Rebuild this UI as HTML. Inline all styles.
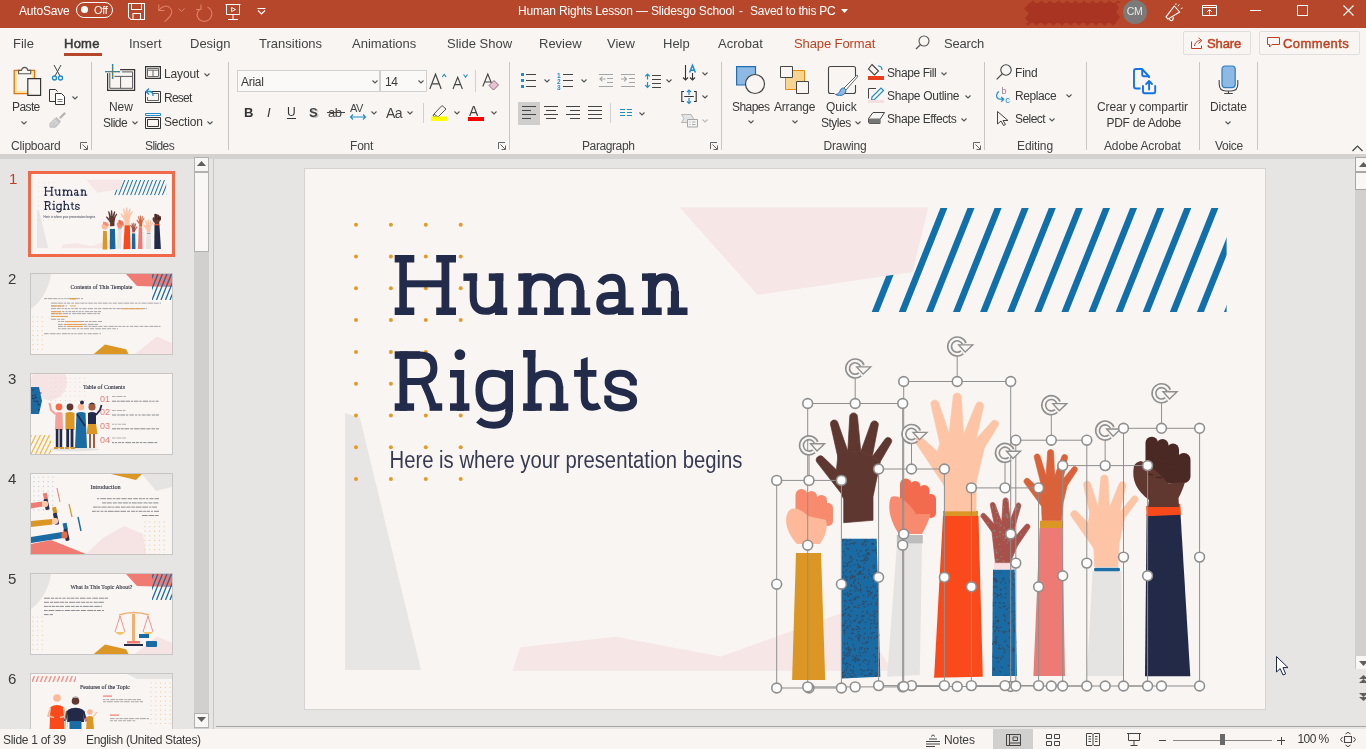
<!DOCTYPE html>
<html><head><meta charset="utf-8"><style>
html,body{margin:0;padding:0;width:1366px;height:749px;overflow:hidden;background:#e6e5e4;font-family:"Liberation Sans", sans-serif;}
.r{position:absolute;}
.t{position:absolute;line-height:1;white-space:nowrap;font-family:"Liberation Sans", sans-serif;}
svg{overflow:visible}
</style></head><body>
<div style="position:absolute;left:0;top:0;width:1366px;height:749px;will-change:transform"><div class="r" style="left:0px;top:0px;width:1366px;height:28px;background:#b7472a;"></div><div class="r" style="left:0px;top:28px;width:1366px;height:126px;background:#f8f5f2;"></div><div class="r" style="left:0px;top:154px;width:1366px;height:5px;background:#d4d2d0;"></div><div class="r" style="left:0px;top:159px;width:1366px;height:570px;background:#e6e5e4;"></div><div class="r" style="left:0px;top:729px;width:1366px;height:20px;background:#f8f5f2;"></div><div class="t " style="left:19px;top:4.84px;font-size:12px;color:#ffffff;letter-spacing:-0.2px;">AutoSave</div><div class="r" style="left:76px;top:2px;width:35px;height:14px;border:1px solid #fff;border-radius:8px;"></div><div class="r" style="left:81px;top:6px;width:7px;height:7px;border-radius:50%;background:#fff;"></div><div class="t " style="left:94px;top:4.69px;font-size:11px;color:#ffffff;letter-spacing:-0.3px;">Off</div><svg class="r" style="left:128px;top:3px;" width="18" height="18" viewBox="0 0 18 18"><path d="M0.5 0.5H16.5V16.5H3L0.5 14Z M3.5 0.5V6.5H13.5V0.5 M5 16.5V10.5H12.5V16.5" fill="none" stroke="#fff" stroke-width="1.05"/></svg><svg class="r" style="left:158px;top:3px;" width="16" height="18" viewBox="0 0 16 18"><path d="M0.8 1.5V7.5H6.5" fill="none" stroke="#e0826a" stroke-width="1.05"/><path d="M1.2 7C4 2.5 9.5 2 12.2 5C15.5 8.5 13 13 9 16.5L6.5 19" fill="none" stroke="#e0826a" stroke-width="1.05"/></svg><svg class="r" style="left:178px;top:8px;" width="7" height="4" viewBox="0 0 7 4"><path d="M0.5 0.5L3.5 3.5L6.5 0.5" fill="none" stroke="#e0826a" stroke-width="1"/></svg><svg class="r" style="left:196px;top:3px;" width="17" height="18" viewBox="0 0 17 18"><path d="M5 1.5V6.5H0" fill="none" stroke="#e0826a" stroke-width="1.05"/><path d="M4.5 6C1.5 8 0.5 11 1.5 14C3 17.5 7 19 10.5 18C14 17 16.2 13.5 15.8 10C15.5 7 13.5 5 11.5 4" fill="none" stroke="#e0826a" stroke-width="1.05"/></svg><svg class="r" style="left:225px;top:4px;" width="16" height="16" viewBox="0 0 16 16"><path d="M0.5 0.5H15.5 M1.5 0.5V10.5H14.5V0.5 M8 10.5V15.5 M3 15.5H13" fill="none" stroke="#fff" stroke-width="1"/><path d="M6.5 3.5L10.5 5.5L6.5 7.5Z" fill="none" stroke="#fff" stroke-width="1"/></svg><svg class="r" style="left:257px;top:8px;" width="9" height="7" viewBox="0 0 9 7"><path d="M0.5 0.5H8.5" stroke="#fff" stroke-width="1"/><path d="M1 2.5L4.5 6L8 2.5" fill="none" stroke="#fff" stroke-width="1.2"/></svg><div class="t " style="left:518px;top:5.34px;font-size:12px;color:#ffffff;letter-spacing:-0.17px;">Human Rights Lesson — Slidesgo School</div><div class="t " style="left:739px;top:5.34px;font-size:12px;color:#ffffff;">-</div><div class="t " style="left:750px;top:5.34px;font-size:12px;color:#ffffff;letter-spacing:-0.25px;">Saved to this PC</div><svg class="r" style="left:841px;top:9px;" width="7" height="4" viewBox="0 0 7 4"><path d="M0 0H7L3.5 4Z" fill="#fff"/></svg><svg class="r" style="left:0px;top:0px;" width="1366" height="28" viewBox="0 0 1366 28"><polygon points="1030.0,3.0 1033.0,0.5 1036.0,3.0 1038.5,3.0 1041.5,0.5 1044.5,3.0 1047.0,3.0 1050.0,0.5 1053.0,3.0 1055.5,3.0 1058.5,0.5 1061.5,3.0 1064.0,3.0 1067.0,0.5 1070.0,3.0 1072.5,3.0 1075.5,0.5 1078.5,3.0 1081.0,3.0 1084.0,0.5 1087.0,3.0 1089.5,3.0 1092.5,0.5 1095.5,3.0 1098.0,3.0 1101.0,0.5 1104.0,3.0 1106.5,3.0 1109.5,0.5 1112.5,3.0 1115.0,3.0 1118.0,0.5 1121.0,3.0 1116.0,3.0 1119.0,8.0 1116.0,12.0 1120.0,17.0 1116.0,23.0 1116.0,23.0 1113.0,25.5 1110.0,23.0 1107.5,23.0 1104.5,25.5 1101.5,23.0 1099.0,23.0 1096.0,25.5 1093.0,23.0 1090.5,23.0 1087.5,25.5 1084.5,23.0 1082.0,23.0 1079.0,25.5 1076.0,23.0 1073.5,23.0 1070.5,25.5 1067.5,23.0 1065.0,23.0 1062.0,25.5 1059.0,23.0 1056.5,23.0 1053.5,25.5 1050.5,23.0 1048.0,23.0 1045.0,25.5 1042.0,23.0 1039.5,23.0 1036.5,25.5 1033.5,23.0 1031.0,23.0 1028.0,25.5 1025.0,23.0 1029.0,23.0 1025.0,18.0 1029.0,13.0 1024.0,9.0 1029.0,3.0" fill="#aa3422"/></svg><div class="r" style="left:1123px;top:-0.5px;width:24px;height:24px;border-radius:50%;background:#7b7a79;"></div><div class="t " style="left:1126.8px;top:6.41px;font-size:10.5px;color:#e8e8e8;letter-spacing:-0.4px;">CM</div><svg class="r" style="left:1164px;top:4px;" width="19" height="17" viewBox="0 0 19 17"><path d="M2 12.9L10.3 2L15.7 8L4 15.1Z" fill="none" stroke="#fff" stroke-width="1.1" stroke-linejoin="round"/><path d="M5.5 14.3Q5.5 17 8 16.5Q9.5 16 9.2 13" fill="none" stroke="#fff" stroke-width="1.1"/><path d="M13.8 2.2L15.3 0.5 M16.8 4.6L18.6 4 M11.8 0.9L12 -0.6" stroke="#fff" stroke-width="1"/></svg><svg class="r" style="left:1202px;top:5px;" width="15" height="11" viewBox="0 0 15 11"><path d="M0.5 0.5H14.5V10.5H0.5Z M0.5 2.5H14.5 M7.5 9.5V5 M5 7L7.5 4.5L10 7" fill="none" stroke="#fff" stroke-width="1"/></svg><div class="r" style="left:1250px;top:10px;width:11px;height:1px;background:#fff;"></div><div class="r" style="left:1297px;top:5px;width:9px;height:9px;border:1px solid #fff;"></div><svg class="r" style="left:1343px;top:5px;" width="11" height="11" viewBox="0 0 11 11"><path d="M0.5 0.5L10.5 10.5M10.5 0.5L0.5 10.5" stroke="#fff" stroke-width="1.1"/></svg><div class="t " style="left:13px;top:37.30px;font-size:13px;color:#444444;">File</div><div class="t " style="left:129px;top:37.30px;font-size:13px;color:#444444;">Insert</div><div class="t " style="left:190px;top:37.30px;font-size:13px;color:#444444;">Design</div><div class="t " style="left:259px;top:37.30px;font-size:13px;color:#444444;">Transitions</div><div class="t " style="left:352px;top:37.30px;font-size:13px;color:#444444;">Animations</div><div class="t " style="left:447px;top:37.30px;font-size:13px;color:#444444;">Slide Show</div><div class="t " style="left:539px;top:37.30px;font-size:13px;color:#444444;">Review</div><div class="t " style="left:607px;top:37.30px;font-size:13px;color:#444444;">View</div><div class="t " style="left:663px;top:37.30px;font-size:13px;color:#444444;">Help</div><div class="t " style="left:718px;top:37.30px;font-size:13px;color:#444444;">Acrobat</div><div class="t " style="left:64px;top:37.30px;font-size:13px;color:#3a3a3a;letter-spacing:0.25px;-webkit-text-stroke:0.5px #3a3a3a;">Home</div><div class="r" style="left:64px;top:53px;width:38px;height:3px;background:#b7472a;"></div><div class="t " style="left:794px;top:37.30px;font-size:13px;color:#c43e1c;letter-spacing:-0.1px;">Shape Format</div><svg class="r" style="left:915px;top:35px;" width="15" height="15" viewBox="0 0 15 15"><circle cx="9" cy="6" r="5" fill="none" stroke="#555" stroke-width="1.1"/><path d="M5.5 9.5L1 14" stroke="#555" stroke-width="1.2"/></svg><div class="t " style="left:944px;top:37.30px;font-size:13px;color:#444444;letter-spacing:-0.2px;">Search</div><div class="r" style="left:1183px;top:31px;width:66px;height:22px;border:1px solid #e1dfdd;border-radius:2px;"></div><div class="r" style="left:1259px;top:31px;width:99px;height:22px;border:1px solid #e1dfdd;border-radius:2px;"></div><svg class="r" style="left:1191px;top:37px;" width="13" height="12" viewBox="0 0 13 12"><path d="M0.5 4.5V11.5H10.5V8.5 M3.5 9 C4 5 7 3.5 9.5 3.5 M7.5 0.8L10.8 3.6L7.5 6.4" fill="none" stroke="#c43e1c" stroke-width="1"/></svg><div class="t " style="left:1207px;top:37.30px;font-size:13px;color:#c43e1c;letter-spacing:-0.1px;-webkit-text-stroke:0.45px #c43e1c;">Share</div><svg class="r" style="left:1267px;top:37px;" width="13" height="11" viewBox="0 0 13 11"><path d="M0.5 0.5H12.5V7.5H5L2.5 10V7.5H0.5Z" fill="none" stroke="#c43e1c" stroke-width="1"/></svg><div class="t " style="left:1283px;top:37.30px;font-size:13px;color:#c43e1c;letter-spacing:0.4px;-webkit-text-stroke:0.45px #c43e1c;">Comments</div><div class="r" style="left:91px;top:62px;width:1px;height:88px;background:#c8c6c4;"></div><div class="r" style="left:228px;top:62px;width:1px;height:88px;background:#c8c6c4;"></div><div class="r" style="left:509px;top:62px;width:1px;height:88px;background:#c8c6c4;"></div><div class="r" style="left:721px;top:62px;width:1px;height:88px;background:#c8c6c4;"></div><div class="r" style="left:984px;top:62px;width:1px;height:88px;background:#c8c6c4;"></div><div class="r" style="left:1086px;top:62px;width:1px;height:88px;background:#c8c6c4;"></div><div class="r" style="left:1199px;top:62px;width:1px;height:88px;background:#c8c6c4;"></div><div class="r" style="left:1257px;top:62px;width:1px;height:88px;background:#c8c6c4;"></div><svg class="r" style="left:13px;top:65px;" width="29" height="32" viewBox="0 0 29 32"><path d="M1.2 5.3H21.6V28.6H1.2Z" fill="#fbe3a6" stroke="#e3730f" stroke-width="1.3"/><path d="M3.9 8H18.9V25.9H3.9Z" fill="#f8f5f2"/><path d="M5.6 8.8H17.7V5.4H14.8C14.3 1.3 9 1.3 8.5 5.4H5.6Z" fill="#f8f5f2" stroke="#5a5a5a" stroke-width="1.1"/><path d="M14.8 13.6H27.6V30.4H14.8Z" fill="#f8f5f2" stroke="#333" stroke-width="1.15"/></svg><div class="t " style="left:12px;top:100.54px;font-size:12px;color:#3b3a39;letter-spacing:-0.6px;">Paste</div><svg class="r" style="left:21px;top:121px;" width="6" height="4" viewBox="0 0 6 4"><path d="M0.5 0.5L3 3L5.5 0.5" fill="none" stroke="#555" stroke-width="1.1"/></svg><svg class="r" style="left:52px;top:65px;" width="11" height="16" viewBox="0 0 11 16"><path d="M2 0 L8 11 M9 0 L3 11" stroke="#444" stroke-width="1"/><circle cx="2.5" cy="13" r="2" fill="none" stroke="#1e8bcd" stroke-width="1.3"/><circle cx="8.5" cy="13" r="2" fill="none" stroke="#1e8bcd" stroke-width="1.3"/></svg><svg class="r" style="left:49px;top:89px;" width="17" height="16" viewBox="0 0 17 16"><path d="M7 12.5H0.5V0.5H6.5L8.5 2.5" fill="none" stroke="#333" stroke-width="1"/><path d="M6.5 4.5H12.5L15.5 7.5V15.5H6.5Z" fill="#fff" stroke="#333" stroke-width="1"/><path d="M8.5 10.5H13.5 M8.5 12.5H13.5" stroke="#555" stroke-width="0.8"/></svg><svg class="r" style="left:72px;top:96px;" width="6" height="4" viewBox="0 0 6 4"><path d="M0.5 0.5L3 3L5.5 0.5" fill="none" stroke="#555" stroke-width="1.1"/></svg><svg class="r" style="left:49px;top:112px;" width="17" height="16" viewBox="0 0 17 16"><path d="M11.5 5.5L15.5 1.5" stroke="#b5b5b5" stroke-width="2.4" stroke-linecap="round"/><polygon points="7.5,5 12,9.5 10.5,11 6,6.5" fill="#bdbdbd"/><polygon points="6,6.5 10.5,11 6.5,15.2 1,15.2 0.8,11.5" fill="#d3d3d3" stroke="#b8b8b8" stroke-width="0.8"/><path d="M3 14.5L6 10 M5.5 15L8 12" stroke="#b8b8b8" stroke-width="0.7"/></svg><div class="t " style="left:11px;top:140.14px;font-size:12px;color:#444444;letter-spacing:-0.2px;">Clipboard</div><svg class="r" style="left:80px;top:142px;" width="8" height="8" viewBox="0 0 8 8"><path d="M0.5 7V0.5H7 M2.5 2.5L7.5 7.5 M7.5 3.5V7.5H3.5" fill="none" stroke="#666" stroke-width="1"/></svg><svg class="r" style="left:104px;top:63px;" width="32" height="29" viewBox="0 0 32 29"><path d="M16.1 6.7H30.6V27.4H3.6V10.2" fill="none" stroke="#333" stroke-width="1.2"/><path d="M18 8.9H28.6V25.3H5.8V10 M10.5 13.4H28.6 M16.6 13.4V25.3" fill="none" stroke="#5a5a5a" stroke-width="1"/><path d="M1.2 8.6H16.1 M8.6 1.1V16.1" stroke="#7a7a3a" stroke-width="1.3"/><path d="M1.2 8.6H16.1 M8.6 1.1V16.1" stroke="#1e8bcd" stroke-width="1.3" stroke-dasharray="1.6 1.6"/></svg><div class="t " style="left:109px;top:100.54px;font-size:12px;color:#3b3a39;letter-spacing:-0.1px;">New</div><div class="t " style="left:103px;top:116.64px;font-size:12px;color:#3b3a39;letter-spacing:-0.5px;">Slide</div><svg class="r" style="left:132px;top:121px;" width="6" height="4" viewBox="0 0 6 4"><path d="M0.5 0.5L3 3L5.5 0.5" fill="none" stroke="#555" stroke-width="1.1"/></svg><svg class="r" style="left:145px;top:66px;" width="16" height="13" viewBox="0 0 16 13"><path d="M0.6 0.6H15.4V12.4H0.6Z" fill="none" stroke="#333" stroke-width="1.2"/><path d="M2.5 2.5H13.5V10.5H2.5Z M2.5 4.2H13.5 M8 4.2V10.5" fill="none" stroke="#5a5a5a" stroke-width="0.9"/></svg><div class="t " style="left:164px;top:67.84px;font-size:12px;color:#3b3a39;letter-spacing:-0.15px;">Layout</div><svg class="r" style="left:204px;top:73px;" width="6" height="4" viewBox="0 0 6 4"><path d="M0.5 0.5L3 3L5.5 0.5" fill="none" stroke="#555" stroke-width="1.1"/></svg><svg class="r" style="left:145px;top:88px;" width="16" height="15" viewBox="0 0 16 15"><path d="M0.5 3.5H15.5V14.5H0.5Z" fill="none" stroke="#333" stroke-width="1"/><path d="M8 5.5H13.5V12.5H2.5V9" fill="none" stroke="#555" stroke-width="0.9"/><path d="M4 0.5L1 3.5L4 6.5 M1.5 3.5H5C8 3.5 8 7.5 8 8" fill="none" stroke="#1e8bcd" stroke-width="1.3"/></svg><div class="t " style="left:164px;top:92.04px;font-size:12px;color:#3b3a39;letter-spacing:-0.75px;">Reset</div><svg class="r" style="left:145px;top:113px;" width="16" height="16" viewBox="0 0 16 16"><path d="M0.5 0.5H15.5V2.5H0.5Z" fill="none" stroke="#1e8bcd" stroke-width="1"/><path d="M0.5 4.5H15.5V15.5H0.5Z M2.5 6.5H13.5V13.5H2.5Z" fill="none" stroke="#333" stroke-width="1"/></svg><div class="t " style="left:164px;top:115.84px;font-size:12px;color:#3b3a39;letter-spacing:-0.2px;">Section</div><svg class="r" style="left:207px;top:121px;" width="6" height="4" viewBox="0 0 6 4"><path d="M0.5 0.5L3 3L5.5 0.5" fill="none" stroke="#555" stroke-width="1.1"/></svg><div class="t " style="left:145px;top:140.14px;font-size:12px;color:#444444;letter-spacing:-0.6px;">Slides</div><div class="r" style="left:237px;top:70px;width:143px;height:22px;border:1px solid #d2d0ce;box-sizing:border-box;background:#faf9f8"></div><div class="r" style="left:380px;top:70px;width:47px;height:22px;border:1px solid #d2d0ce;box-sizing:border-box;background:#faf9f8"></div><div class="t " style="left:241px;top:75.64px;font-size:12px;color:#3b3a39;letter-spacing:-0.3px;">Arial</div><svg class="r" style="left:372px;top:80px;" width="6" height="4" viewBox="0 0 6 4"><path d="M0.5 0.5L3 3L5.5 0.5" fill="none" stroke="#555" stroke-width="1.1"/></svg><div class="t " style="left:385px;top:75.64px;font-size:12px;color:#3b3a39;letter-spacing:-0.3px;">14</div><svg class="r" style="left:418px;top:80px;" width="6" height="4" viewBox="0 0 6 4"><path d="M0.5 0.5L3 3L5.5 0.5" fill="none" stroke="#555" stroke-width="1.1"/></svg><svg class="r" style="left:429px;top:73px;" width="18" height="17" viewBox="0 0 18 17"><path d="M0.8 16L6.5 1.2L12.2 16 M2.9 10.8H10.1" fill="none" stroke="#444" stroke-width="1.15"/><path d="M13.2 4L15.2 1.5L17.2 4" fill="none" stroke="#1e8bcd" stroke-width="1.1"/></svg><svg class="r" style="left:452px;top:73px;" width="17" height="17" viewBox="0 0 17 17"><path d="M1 16L5.7 4.3L10.4 16 M2.8 11.6H8.6" fill="none" stroke="#444" stroke-width="1.1"/><path d="M11.5 1.5L13.5 4L15.5 1.5" fill="none" stroke="#1e8bcd" stroke-width="1.1"/></svg><div class="r" style="left:475px;top:70px;width:1px;height:22px;background:#d2d0ce;"></div><svg class="r" style="left:482px;top:73px;" width="18" height="17" viewBox="0 0 18 17"><path d="M0.8 13.5L5.8 1L10.8 13.5 M2.6 9H9" fill="none" stroke="#444" stroke-width="1.1"/><path d="M7 12.5L12 7.5L16.5 12L11.5 17Z" fill="#e7c3d2" stroke="#8a6a7a" stroke-width="1"/></svg><div class="t " style="left:244px;top:106.00px;font-size:13px;color:#333;font-weight:700;">B</div><div class="t " style="left:267px;top:106.00px;font-size:13px;color:#333;font-style:italic;font-family:"Liberation Serif",serif;">I</div><div class="t " style="left:287px;top:105.84px;font-size:12px;color:#333;">U</div><div class="r" style="left:287px;top:118px;width:9px;height:1px;background:#333;"></div><div class="t " style="left:310.5px;top:107.30px;font-size:13px;color:#c8c6c4;font-weight:700;">S</div><div class="t " style="left:309px;top:106.00px;font-size:13px;color:#444;font-weight:700;">S</div><div class="t " style="left:328px;top:106.00px;font-size:13px;color:#444;letter-spacing:-0.5px;">ab</div><div class="r" style="left:327px;top:112px;width:18px;height:1px;background:#444;"></div><div class="t " style="left:350px;top:102.69px;font-size:11px;color:#444;letter-spacing:-0.6px;">AV</div><svg class="r" style="left:350px;top:114px;" width="16" height="6" viewBox="0 0 16 6"><path d="M0.5 3H15.5 M3 0.5L0.5 3L3 5.5 M13 0.5L15.5 3L13 5.5" fill="none" stroke="#1e8bcd" stroke-width="1.1"/></svg><svg class="r" style="left:371px;top:111px;" width="6" height="4" viewBox="0 0 6 4"><path d="M0.5 0.5L3 3L5.5 0.5" fill="none" stroke="#555" stroke-width="1.1"/></svg><div class="t " style="left:386px;top:106.15px;font-size:14px;color:#444;letter-spacing:-0.6px;">Aa</div><svg class="r" style="left:407px;top:111px;" width="6" height="4" viewBox="0 0 6 4"><path d="M0.5 0.5L3 3L5.5 0.5" fill="none" stroke="#555" stroke-width="1.1"/></svg><div class="r" style="left:423px;top:103px;width:1px;height:20px;background:#d2d0ce;"></div><svg class="r" style="left:431px;top:104px;" width="16" height="17" viewBox="0 0 16 17"><path d="M3 10 L11 1.5 L15 5 L7 13 Z M3 10 L2 12 L4 13 L7 13" fill="none" stroke="#555" stroke-width="1"/><path d="M0 12.5H16V17H0Z" fill="#ffff00"/></svg><svg class="r" style="left:454px;top:111px;" width="6" height="4" viewBox="0 0 6 4"><path d="M0.5 0.5L3 3L5.5 0.5" fill="none" stroke="#555" stroke-width="1.1"/></svg><div class="t " style="left:469px;top:104.15px;font-size:14px;color:#444;">A</div><div class="r" style="left:468px;top:117px;width:16px;height:4px;background:#ff0000;"></div><svg class="r" style="left:491px;top:111px;" width="6" height="4" viewBox="0 0 6 4"><path d="M0.5 0.5L3 3L5.5 0.5" fill="none" stroke="#555" stroke-width="1.1"/></svg><div class="t " style="left:350px;top:140.14px;font-size:12px;color:#444444;letter-spacing:-0.2px;">Font</div><svg class="r" style="left:498px;top:142px;" width="8" height="8" viewBox="0 0 8 8"><path d="M0.5 7V0.5H7 M2.5 2.5L7.5 7.5 M7.5 3.5V7.5H3.5" fill="none" stroke="#666" stroke-width="1"/></svg><div class="r" style="left:521px;top:73px;width:3px;height:3px;background:#1e8bcd;"></div><div class="r" style="left:521px;top:79px;width:3px;height:3px;background:#1e8bcd;"></div><div class="r" style="left:521px;top:85px;width:3px;height:3px;background:#1e8bcd;"></div><div class="r" style="left:526px;top:74px;width:10px;height:1px;background:#444"></div><div class="r" style="left:526px;top:80px;width:10px;height:1px;background:#444"></div><div class="r" style="left:526px;top:86px;width:10px;height:1px;background:#444"></div><svg class="r" style="left:544px;top:79px;" width="6" height="4" viewBox="0 0 6 4"><path d="M0.5 0.5L3 3L5.5 0.5" fill="none" stroke="#555" stroke-width="1.1"/></svg><svg class="r" style="left:557px;top:72px;" width="6" height="17" viewBox="0 0 6 17"><text x="0" y="6" font-size="6.5" fill="#1e8bcd" font-family="Liberation Sans" font-weight="700">1</text><text x="0" y="12" font-size="6.5" fill="#1e8bcd" font-family="Liberation Sans" font-weight="700">2</text><text x="0" y="18" font-size="6.5" fill="#1e8bcd" font-family="Liberation Sans" font-weight="700">3</text></svg><div class="r" style="left:563px;top:74px;width:10px;height:1px;background:#444"></div><div class="r" style="left:563px;top:80px;width:10px;height:1px;background:#444"></div><div class="r" style="left:563px;top:86px;width:10px;height:1px;background:#444"></div><svg class="r" style="left:581px;top:79px;" width="6" height="4" viewBox="0 0 6 4"><path d="M0.5 0.5L3 3L5.5 0.5" fill="none" stroke="#555" stroke-width="1.1"/></svg><div class="r" style="left:599px;top:74px;width:14px;height:1px;background:#a5a5a5"></div><div class="r" style="left:599px;top:86px;width:14px;height:1px;background:#a5a5a5"></div><div class="r" style="left:607px;top:78px;width:6px;height:1px;background:#a5a5a5"></div><div class="r" style="left:607px;top:82px;width:6px;height:1px;background:#a5a5a5"></div><svg class="r" style="left:599px;top:76px;" width="7" height="6" viewBox="0 0 7 6"><path d="M6.5 3H1 M3.3 0.7L1 3L3.3 5.3" fill="none" stroke="#a5a5a5" stroke-width="1.1"/></svg><div class="r" style="left:621px;top:74px;width:14px;height:1px;background:#a5a5a5"></div><div class="r" style="left:621px;top:86px;width:14px;height:1px;background:#a5a5a5"></div><div class="r" style="left:629px;top:78px;width:6px;height:1px;background:#a5a5a5"></div><div class="r" style="left:629px;top:82px;width:6px;height:1px;background:#a5a5a5"></div><svg class="r" style="left:621px;top:76px;" width="7" height="6" viewBox="0 0 7 6"><path d="M0 3H5.5 M3.2 0.7L5.5 3L3.2 5.3" fill="none" stroke="#a5a5a5" stroke-width="1.1"/></svg><div class="r" style="left:652px;top:74.5px;width:9px;height:1px;background:#444"></div><div class="r" style="left:652px;top:78.5px;width:9px;height:1px;background:#444"></div><div class="r" style="left:652px;top:82.5px;width:9px;height:1px;background:#444"></div><div class="r" style="left:652px;top:86.5px;width:9px;height:1px;background:#444"></div><svg class="r" style="left:644px;top:73px;" width="7" height="16" viewBox="0 0 7 16"><path d="M3.5 1V6.5 M1.2 3.3L3.5 1L5.8 3.3 M3.5 9V14.5 M1.2 12.2L3.5 14.5L5.8 12.2" fill="none" stroke="#1e8bcd" stroke-width="1.2"/></svg><svg class="r" style="left:666px;top:79px;" width="6" height="4" viewBox="0 0 6 4"><path d="M0.5 0.5L3 3L5.5 0.5" fill="none" stroke="#555" stroke-width="1.1"/></svg><svg class="r" style="left:681px;top:64px;" width="17" height="18" viewBox="0 0 17 18"><path d="M4.5 1V16 M2 13.5L4.5 16L7 13.5 M11.5 9V16 M9 13.5L11.5 16L14 13.5" fill="none" stroke="#333" stroke-width="1.1"/><path d="M8.6 8.6L11.5 1.2L14.4 8.6 M9.6 6.2H13.4" fill="none" stroke="#1e8bcd" stroke-width="1.5"/></svg><svg class="r" style="left:702px;top:72px;" width="6" height="4" viewBox="0 0 6 4"><path d="M0.5 0.5L3 3L5.5 0.5" fill="none" stroke="#555" stroke-width="1.1"/></svg><svg class="r" style="left:681px;top:89px;" width="17" height="16" viewBox="0 0 17 16"><path d="M3 2.5H0.8V12.5H3 M13 2.5H15.2V12.5H13 M3.2 7.5H12.8" fill="none" stroke="#333" stroke-width="1.1"/><path d="M8 1V6 M5.9 3.1L8 1L10.1 3.1 M8 9V14.5 M5.9 12.4L8 14.5L10.1 12.4" fill="none" stroke="#1e8bcd" stroke-width="1.2"/></svg><svg class="r" style="left:702px;top:95px;" width="6" height="4" viewBox="0 0 6 4"><path d="M0.5 0.5L3 3L5.5 0.5" fill="none" stroke="#555" stroke-width="1.1"/></svg><svg class="r" style="left:681px;top:114px;" width="17" height="14" viewBox="0 0 17 14"><path d="M0.5 0.5H10L12.5 4.5L10 8.5H0.5L3 4.5Z" fill="#e4e4e4" stroke="#b5b5b5" stroke-width="1"/><path d="M6.5 5.5H16.5V13H6.5Z" fill="#f3f3f3" stroke="#a5a5a5" stroke-width="1"/><path d="M8.5 8H9.5 M11 8H14.5 M8.5 10.5H9.5 M11 10.5H14.5" stroke="#a5a5a5" stroke-width="0.9"/></svg><svg class="r" style="left:702px;top:119px;" width="6" height="4" viewBox="0 0 6 4"><path d="M0.5 0.5L3 3L5.5 0.5" fill="none" stroke="#bbb" stroke-width="1.1"/></svg><div class="r" style="left:518px;top:102px;width:22px;height:23px;background:#d0cecc;"></div><div class="r" style="left:522px;top:106px;width:14px;height:1px;background:#444"></div><div class="r" style="left:522px;top:110px;width:9px;height:1px;background:#444"></div><div class="r" style="left:522px;top:114px;width:14px;height:1px;background:#444"></div><div class="r" style="left:522px;top:118px;width:9px;height:1px;background:#444"></div><div class="r" style="left:544px;top:106px;width:14px;height:1px;background:#444"></div><div class="r" style="left:546px;top:110px;width:10px;height:1px;background:#444"></div><div class="r" style="left:544px;top:114px;width:14px;height:1px;background:#444"></div><div class="r" style="left:546px;top:118px;width:10px;height:1px;background:#444"></div><div class="r" style="left:566px;top:106px;width:14px;height:1px;background:#444"></div><div class="r" style="left:570px;top:110px;width:10px;height:1px;background:#444"></div><div class="r" style="left:566px;top:114px;width:14px;height:1px;background:#444"></div><div class="r" style="left:570px;top:118px;width:10px;height:1px;background:#444"></div><div class="r" style="left:588px;top:106px;width:14px;height:1px;background:#444"></div><div class="r" style="left:588px;top:110px;width:14px;height:1px;background:#444"></div><div class="r" style="left:588px;top:114px;width:14px;height:1px;background:#444"></div><div class="r" style="left:588px;top:118px;width:14px;height:1px;background:#444"></div><div class="r" style="left:610px;top:103px;width:1px;height:20px;background:#d2d0ce;"></div><div class="r" style="left:620px;top:109px;width:5px;height:1px;background:#1e8bcd"></div><div class="r" style="left:620px;top:112px;width:5px;height:1px;background:#1e8bcd"></div><div class="r" style="left:620px;top:115px;width:5px;height:1px;background:#1e8bcd"></div><div class="r" style="left:627px;top:109px;width:5px;height:1px;background:#1e8bcd"></div><div class="r" style="left:627px;top:112px;width:5px;height:1px;background:#1e8bcd"></div><div class="r" style="left:627px;top:115px;width:5px;height:1px;background:#1e8bcd"></div><svg class="r" style="left:639px;top:112px;" width="6" height="4" viewBox="0 0 6 4"><path d="M0.5 0.5L3 3L5.5 0.5" fill="none" stroke="#555" stroke-width="1.1"/></svg><div class="t " style="left:582px;top:140.14px;font-size:12px;color:#444444;letter-spacing:-0.4px;">Paragraph</div><svg class="r" style="left:710px;top:142px;" width="8" height="8" viewBox="0 0 8 8"><path d="M0.5 7V0.5H7 M2.5 2.5L7.5 7.5 M7.5 3.5V7.5H3.5" fill="none" stroke="#666" stroke-width="1"/></svg><svg class="r" style="left:736px;top:66px;" width="31" height="30" viewBox="0 0 31 30"><path d="M0.6 0.6H19.5V19H0.6Z" fill="#8db9e2" stroke="#1e6fb5" stroke-width="1.2"/><circle cx="19" cy="18" r="9.5" fill="#f8f5f2" stroke="#444" stroke-width="1.2"/></svg><div class="t " style="left:732px;top:100.54px;font-size:12px;color:#3b3a39;letter-spacing:-0.55px;">Shapes</div><svg class="r" style="left:748px;top:120px;" width="6" height="4" viewBox="0 0 6 4"><path d="M0.5 0.5L3 3L5.5 0.5" fill="none" stroke="#555" stroke-width="1.1"/></svg><svg class="r" style="left:780px;top:66px;" width="30" height="28" viewBox="0 0 30 28"><path d="M5.5 4.5H24.5V23.5H5.5Z" fill="#f7d48f" stroke="#e8870b" stroke-width="1"/><path d="M0.5 0.5H12.5V11.5H0.5Z" fill="#f8f5f2" stroke="#444" stroke-width="1"/><path d="M16.5 15.5H28.5V27.5H16.5Z" fill="#f8f5f2" stroke="#444" stroke-width="1"/></svg><div class="t " style="left:774px;top:100.54px;font-size:12px;color:#3b3a39;letter-spacing:-0.2px;">Arrange</div><svg class="r" style="left:792px;top:120px;" width="6" height="4" viewBox="0 0 6 4"><path d="M0.5 0.5L3 3L5.5 0.5" fill="none" stroke="#555" stroke-width="1.1"/></svg><svg class="r" style="left:828px;top:66px;" width="30" height="30" viewBox="0 0 30 30"><path d="M2.5 0.5H25.5Q27.5 0.5 27.5 2.5V10 M27.5 19V25.5Q27.5 27.5 25.5 27.5H14 M6.5 27.5H2.5Q0.5 27.5 0.5 25.5V2.5Q0.5 0.5 2.5 0.5" fill="none" stroke="#444" stroke-width="1.1"/><path d="M15.5 22.5L28.3 9.7Q30 8.5 29.5 10.8L17.5 24.5Z" fill="#fff" stroke="#555" stroke-width="0.9"/><path d="M7.5 28.5C10 28.5 11.5 26.5 12.5 24C13.5 21.5 16 21.5 17.5 23.5C18.5 25.5 17 28.8 13 29.3C11 29.6 9 29.2 7.5 28.5Z" fill="#8db9e2" stroke="#1e6fb5" stroke-width="1"/></svg><div class="t " style="left:826px;top:100.54px;font-size:12px;color:#3b3a39;letter-spacing:0px;">Quick</div><div class="t " style="left:821px;top:116.54px;font-size:12px;color:#3b3a39;letter-spacing:-0.5px;">Styles</div><svg class="r" style="left:855px;top:121px;" width="6" height="4" viewBox="0 0 6 4"><path d="M0.5 0.5L3 3L5.5 0.5" fill="none" stroke="#555" stroke-width="1.1"/></svg><svg class="r" style="left:868px;top:63px;" width="17" height="17" viewBox="0 0 17 17"><path d="M4 1.5L10.5 8L6.5 12L0.5 6Z" fill="none" stroke="#444" stroke-width="1.1"/><path d="M10 3 Q14 3 14 7" fill="none" stroke="#1e8bcd" stroke-width="1.2"/><path d="M0 13H16V17H0Z" fill="#e8401c"/></svg><div class="t " style="left:887px;top:67.44px;font-size:12px;color:#3b3a39;letter-spacing:-0.4px;">Shape Fill</div><svg class="r" style="left:941px;top:72px;" width="6" height="4" viewBox="0 0 6 4"><path d="M0.5 0.5L3 3L5.5 0.5" fill="none" stroke="#555" stroke-width="1.1"/></svg><svg class="r" style="left:868px;top:86px;" width="17" height="17" viewBox="0 0 17 17"><path d="M0.5 12.5V2.5H8" fill="none" stroke="#444" stroke-width="1"/><path d="M4 11 L13 2 L15.5 4.5 L6.5 13.5 L3.5 14 Z" fill="#ffffff" stroke="#1e8bcd" stroke-width="1.2"/><path d="M0 14H16V17H0Z" fill="#f5dede"/></svg><div class="t " style="left:887px;top:90.14px;font-size:12px;color:#3b3a39;letter-spacing:-0.3px;">Shape Outline</div><svg class="r" style="left:965px;top:95px;" width="6" height="4" viewBox="0 0 6 4"><path d="M0.5 0.5L3 3L5.5 0.5" fill="none" stroke="#555" stroke-width="1.1"/></svg><svg class="r" style="left:868px;top:112px;" width="17" height="12" viewBox="0 0 17 12"><path d="M0.5 6.5L5 0.5H16.5L12 7.5V11.5H1.5L0.5 10Z" fill="#f8f5f2" stroke="#444" stroke-width="1"/><path d="M0.5 6.5H12L12 11.5H1Z" fill="#777"/></svg><div class="t " style="left:887px;top:113.24px;font-size:12px;color:#3b3a39;letter-spacing:-0.4px;">Shape Effects</div><svg class="r" style="left:961px;top:118px;" width="6" height="4" viewBox="0 0 6 4"><path d="M0.5 0.5L3 3L5.5 0.5" fill="none" stroke="#555" stroke-width="1.1"/></svg><div class="t " style="left:823.5px;top:140.14px;font-size:12px;color:#444444;letter-spacing:-0.15px;">Drawing</div><svg class="r" style="left:973px;top:142px;" width="8" height="8" viewBox="0 0 8 8"><path d="M0.5 7V0.5H7 M2.5 2.5L7.5 7.5 M7.5 3.5V7.5H3.5" fill="none" stroke="#666" stroke-width="1"/></svg><svg class="r" style="left:996px;top:64px;" width="16" height="16" viewBox="0 0 16 16"><circle cx="10" cy="6" r="5.2" fill="none" stroke="#444" stroke-width="1.1"/><path d="M6.2 9.8L0.7 15.3" stroke="#444" stroke-width="1.2"/></svg><div class="t " style="left:1015px;top:66.84px;font-size:12px;color:#3b3a39;letter-spacing:-0.2px;">Find</div><svg class="r" style="left:995px;top:87px;" width="17" height="17" viewBox="0 0 17 17"><text x="6.6" y="7.3" font-size="9" fill="#a07a88" font-family="Liberation Sans">b</text><text x="10.2" y="15.6" font-size="9.5" fill="#1e8bcd" font-family="Liberation Sans">c</text><path d="M3.9 4.6C1 6.5 0.8 10.5 3.5 11.8L8.6 12.3 M6.2 9.9L8.7 12.3L6.2 14.7" fill="none" stroke="#1e8bcd" stroke-width="1.2"/></svg><div class="t " style="left:1015px;top:90.04px;font-size:12px;color:#3b3a39;letter-spacing:-0.4px;">Replace</div><svg class="r" style="left:1066px;top:94px;" width="6" height="4" viewBox="0 0 6 4"><path d="M0.5 0.5L3 3L5.5 0.5" fill="none" stroke="#555" stroke-width="1.1"/></svg><svg class="r" style="left:997px;top:111px;" width="12" height="15" viewBox="0 0 12 15"><path d="M0.5 0.5V13L4 10L6.5 14.5L8.5 13.5L6 9.5H11Z" fill="none" stroke="#444" stroke-width="1"/></svg><div class="t " style="left:1015px;top:112.64px;font-size:12px;color:#3b3a39;letter-spacing:-0.55px;">Select</div><svg class="r" style="left:1049px;top:118px;" width="6" height="4" viewBox="0 0 6 4"><path d="M0.5 0.5L3 3L5.5 0.5" fill="none" stroke="#555" stroke-width="1.1"/></svg><div class="t " style="left:1017px;top:140.14px;font-size:12px;color:#444444;letter-spacing:-0.1px;">Editing</div><svg class="r" style="left:1132px;top:68px;" width="26" height="27" viewBox="0 0 26 27"><path d="M8.5 20.5H4Q2 20.5 2 18.5V3Q2 1 4 1H10L17 8.5V10" fill="none" stroke="#1473e6" stroke-width="1.9" stroke-linejoin="round"/><path d="M10.2 1.5V6.5Q10.2 8.3 12 8.3H16.5" fill="none" stroke="#1473e6" stroke-width="1.9"/><path d="M11 18V23.5Q11 25.2 12.7 25.2H21.5Q23.2 25.2 23.2 23.5V18" fill="none" stroke="#1473e6" stroke-width="1.9" stroke-linecap="round"/><path d="M17.1 21.5V13.5 M14.2 16L17.1 13L20 16" fill="none" stroke="#1473e6" stroke-width="1.9" stroke-linecap="round" stroke-linejoin="round"/></svg><div class="t " style="left:1097px;top:100.84px;font-size:12px;color:#3b3a39;letter-spacing:-0.1px;">Crear y compartir</div><div class="t " style="left:1106.5px;top:116.84px;font-size:12px;color:#3b3a39;letter-spacing:-0.3px;">PDF de Adobe</div><div class="t " style="left:1104px;top:140.14px;font-size:12px;color:#444444;letter-spacing:-0.15px;">Adobe Acrobat</div><svg class="r" style="left:1218px;top:65px;" width="21" height="30" viewBox="0 0 21 30"><rect x="4" y="1" width="13.2" height="21.6" rx="3" fill="#8db9e2" stroke="#2f7fc1" stroke-width="1.2"/><path d="M1.2 15V19Q1.2 26 8 26H13Q19.8 26 19.8 19V15" fill="none" stroke="#444" stroke-width="1.1"/><path d="M10.5 26V28.3 M6.2 28.5H14.8" stroke="#444" stroke-width="1.1"/></svg><div class="t " style="left:1210px;top:100.84px;font-size:12px;color:#3b3a39;letter-spacing:-0.05px;">Dictate</div><svg class="r" style="left:1225px;top:121px;" width="6" height="4" viewBox="0 0 6 4"><path d="M0.5 0.5L3 3L5.5 0.5" fill="none" stroke="#555" stroke-width="1.1"/></svg><div class="t " style="left:1215px;top:140.14px;font-size:12px;color:#444444;letter-spacing:-0.3px;">Voice</div><svg class="r" style="left:1352px;top:145px;" width="11" height="7" viewBox="0 0 11 7"><path d="M0.5 6L5.5 1L10.5 6" fill="none" stroke="#444" stroke-width="1.2"/></svg><div class="r" style="left:0px;top:159px;width:213px;height:570px;background:#e6e5e4;"></div><div class="r" style="left:213px;top:159px;width:1px;height:570px;background:#c8c6c4;"></div><div class="r" style="left:194px;top:172px;width:15px;height:557px;background:#d2d0ce;"></div><div class="r" style="left:194px;top:157px;width:13px;height:13px;border:1px solid #b3b1af;background:#f9f7f5"></div><svg class="r" style="left:197px;top:161px;" width="9" height="5" viewBox="0 0 9 5"><path d="M0 5L4.5 0L9 5Z" fill="#605e5c"/></svg><div class="r" style="left:194px;top:172px;width:13px;height:78px;border:1px solid #b3b1af;background:#f9f7f5;box-sizing:content-box"></div><div class="r" style="left:194px;top:713px;width:13px;height:13px;border:1px solid #b3b1af;background:#f9f7f5"></div><svg class="r" style="left:197px;top:717px;" width="9" height="5" viewBox="0 0 9 5"><path d="M0 0L4.5 5L9 0Z" fill="#605e5c"/></svg><div class="t " style="left:9px;top:171.10px;font-size:15px;color:#c43e1c;">1</div><div class="t " style="left:8px;top:271.10px;font-size:15px;color:#3b3a39;">2</div><div class="t " style="left:8px;top:371.10px;font-size:15px;color:#3b3a39;">3</div><div class="t " style="left:8px;top:471.10px;font-size:15px;color:#3b3a39;">4</div><div class="t " style="left:8px;top:571.10px;font-size:15px;color:#3b3a39;">5</div><div class="t " style="left:8px;top:671.10px;font-size:15px;color:#3b3a39;">6</div><div class="r" style="left:28px;top:171px;width:141px;height:80px;border:3px solid #f2694a;"></div><svg class="r" style="left:31px;top:174px" width="141" height="80"><use href="#s1" width="141" height="80"/></svg><div class="r" style="left:30px;top:273px;width:141px;height:80px;border:1px solid #c8c6c4;"></div><svg class="r" style="left:31px;top:274px;overflow:hidden" width="141" height="80" viewBox="0 0 141 80"><rect width="141" height="80" fill="#f9f5f2"/><path d="M0 0H20C18 15 10 28 0 35Z" fill="#e6e4e2"/><polygon points="95,0 141,0 141,13 106,12" fill="#ef7b72"/><clipPath id="t2s"><rect x="121" y="0" width="20" height="26"/></clipPath><g clip-path="url(#t2s)" stroke="#1a6aa3" stroke-width="1.3"><line x1="112.0" y1="26" x2="122.4" y2="0"/><line x1="116.5" y1="26" x2="126.9" y2="0"/><line x1="121.0" y1="26" x2="131.4" y2="0"/><line x1="125.5" y1="26" x2="135.9" y2="0"/><line x1="130.0" y1="26" x2="140.4" y2="0"/><line x1="134.5" y1="26" x2="144.9" y2="0"/><line x1="139.0" y1="26" x2="149.4" y2="0"/><line x1="143.5" y1="26" x2="153.9" y2="0"/><line x1="148.0" y1="26" x2="158.4" y2="0"/><line x1="152.5" y1="26" x2="162.9" y2="0"/></g><text x="70.4" y="15" font-family="Liberation Serif" font-size="6" font-weight="400" stroke="#3a3a48" stroke-width="0.15" fill="#3a3a48" text-anchor="middle" textLength="62" lengthAdjust="spacingAndGlyphs">Contents of This Template</text><circle cx="2.0" cy="43.0" r="0.55" fill="#f0c58a"/><circle cx="2.0" cy="47.6" r="0.55" fill="#f0c58a"/><circle cx="2.0" cy="52.2" r="0.55" fill="#f0c58a"/><circle cx="2.0" cy="56.8" r="0.55" fill="#f0c58a"/><circle cx="2.0" cy="61.4" r="0.55" fill="#f0c58a"/><circle cx="2.0" cy="66.0" r="0.55" fill="#f0c58a"/><circle cx="2.0" cy="70.6" r="0.55" fill="#f0c58a"/><circle cx="2.0" cy="75.2" r="0.55" fill="#f0c58a"/><circle cx="6.6" cy="43.0" r="0.55" fill="#f0c58a"/><circle cx="6.6" cy="47.6" r="0.55" fill="#f0c58a"/><circle cx="6.6" cy="52.2" r="0.55" fill="#f0c58a"/><circle cx="6.6" cy="56.8" r="0.55" fill="#f0c58a"/><circle cx="6.6" cy="61.4" r="0.55" fill="#f0c58a"/><circle cx="6.6" cy="66.0" r="0.55" fill="#f0c58a"/><circle cx="6.6" cy="70.6" r="0.55" fill="#f0c58a"/><circle cx="6.6" cy="75.2" r="0.55" fill="#f0c58a"/><circle cx="11.2" cy="43.0" r="0.55" fill="#f0c58a"/><circle cx="11.2" cy="47.6" r="0.55" fill="#f0c58a"/><circle cx="11.2" cy="52.2" r="0.55" fill="#f0c58a"/><circle cx="11.2" cy="56.8" r="0.55" fill="#f0c58a"/><circle cx="11.2" cy="61.4" r="0.55" fill="#f0c58a"/><circle cx="11.2" cy="66.0" r="0.55" fill="#f0c58a"/><circle cx="11.2" cy="70.6" r="0.55" fill="#f0c58a"/><circle cx="11.2" cy="75.2" r="0.55" fill="#f0c58a"/><polygon points="62.8,80 74,70.6 95,75.3 97.5,80" fill="#db9624"/><polygon points="104,80 126,62.4 141,69 141,80" fill="#f6e3e3"/><rect x="13.0" y="24.2" width="3.3" height="0.9" fill="#4a4a52" opacity="0.5"/><rect x="17.0" y="24.2" width="4.6" height="0.9" fill="#4a4a52" opacity="0.5"/><rect x="22.2" y="24.2" width="4.1" height="0.9" fill="#4a4a52" opacity="0.5"/><rect x="27.2" y="24.2" width="2.2" height="0.9" fill="#4a4a52" opacity="0.5"/><rect x="30.3" y="24.2" width="2.1" height="0.9" fill="#4a4a52" opacity="0.5"/><rect x="33.3" y="24.2" width="2.3" height="0.9" fill="#4a4a52" opacity="0.5"/><rect x="36.3" y="24.2" width="3.7" height="0.9" fill="#4a4a52" opacity="0.5"/><rect x="41.1" y="24.2" width="2.5" height="0.9" fill="#4a4a52" opacity="0.5"/><rect x="44.3" y="24.2" width="4.5" height="0.9" fill="#4a4a52" opacity="0.5"/><rect x="50.0" y="24.2" width="2.0" height="0.9" fill="#4a4a52" opacity="0.5"/><rect x="39.0" y="24.2" width="6.0" height="1.2" fill="#e39b2a"/><rect x="20.0" y="28.7" width="5.9" height="0.9" fill="#4a4a52" opacity="0.5"/><rect x="26.5" y="28.7" width="5.4" height="0.9" fill="#4a4a52" opacity="0.5"/><rect x="32.7" y="28.7" width="2.6" height="0.9" fill="#4a4a52" opacity="0.5"/><rect x="36.0" y="28.7" width="3.2" height="0.9" fill="#4a4a52" opacity="0.5"/><rect x="40.3" y="28.7" width="2.7" height="0.9" fill="#4a4a52" opacity="0.5"/><rect x="44.0" y="28.7" width="4.6" height="0.9" fill="#4a4a52" opacity="0.5"/><rect x="49.4" y="28.7" width="4.2" height="0.9" fill="#4a4a52" opacity="0.5"/><rect x="54.2" y="28.7" width="2.2" height="0.9" fill="#4a4a52" opacity="0.5"/><rect x="57.2" y="28.7" width="4.7" height="0.9" fill="#4a4a52" opacity="0.5"/><rect x="62.7" y="28.7" width="3.3" height="0.9" fill="#4a4a52" opacity="0.5"/><rect x="66.9" y="28.7" width="3.8" height="0.9" fill="#4a4a52" opacity="0.5"/><rect x="71.5" y="28.7" width="5.2" height="0.9" fill="#4a4a52" opacity="0.5"/><rect x="77.7" y="28.7" width="3.0" height="0.9" fill="#4a4a52" opacity="0.5"/><rect x="81.7" y="28.7" width="4.1" height="0.9" fill="#4a4a52" opacity="0.5"/><rect x="86.9" y="28.7" width="4.9" height="0.9" fill="#4a4a52" opacity="0.5"/><rect x="92.6" y="28.7" width="5.9" height="0.9" fill="#4a4a52" opacity="0.5"/><rect x="99.2" y="28.7" width="3.7" height="0.9" fill="#4a4a52" opacity="0.5"/><rect x="103.9" y="28.7" width="2.6" height="0.9" fill="#4a4a52" opacity="0.5"/><rect x="107.4" y="28.7" width="2.2" height="0.9" fill="#4a4a52" opacity="0.5"/><rect x="110.5" y="28.7" width="5.1" height="0.9" fill="#4a4a52" opacity="0.5"/><rect x="116.5" y="28.7" width="5.5" height="0.9" fill="#4a4a52" opacity="0.5"/><rect x="122.8" y="28.7" width="4.8" height="0.9" fill="#4a4a52" opacity="0.5"/><rect x="128.6" y="28.7" width="1.4" height="0.9" fill="#4a4a52" opacity="0.5"/><rect x="20.0" y="31.5" width="5.4" height="0.9" fill="#4a4a52" opacity="0.5"/><rect x="26.5" y="31.5" width="3.9" height="0.9" fill="#4a4a52" opacity="0.5"/><rect x="31.4" y="31.5" width="2.2" height="0.9" fill="#4a4a52" opacity="0.5"/><rect x="34.7" y="31.5" width="1.3" height="0.9" fill="#4a4a52" opacity="0.5"/><rect x="20.0" y="34.2" width="5.3" height="0.9" fill="#4a4a52" opacity="0.5"/><rect x="26.1" y="34.2" width="3.5" height="0.9" fill="#4a4a52" opacity="0.5"/><rect x="30.6" y="34.2" width="2.1" height="0.9" fill="#4a4a52" opacity="0.5"/><rect x="33.6" y="34.2" width="2.7" height="0.9" fill="#4a4a52" opacity="0.5"/><rect x="36.9" y="34.2" width="2.2" height="0.9" fill="#4a4a52" opacity="0.5"/><rect x="40.2" y="34.2" width="2.5" height="0.9" fill="#4a4a52" opacity="0.5"/><rect x="43.5" y="34.2" width="3.6" height="0.9" fill="#4a4a52" opacity="0.5"/><rect x="48.2" y="34.2" width="2.3" height="0.9" fill="#4a4a52" opacity="0.5"/><rect x="51.4" y="34.2" width="4.2" height="0.9" fill="#4a4a52" opacity="0.5"/><rect x="56.7" y="34.2" width="5.3" height="0.9" fill="#4a4a52" opacity="0.5"/><rect x="63.1" y="34.2" width="3.1" height="0.9" fill="#4a4a52" opacity="0.5"/><rect x="67.0" y="34.2" width="3.4" height="0.9" fill="#4a4a52" opacity="0.5"/><rect x="71.6" y="34.2" width="5.8" height="0.9" fill="#4a4a52" opacity="0.5"/><rect x="78.1" y="34.2" width="2.7" height="0.9" fill="#4a4a52" opacity="0.5"/><rect x="81.6" y="34.2" width="2.9" height="0.9" fill="#4a4a52" opacity="0.5"/><rect x="85.4" y="34.2" width="4.4" height="0.9" fill="#4a4a52" opacity="0.5"/><rect x="90.5" y="34.2" width="2.0" height="0.9" fill="#4a4a52" opacity="0.5"/><rect x="93.4" y="34.2" width="3.5" height="0.9" fill="#4a4a52" opacity="0.5"/><rect x="97.8" y="34.2" width="5.8" height="0.9" fill="#4a4a52" opacity="0.5"/><rect x="104.6" y="34.2" width="4.1" height="0.9" fill="#4a4a52" opacity="0.5"/><rect x="109.7" y="34.2" width="4.7" height="0.9" fill="#4a4a52" opacity="0.5"/><rect x="115.0" y="34.2" width="1.0" height="0.9" fill="#4a4a52" opacity="0.5"/><rect x="20.0" y="37.2" width="5.5" height="0.9" fill="#4a4a52" opacity="0.5"/><rect x="26.6" y="37.2" width="3.6" height="0.9" fill="#4a4a52" opacity="0.5"/><rect x="31.0" y="37.2" width="2.4" height="0.9" fill="#4a4a52" opacity="0.5"/><rect x="34.4" y="37.2" width="2.2" height="0.9" fill="#4a4a52" opacity="0.5"/><rect x="37.3" y="37.2" width="2.8" height="0.9" fill="#4a4a52" opacity="0.5"/><rect x="40.8" y="37.2" width="3.4" height="0.9" fill="#4a4a52" opacity="0.5"/><rect x="44.8" y="37.2" width="2.0" height="0.9" fill="#4a4a52" opacity="0.5"/><rect x="47.5" y="37.2" width="2.4" height="0.9" fill="#4a4a52" opacity="0.5"/><rect x="50.7" y="37.2" width="2.1" height="0.9" fill="#4a4a52" opacity="0.5"/><rect x="53.9" y="37.2" width="4.5" height="0.9" fill="#4a4a52" opacity="0.5"/><rect x="59.1" y="37.2" width="3.0" height="0.9" fill="#4a4a52" opacity="0.5"/><rect x="62.9" y="37.2" width="3.5" height="0.9" fill="#4a4a52" opacity="0.5"/><rect x="67.0" y="37.2" width="3.0" height="0.9" fill="#4a4a52" opacity="0.5"/><rect x="20.0" y="39.2" width="3.9" height="0.9" fill="#4a4a52" opacity="0.5"/><rect x="24.8" y="39.2" width="2.3" height="0.9" fill="#4a4a52" opacity="0.5"/><rect x="27.8" y="39.2" width="3.4" height="0.9" fill="#4a4a52" opacity="0.5"/><rect x="31.9" y="39.2" width="5.3" height="0.9" fill="#4a4a52" opacity="0.5"/><rect x="37.9" y="39.2" width="2.1" height="0.9" fill="#4a4a52" opacity="0.5"/><rect x="41.2" y="39.2" width="4.1" height="0.9" fill="#4a4a52" opacity="0.5"/><rect x="46.0" y="39.2" width="4.2" height="0.9" fill="#4a4a52" opacity="0.5"/><rect x="50.8" y="39.2" width="4.1" height="0.9" fill="#4a4a52" opacity="0.5"/><rect x="56.1" y="39.2" width="5.5" height="0.9" fill="#4a4a52" opacity="0.5"/><rect x="62.5" y="39.2" width="3.0" height="0.9" fill="#4a4a52" opacity="0.5"/><rect x="66.4" y="39.2" width="2.7" height="0.9" fill="#4a4a52" opacity="0.5"/><rect x="20.0" y="41.9" width="4.1" height="0.9" fill="#4a4a52" opacity="0.5"/><rect x="25.2" y="41.9" width="3.3" height="0.9" fill="#4a4a52" opacity="0.5"/><rect x="29.3" y="41.9" width="5.2" height="0.9" fill="#4a4a52" opacity="0.5"/><rect x="35.7" y="41.9" width="1.3" height="0.9" fill="#4a4a52" opacity="0.5"/><rect x="20.0" y="44.8" width="5.3" height="0.9" fill="#4a4a52" opacity="0.5"/><rect x="26.3" y="44.8" width="2.9" height="0.9" fill="#4a4a52" opacity="0.5"/><rect x="30.1" y="44.8" width="3.4" height="0.9" fill="#4a4a52" opacity="0.5"/><rect x="27.0" y="47.1" width="2.1" height="0.9" fill="#4a4a52" opacity="0.5"/><rect x="29.9" y="47.1" width="3.0" height="0.9" fill="#4a4a52" opacity="0.5"/><rect x="33.9" y="47.1" width="5.8" height="0.9" fill="#4a4a52" opacity="0.5"/><rect x="40.6" y="47.1" width="5.7" height="0.9" fill="#4a4a52" opacity="0.5"/><rect x="47.6" y="47.1" width="5.8" height="0.9" fill="#4a4a52" opacity="0.5"/><rect x="54.2" y="47.1" width="2.9" height="0.9" fill="#4a4a52" opacity="0.5"/><rect x="57.8" y="47.1" width="2.8" height="0.9" fill="#4a4a52" opacity="0.5"/><rect x="61.3" y="47.1" width="4.5" height="0.9" fill="#4a4a52" opacity="0.5"/><rect x="67.0" y="47.1" width="4.0" height="0.9" fill="#4a4a52" opacity="0.5"/><rect x="27.0" y="49.9" width="4.6" height="0.9" fill="#4a4a52" opacity="0.5"/><rect x="32.7" y="49.9" width="2.3" height="0.9" fill="#4a4a52" opacity="0.5"/><rect x="36.0" y="49.9" width="5.6" height="0.9" fill="#4a4a52" opacity="0.5"/><rect x="42.7" y="49.9" width="5.0" height="0.9" fill="#4a4a52" opacity="0.5"/><rect x="48.6" y="49.9" width="2.7" height="0.9" fill="#4a4a52" opacity="0.5"/><rect x="52.4" y="49.9" width="3.3" height="0.9" fill="#4a4a52" opacity="0.5"/><rect x="56.8" y="49.9" width="5.9" height="0.9" fill="#4a4a52" opacity="0.5"/><rect x="63.5" y="49.9" width="3.5" height="0.9" fill="#4a4a52" opacity="0.5"/><rect x="27.0" y="51.9" width="4.9" height="0.9" fill="#4a4a52" opacity="0.5"/><rect x="32.6" y="51.9" width="2.5" height="0.9" fill="#4a4a52" opacity="0.5"/><rect x="35.8" y="51.9" width="5.6" height="0.9" fill="#4a4a52" opacity="0.5"/><rect x="42.5" y="51.9" width="2.6" height="0.9" fill="#4a4a52" opacity="0.5"/><rect x="46.2" y="51.9" width="5.9" height="0.9" fill="#4a4a52" opacity="0.5"/><rect x="53.1" y="51.9" width="3.4" height="0.9" fill="#4a4a52" opacity="0.5"/><rect x="57.4" y="51.9" width="2.5" height="0.9" fill="#4a4a52" opacity="0.5"/><rect x="60.6" y="51.9" width="5.9" height="0.9" fill="#4a4a52" opacity="0.5"/><rect x="67.4" y="51.9" width="4.1" height="0.9" fill="#4a4a52" opacity="0.5"/><rect x="72.7" y="51.9" width="3.7" height="0.9" fill="#4a4a52" opacity="0.5"/><rect x="77.6" y="51.9" width="5.3" height="0.9" fill="#4a4a52" opacity="0.5"/><rect x="83.6" y="51.9" width="3.0" height="0.9" fill="#4a4a52" opacity="0.5"/><rect x="87.4" y="51.9" width="3.0" height="0.9" fill="#4a4a52" opacity="0.5"/><rect x="91.3" y="51.9" width="3.0" height="0.9" fill="#4a4a52" opacity="0.5"/><rect x="95.2" y="51.9" width="2.5" height="0.9" fill="#4a4a52" opacity="0.5"/><rect x="98.8" y="51.9" width="3.4" height="0.9" fill="#4a4a52" opacity="0.5"/><rect x="103.1" y="51.9" width="4.3" height="0.9" fill="#4a4a52" opacity="0.5"/><rect x="108.6" y="51.9" width="3.7" height="0.9" fill="#4a4a52" opacity="0.5"/><rect x="113.4" y="51.9" width="4.0" height="0.9" fill="#4a4a52" opacity="0.5"/><rect x="118.4" y="51.9" width="4.1" height="0.9" fill="#4a4a52" opacity="0.5"/><rect x="123.1" y="51.9" width="3.8" height="0.9" fill="#4a4a52" opacity="0.5"/><rect x="127.5" y="51.9" width="2.0" height="0.9" fill="#4a4a52" opacity="0.5"/><rect x="27.0" y="54.3" width="2.7" height="0.9" fill="#4a4a52" opacity="0.5"/><rect x="30.6" y="54.3" width="4.9" height="0.9" fill="#4a4a52" opacity="0.5"/><rect x="36.4" y="54.3" width="3.3" height="0.9" fill="#4a4a52" opacity="0.5"/><rect x="40.6" y="54.3" width="4.2" height="0.9" fill="#4a4a52" opacity="0.5"/><rect x="45.9" y="54.3" width="2.4" height="0.9" fill="#4a4a52" opacity="0.5"/><rect x="49.3" y="54.3" width="3.0" height="0.9" fill="#4a4a52" opacity="0.5"/><rect x="53.0" y="54.3" width="5.1" height="0.9" fill="#4a4a52" opacity="0.5"/><rect x="59.0" y="54.3" width="4.2" height="0.9" fill="#4a4a52" opacity="0.5"/><rect x="64.3" y="54.3" width="5.6" height="0.9" fill="#4a4a52" opacity="0.5"/><rect x="70.8" y="54.3" width="4.5" height="0.9" fill="#4a4a52" opacity="0.5"/><rect x="76.2" y="54.3" width="4.0" height="0.9" fill="#4a4a52" opacity="0.5"/><rect x="81.3" y="54.3" width="3.8" height="0.9" fill="#4a4a52" opacity="0.5"/><rect x="86.0" y="54.3" width="1.0" height="0.9" fill="#4a4a52" opacity="0.5"/><rect x="13.0" y="59.3" width="4.8" height="0.9" fill="#4a4a52" opacity="0.5"/><rect x="18.9" y="59.3" width="5.8" height="0.9" fill="#4a4a52" opacity="0.5"/><rect x="25.4" y="59.3" width="4.2" height="0.9" fill="#4a4a52" opacity="0.5"/><rect x="30.9" y="59.3" width="5.4" height="0.9" fill="#4a4a52" opacity="0.5"/><rect x="36.9" y="59.3" width="2.5" height="0.9" fill="#4a4a52" opacity="0.5"/><rect x="40.2" y="59.3" width="2.3" height="0.9" fill="#4a4a52" opacity="0.5"/><rect x="43.3" y="59.3" width="2.3" height="0.9" fill="#4a4a52" opacity="0.5"/><rect x="46.6" y="59.3" width="5.1" height="0.9" fill="#4a4a52" opacity="0.5"/><rect x="52.8" y="59.3" width="2.6" height="0.9" fill="#4a4a52" opacity="0.5"/><rect x="56.5" y="59.3" width="4.6" height="0.9" fill="#4a4a52" opacity="0.5"/><rect x="61.8" y="59.3" width="5.5" height="0.9" fill="#4a4a52" opacity="0.5"/><rect x="68.5" y="59.3" width="1.5" height="0.9" fill="#4a4a52" opacity="0.5"/><rect x="20.0" y="31.5" width="13.0" height="0.9" fill="#eba14a"/><rect x="39.0" y="31.5" width="6.0" height="0.9" fill="#eba14a"/><rect x="90.0" y="34.3" width="22.0" height="0.9" fill="#eba14a"/><rect x="21.0" y="37.3" width="9.0" height="0.9" fill="#eba14a"/><rect x="20.0" y="39.3" width="10.0" height="0.9" fill="#eba14a"/><rect x="20.0" y="42.0" width="16.0" height="0.9" fill="#eba14a"/><rect x="34.0" y="47.2" width="14.0" height="0.9" fill="#eba14a"/><rect x="33.0" y="50.0" width="20.0" height="0.9" fill="#eba14a"/><rect x="37.0" y="52.0" width="14.0" height="0.9" fill="#eba14a"/></svg><div class="r" style="left:30px;top:373px;width:141px;height:80px;border:1px solid #c8c6c4;"></div><svg class="r" style="left:31px;top:374px;overflow:hidden" width="141" height="80" viewBox="0 0 141 80"><rect width="141" height="80" fill="#f9f5f2"/><circle cx="18" cy="8" r="18" fill="#f6e3e3"/><circle cx="20.0" cy="4.0" r="0.6" fill="#f3d0cc"/><circle cx="20.0" cy="8.5" r="0.6" fill="#f3d0cc"/><circle cx="20.0" cy="13.0" r="0.6" fill="#f3d0cc"/><circle cx="20.0" cy="17.5" r="0.6" fill="#f3d0cc"/><circle cx="20.0" cy="22.0" r="0.6" fill="#f3d0cc"/><circle cx="20.0" cy="26.5" r="0.6" fill="#f3d0cc"/><circle cx="24.8" cy="4.0" r="0.6" fill="#f3d0cc"/><circle cx="24.8" cy="8.5" r="0.6" fill="#f3d0cc"/><circle cx="24.8" cy="13.0" r="0.6" fill="#f3d0cc"/><circle cx="24.8" cy="17.5" r="0.6" fill="#f3d0cc"/><circle cx="24.8" cy="22.0" r="0.6" fill="#f3d0cc"/><circle cx="24.8" cy="26.5" r="0.6" fill="#f3d0cc"/><circle cx="29.6" cy="4.0" r="0.6" fill="#f3d0cc"/><circle cx="29.6" cy="8.5" r="0.6" fill="#f3d0cc"/><circle cx="29.6" cy="13.0" r="0.6" fill="#f3d0cc"/><circle cx="29.6" cy="17.5" r="0.6" fill="#f3d0cc"/><circle cx="29.6" cy="22.0" r="0.6" fill="#f3d0cc"/><circle cx="29.6" cy="26.5" r="0.6" fill="#f3d0cc"/><circle cx="34.4" cy="4.0" r="0.6" fill="#f3d0cc"/><circle cx="34.4" cy="8.5" r="0.6" fill="#f3d0cc"/><circle cx="34.4" cy="13.0" r="0.6" fill="#f3d0cc"/><circle cx="34.4" cy="17.5" r="0.6" fill="#f3d0cc"/><circle cx="34.4" cy="22.0" r="0.6" fill="#f3d0cc"/><circle cx="34.4" cy="26.5" r="0.6" fill="#f3d0cc"/><circle cx="39.2" cy="4.0" r="0.6" fill="#f3d0cc"/><circle cx="39.2" cy="8.5" r="0.6" fill="#f3d0cc"/><circle cx="39.2" cy="13.0" r="0.6" fill="#f3d0cc"/><circle cx="39.2" cy="17.5" r="0.6" fill="#f3d0cc"/><circle cx="39.2" cy="22.0" r="0.6" fill="#f3d0cc"/><circle cx="39.2" cy="26.5" r="0.6" fill="#f3d0cc"/><circle cx="44.0" cy="4.0" r="0.6" fill="#f3d0cc"/><circle cx="44.0" cy="8.5" r="0.6" fill="#f3d0cc"/><circle cx="44.0" cy="13.0" r="0.6" fill="#f3d0cc"/><circle cx="44.0" cy="17.5" r="0.6" fill="#f3d0cc"/><circle cx="44.0" cy="22.0" r="0.6" fill="#f3d0cc"/><circle cx="44.0" cy="26.5" r="0.6" fill="#f3d0cc"/><circle cx="48.8" cy="4.0" r="0.6" fill="#f3d0cc"/><circle cx="48.8" cy="8.5" r="0.6" fill="#f3d0cc"/><circle cx="48.8" cy="13.0" r="0.6" fill="#f3d0cc"/><circle cx="48.8" cy="17.5" r="0.6" fill="#f3d0cc"/><circle cx="48.8" cy="22.0" r="0.6" fill="#f3d0cc"/><circle cx="48.8" cy="26.5" r="0.6" fill="#f3d0cc"/><circle cx="53.6" cy="4.0" r="0.6" fill="#f3d0cc"/><circle cx="53.6" cy="8.5" r="0.6" fill="#f3d0cc"/><circle cx="53.6" cy="13.0" r="0.6" fill="#f3d0cc"/><circle cx="53.6" cy="17.5" r="0.6" fill="#f3d0cc"/><circle cx="53.6" cy="22.0" r="0.6" fill="#f3d0cc"/><circle cx="53.6" cy="26.5" r="0.6" fill="#f3d0cc"/><polygon points="0,13 8,13 11,27 8,40 0,40" fill="#1a6aa3"/><clipPath id="t3s"><rect x="0" y="61" width="20" height="19"/></clipPath><g clip-path="url(#t3s)" stroke="#f0b73a" stroke-width="1.2"><line x1="-9.0" y1="80" x2="0.5" y2="61"/><line x1="-4.5" y1="80" x2="5.0" y2="61"/><line x1="0.0" y1="80" x2="9.5" y2="61"/><line x1="4.5" y1="80" x2="14.0" y2="61"/><line x1="9.0" y1="80" x2="18.5" y2="61"/><line x1="13.5" y1="80" x2="23.0" y2="61"/><line x1="18.0" y1="80" x2="27.5" y2="61"/><line x1="22.5" y1="80" x2="32.0" y2="61"/><line x1="27.0" y1="80" x2="36.5" y2="61"/></g><text x="73" y="15" font-family="Liberation Serif" font-size="5.6" font-weight="400" stroke="#3a3a48" stroke-width="0.15" fill="#3a3a48" text-anchor="middle" textLength="42" lengthAdjust="spacingAndGlyphs">Table of Contents</text><text x="69" y="27.5" font-family="Liberation Sans" font-size="9" fill="#ef7b72" textLength="10" lengthAdjust="spacingAndGlyphs">01</text><rect x="81.0" y="22.2" width="3.6" height="0.8" fill="#4a4a52" opacity="0.5"/><rect x="85.5" y="22.2" width="6.0" height="0.8" fill="#4a4a52" opacity="0.5"/><rect x="92.5" y="22.2" width="2.5" height="0.8" fill="#4a4a52" opacity="0.5"/><rect x="81.0" y="26.7" width="4.1" height="1" fill="#4a4a52" opacity="0.62"/><rect x="85.9" y="26.7" width="2.8" height="1" fill="#4a4a52" opacity="0.62"/><rect x="89.4" y="26.7" width="4.9" height="1" fill="#4a4a52" opacity="0.62"/><rect x="94.9" y="26.7" width="4.2" height="1" fill="#4a4a52" opacity="0.62"/><rect x="100.0" y="26.7" width="2.1" height="1" fill="#4a4a52" opacity="0.62"/><rect x="102.9" y="26.7" width="4.5" height="1" fill="#4a4a52" opacity="0.62"/><rect x="108.3" y="26.7" width="2.3" height="1" fill="#4a4a52" opacity="0.62"/><rect x="111.7" y="26.7" width="5.2" height="1" fill="#4a4a52" opacity="0.62"/><rect x="118.1" y="26.7" width="2.4" height="1" fill="#4a4a52" opacity="0.62"/><rect x="121.3" y="26.7" width="2.2" height="1" fill="#4a4a52" opacity="0.62"/><rect x="124.5" y="26.7" width="3.1" height="1" fill="#4a4a52" opacity="0.62"/><text x="69" y="41.3" font-family="Liberation Sans" font-size="9" fill="#ef7b72" textLength="10" lengthAdjust="spacingAndGlyphs">02</text><rect x="81.0" y="36.0" width="3.7" height="0.8" fill="#4a4a52" opacity="0.5"/><rect x="85.8" y="36.0" width="5.3" height="0.8" fill="#4a4a52" opacity="0.5"/><rect x="91.9" y="36.0" width="2.6" height="0.8" fill="#4a4a52" opacity="0.5"/><rect x="81.0" y="40.5" width="4.3" height="1" fill="#4a4a52" opacity="0.62"/><rect x="86.3" y="40.5" width="2.4" height="1" fill="#4a4a52" opacity="0.62"/><rect x="89.3" y="40.5" width="4.8" height="1" fill="#4a4a52" opacity="0.62"/><rect x="94.9" y="40.5" width="2.3" height="1" fill="#4a4a52" opacity="0.62"/><rect x="98.4" y="40.5" width="4.5" height="1" fill="#4a4a52" opacity="0.62"/><rect x="104.0" y="40.5" width="2.3" height="1" fill="#4a4a52" opacity="0.62"/><rect x="107.4" y="40.5" width="2.3" height="1" fill="#4a4a52" opacity="0.62"/><rect x="110.8" y="40.5" width="3.8" height="1" fill="#4a4a52" opacity="0.62"/><rect x="115.4" y="40.5" width="4.2" height="1" fill="#4a4a52" opacity="0.62"/><rect x="120.8" y="40.5" width="3.1" height="1" fill="#4a4a52" opacity="0.62"/><rect x="124.5" y="40.5" width="3.5" height="1" fill="#4a4a52" opacity="0.62"/><text x="69" y="55.1" font-family="Liberation Sans" font-size="9" fill="#ef7b72" textLength="10" lengthAdjust="spacingAndGlyphs">03</text><rect x="81.0" y="49.8" width="2.4" height="0.8" fill="#4a4a52" opacity="0.5"/><rect x="84.1" y="49.8" width="2.2" height="0.8" fill="#4a4a52" opacity="0.5"/><rect x="87.1" y="49.8" width="3.2" height="0.8" fill="#4a4a52" opacity="0.5"/><rect x="91.1" y="49.8" width="3.9" height="0.8" fill="#4a4a52" opacity="0.5"/><rect x="81.0" y="54.3" width="4.0" height="1" fill="#4a4a52" opacity="0.62"/><rect x="85.7" y="54.3" width="3.4" height="1" fill="#4a4a52" opacity="0.62"/><rect x="89.7" y="54.3" width="3.0" height="1" fill="#4a4a52" opacity="0.62"/><rect x="93.3" y="54.3" width="4.9" height="1" fill="#4a4a52" opacity="0.62"/><rect x="99.2" y="54.3" width="2.8" height="1" fill="#4a4a52" opacity="0.62"/><rect x="102.8" y="54.3" width="5.7" height="1" fill="#4a4a52" opacity="0.62"/><rect x="109.2" y="54.3" width="5.3" height="1" fill="#4a4a52" opacity="0.62"/><rect x="115.4" y="54.3" width="4.0" height="1" fill="#4a4a52" opacity="0.62"/><rect x="120.4" y="54.3" width="3.6" height="1" fill="#4a4a52" opacity="0.62"/><rect x="124.9" y="54.3" width="3.1" height="1" fill="#4a4a52" opacity="0.62"/><text x="69" y="68.9" font-family="Liberation Sans" font-size="9" fill="#ef7b72" textLength="10" lengthAdjust="spacingAndGlyphs">04</text><rect x="81.0" y="63.6" width="3.4" height="0.8" fill="#4a4a52" opacity="0.5"/><rect x="85.5" y="63.6" width="4.8" height="0.8" fill="#4a4a52" opacity="0.5"/><rect x="91.3" y="63.6" width="3.6" height="0.8" fill="#4a4a52" opacity="0.5"/><rect x="81.0" y="68.1" width="2.2" height="1" fill="#4a4a52" opacity="0.62"/><rect x="83.9" y="68.1" width="2.3" height="1" fill="#4a4a52" opacity="0.62"/><rect x="87.2" y="68.1" width="3.0" height="1" fill="#4a4a52" opacity="0.62"/><rect x="90.9" y="68.1" width="2.3" height="1" fill="#4a4a52" opacity="0.62"/><rect x="94.4" y="68.1" width="5.5" height="1" fill="#4a4a52" opacity="0.62"/><rect x="100.9" y="68.1" width="3.1" height="1" fill="#4a4a52" opacity="0.62"/><rect x="104.7" y="68.1" width="3.2" height="1" fill="#4a4a52" opacity="0.62"/><rect x="108.8" y="68.1" width="2.6" height="1" fill="#4a4a52" opacity="0.62"/><rect x="112.3" y="68.1" width="3.1" height="1" fill="#4a4a52" opacity="0.62"/><rect x="116.5" y="68.1" width="5.9" height="1" fill="#4a4a52" opacity="0.62"/><rect x="123.3" y="68.1" width="3.0" height="1" fill="#4a4a52" opacity="0.62"/><ellipse cx="43" cy="75.5" rx="25" ry="1.8" fill="#e6e4e2"/><circle cx="28" cy="33" r="3.4" fill="#f56b4a"/><path d="M24.5 39 Q28 37 31.5 39 L32 56 H24Z" fill="#f3a39b"/><rect x="24.8" y="55" width="2.6" height="19" fill="#232a48"/><rect x="28.6" y="55" width="2.6" height="19" fill="#232a48"/><path d="M24.5 40 L20 36 L18.5 29" fill="none" stroke="#f3a39b" stroke-width="2"/><rect x="23" y="73" width="4" height="2" fill="#db9624"/><rect x="29" y="73" width="4" height="2" fill="#db9624"/><circle cx="39" cy="33" r="3.4" fill="#613830"/><path d="M34.5 39 Q39 37 43.5 39 L43.5 56 H34.5Z" fill="#db9624"/><rect x="35.3" y="55" width="2.8" height="19" fill="#232a48"/><rect x="39.6" y="55" width="2.8" height="19" fill="#232a48"/><rect x="34" y="73" width="4" height="2" fill="#db9624"/><rect x="40" y="73" width="4" height="2" fill="#db9624"/><circle cx="50" cy="33" r="3.3" fill="#fdb99a"/><circle cx="51" cy="28.5" r="2" fill="#232a48"/><path d="M45.5 39 Q50 37 54.5 39 L56 74 H44Z" fill="#1a6aa3"/><path d="M46 40 L54 52" stroke="#232a48" stroke-width="1.5"/><circle cx="61" cy="33" r="3.6" fill="#a45b3f"/><path d="M57 31 Q61 26 65 31 Q61 29 57 31Z" fill="#2b2b3a"/><path d="M57 39 Q61 37 65 39 L65 50 H57Z" fill="#232a48"/><path d="M57 50 H65 L66.5 60 H55.5Z" fill="#db9624"/><rect x="58" y="60" width="2" height="14" fill="#a45b3f"/><rect x="62" y="60" width="2" height="14" fill="#a45b3f"/><path d="M65 41 L69 36 L70.5 31" fill="none" stroke="#232a48" stroke-width="1.8"/><rect x="3.5" y="23.2" width="1.6" height="1.2" fill="#232a48" opacity="0.7"/><rect x="1.0" y="23.8" width="1.6" height="1.2" fill="#232a48" opacity="0.7"/><rect x="4.8" y="26.6" width="1.6" height="1.2" fill="#232a48" opacity="0.7"/><rect x="2.6" y="26.6" width="1.6" height="1.2" fill="#232a48" opacity="0.7"/><rect x="1.0" y="21.1" width="1.6" height="1.2" fill="#232a48" opacity="0.7"/><rect x="1.7" y="24.2" width="1.6" height="1.2" fill="#232a48" opacity="0.7"/><rect x="1.3" y="15.5" width="1.6" height="1.2" fill="#232a48" opacity="0.7"/><rect x="3.4" y="20.4" width="1.6" height="1.2" fill="#232a48" opacity="0.7"/><rect x="5.7" y="27.2" width="1.6" height="1.2" fill="#232a48" opacity="0.7"/><rect x="7.0" y="30.1" width="1.6" height="1.2" fill="#232a48" opacity="0.7"/><rect x="6.7" y="35.2" width="1.6" height="1.2" fill="#232a48" opacity="0.7"/><rect x="4.1" y="22.5" width="1.6" height="1.2" fill="#232a48" opacity="0.7"/><rect x="8.9" y="18.4" width="1.6" height="1.2" fill="#232a48" opacity="0.7"/><rect x="6.8" y="29.8" width="1.6" height="1.2" fill="#232a48" opacity="0.7"/></svg><div class="r" style="left:30px;top:473px;width:141px;height:80px;border:1px solid #c8c6c4;"></div><svg class="r" style="left:31px;top:474px;overflow:hidden" width="141" height="80" viewBox="0 0 141 80"><rect width="141" height="80" fill="#f9f5f2"/><circle cx="3.0" cy="3.0" r="0.6" fill="#b9c7d6"/><circle cx="3.0" cy="7.7" r="0.6" fill="#b9c7d6"/><circle cx="3.0" cy="12.4" r="0.6" fill="#b9c7d6"/><circle cx="3.0" cy="17.1" r="0.6" fill="#b9c7d6"/><circle cx="3.0" cy="21.8" r="0.6" fill="#b9c7d6"/><circle cx="3.0" cy="26.5" r="0.6" fill="#b9c7d6"/><circle cx="3.0" cy="31.2" r="0.6" fill="#b9c7d6"/><circle cx="3.0" cy="35.9" r="0.6" fill="#b9c7d6"/><circle cx="7.7" cy="3.0" r="0.6" fill="#b9c7d6"/><circle cx="7.7" cy="7.7" r="0.6" fill="#b9c7d6"/><circle cx="7.7" cy="12.4" r="0.6" fill="#b9c7d6"/><circle cx="7.7" cy="17.1" r="0.6" fill="#b9c7d6"/><circle cx="7.7" cy="21.8" r="0.6" fill="#b9c7d6"/><circle cx="7.7" cy="26.5" r="0.6" fill="#b9c7d6"/><circle cx="7.7" cy="31.2" r="0.6" fill="#b9c7d6"/><circle cx="7.7" cy="35.9" r="0.6" fill="#b9c7d6"/><circle cx="12.4" cy="3.0" r="0.6" fill="#b9c7d6"/><circle cx="12.4" cy="7.7" r="0.6" fill="#b9c7d6"/><circle cx="12.4" cy="12.4" r="0.6" fill="#b9c7d6"/><circle cx="12.4" cy="17.1" r="0.6" fill="#b9c7d6"/><circle cx="12.4" cy="21.8" r="0.6" fill="#b9c7d6"/><circle cx="12.4" cy="26.5" r="0.6" fill="#b9c7d6"/><circle cx="12.4" cy="31.2" r="0.6" fill="#b9c7d6"/><circle cx="12.4" cy="35.9" r="0.6" fill="#b9c7d6"/><circle cx="17.1" cy="3.0" r="0.6" fill="#b9c7d6"/><circle cx="17.1" cy="7.7" r="0.6" fill="#b9c7d6"/><circle cx="17.1" cy="12.4" r="0.6" fill="#b9c7d6"/><circle cx="17.1" cy="17.1" r="0.6" fill="#b9c7d6"/><circle cx="17.1" cy="21.8" r="0.6" fill="#b9c7d6"/><circle cx="17.1" cy="26.5" r="0.6" fill="#b9c7d6"/><circle cx="17.1" cy="31.2" r="0.6" fill="#b9c7d6"/><circle cx="17.1" cy="35.9" r="0.6" fill="#b9c7d6"/><circle cx="21.8" cy="3.0" r="0.6" fill="#b9c7d6"/><circle cx="21.8" cy="7.7" r="0.6" fill="#b9c7d6"/><circle cx="21.8" cy="12.4" r="0.6" fill="#b9c7d6"/><circle cx="21.8" cy="17.1" r="0.6" fill="#b9c7d6"/><circle cx="21.8" cy="21.8" r="0.6" fill="#b9c7d6"/><circle cx="21.8" cy="26.5" r="0.6" fill="#b9c7d6"/><circle cx="21.8" cy="31.2" r="0.6" fill="#b9c7d6"/><circle cx="21.8" cy="35.9" r="0.6" fill="#b9c7d6"/><polygon points="80,0 111,0 105,6" fill="#db9624"/><polygon points="111,0 141,0 141,13 125,17" fill="#e6e4e2"/><text x="74.5" y="15" font-family="Liberation Serif" font-size="5.6" font-weight="400" stroke="#3a3a48" stroke-width="0.15" fill="#3a3a48" text-anchor="middle" textLength="30" lengthAdjust="spacingAndGlyphs">Introduction</text><rect x="66.0" y="24.2" width="2.2" height="1" fill="#4a4a52" opacity="0.62"/><rect x="69.3" y="24.2" width="5.6" height="1" fill="#4a4a52" opacity="0.62"/><rect x="75.8" y="24.2" width="4.9" height="1" fill="#4a4a52" opacity="0.62"/><rect x="81.8" y="24.2" width="2.6" height="1" fill="#4a4a52" opacity="0.62"/><rect x="85.3" y="24.2" width="4.0" height="1" fill="#4a4a52" opacity="0.62"/><rect x="90.4" y="24.2" width="5.2" height="1" fill="#4a4a52" opacity="0.62"/><rect x="96.7" y="24.2" width="4.3" height="1" fill="#4a4a52" opacity="0.62"/><rect x="102.2" y="24.2" width="4.7" height="1" fill="#4a4a52" opacity="0.62"/><rect x="108.0" y="24.2" width="2.9" height="1" fill="#4a4a52" opacity="0.62"/><rect x="111.5" y="24.2" width="2.5" height="1" fill="#4a4a52" opacity="0.62"/><rect x="114.9" y="24.2" width="2.4" height="1" fill="#4a4a52" opacity="0.62"/><rect x="118.4" y="24.2" width="4.2" height="1" fill="#4a4a52" opacity="0.62"/><rect x="123.6" y="24.2" width="4.4" height="1" fill="#4a4a52" opacity="0.62"/><rect x="71.0" y="28.4" width="4.0" height="1" fill="#4a4a52" opacity="0.62"/><rect x="75.6" y="28.4" width="5.2" height="1" fill="#4a4a52" opacity="0.62"/><rect x="81.8" y="28.4" width="4.0" height="1" fill="#4a4a52" opacity="0.62"/><rect x="86.7" y="28.4" width="4.6" height="1" fill="#4a4a52" opacity="0.62"/><rect x="92.0" y="28.4" width="4.9" height="1" fill="#4a4a52" opacity="0.62"/><rect x="97.7" y="28.4" width="2.3" height="1" fill="#4a4a52" opacity="0.62"/><rect x="100.8" y="28.4" width="4.9" height="1" fill="#4a4a52" opacity="0.62"/><rect x="106.4" y="28.4" width="5.0" height="1" fill="#4a4a52" opacity="0.62"/><rect x="112.5" y="28.4" width="4.0" height="1" fill="#4a4a52" opacity="0.62"/><rect x="117.4" y="28.4" width="3.9" height="1" fill="#4a4a52" opacity="0.62"/><rect x="122.3" y="28.4" width="5.1" height="1" fill="#4a4a52" opacity="0.62"/><rect x="62.0" y="32.6" width="4.6" height="1" fill="#4a4a52" opacity="0.62"/><rect x="67.2" y="32.6" width="2.6" height="1" fill="#4a4a52" opacity="0.62"/><rect x="70.6" y="32.6" width="5.0" height="1" fill="#4a4a52" opacity="0.62"/><rect x="76.3" y="32.6" width="4.3" height="1" fill="#4a4a52" opacity="0.62"/><rect x="81.2" y="32.6" width="2.2" height="1" fill="#4a4a52" opacity="0.62"/><rect x="84.2" y="32.6" width="4.7" height="1" fill="#4a4a52" opacity="0.62"/><rect x="89.9" y="32.6" width="4.7" height="1" fill="#4a4a52" opacity="0.62"/><rect x="95.4" y="32.6" width="4.1" height="1" fill="#4a4a52" opacity="0.62"/><rect x="100.3" y="32.6" width="3.9" height="1" fill="#4a4a52" opacity="0.62"/><rect x="104.9" y="32.6" width="5.6" height="1" fill="#4a4a52" opacity="0.62"/><rect x="111.2" y="32.6" width="5.9" height="1" fill="#4a4a52" opacity="0.62"/><rect x="118.2" y="32.6" width="2.1" height="1" fill="#4a4a52" opacity="0.62"/><rect x="121.2" y="32.6" width="4.8" height="1" fill="#4a4a52" opacity="0.62"/><rect x="61.0" y="36.8" width="3.8" height="1" fill="#4a4a52" opacity="0.62"/><rect x="65.6" y="36.8" width="2.8" height="1" fill="#4a4a52" opacity="0.62"/><rect x="69.6" y="36.8" width="2.8" height="1" fill="#4a4a52" opacity="0.62"/><rect x="73.4" y="36.8" width="2.6" height="1" fill="#4a4a52" opacity="0.62"/><rect x="76.8" y="36.8" width="5.8" height="1" fill="#4a4a52" opacity="0.62"/><rect x="83.3" y="36.8" width="5.3" height="1" fill="#4a4a52" opacity="0.62"/><rect x="89.5" y="36.8" width="5.5" height="1" fill="#4a4a52" opacity="0.62"/><rect x="96.1" y="36.8" width="2.9" height="1" fill="#4a4a52" opacity="0.62"/><rect x="100.1" y="36.8" width="3.9" height="1" fill="#4a4a52" opacity="0.62"/><rect x="104.7" y="36.8" width="2.0" height="1" fill="#4a4a52" opacity="0.62"/><rect x="107.6" y="36.8" width="3.8" height="1" fill="#4a4a52" opacity="0.62"/><rect x="112.2" y="36.8" width="2.6" height="1" fill="#4a4a52" opacity="0.62"/><rect x="115.6" y="36.8" width="3.3" height="1" fill="#4a4a52" opacity="0.62"/><rect x="119.9" y="36.8" width="2.0" height="1" fill="#4a4a52" opacity="0.62"/><rect x="123.0" y="36.8" width="5.0" height="1" fill="#4a4a52" opacity="0.62"/><rect x="111.0" y="41.0" width="5.7" height="1" fill="#4a4a52" opacity="0.62"/><rect x="117.7" y="41.0" width="5.6" height="1" fill="#4a4a52" opacity="0.62"/><rect x="124.1" y="41.0" width="3.5" height="1" fill="#4a4a52" opacity="0.62"/><polygon points="55,80 72,64 93,52 112,60 115,80" fill="#f6e3e3"/><polygon points="0,80 0,70 20,66 55,80" fill="#ef7b72"/><circle cx="114.0" cy="48.0" r="0.6" fill="#f0c58a"/><circle cx="114.0" cy="52.6" r="0.6" fill="#f0c58a"/><circle cx="114.0" cy="57.2" r="0.6" fill="#f0c58a"/><circle cx="114.0" cy="61.8" r="0.6" fill="#f0c58a"/><circle cx="114.0" cy="66.4" r="0.6" fill="#f0c58a"/><circle cx="114.0" cy="71.0" r="0.6" fill="#f0c58a"/><circle cx="114.0" cy="75.6" r="0.6" fill="#f0c58a"/><circle cx="114.0" cy="80.2" r="0.6" fill="#f0c58a"/><circle cx="118.8" cy="48.0" r="0.6" fill="#f0c58a"/><circle cx="118.8" cy="52.6" r="0.6" fill="#f0c58a"/><circle cx="118.8" cy="57.2" r="0.6" fill="#f0c58a"/><circle cx="118.8" cy="61.8" r="0.6" fill="#f0c58a"/><circle cx="118.8" cy="66.4" r="0.6" fill="#f0c58a"/><circle cx="118.8" cy="71.0" r="0.6" fill="#f0c58a"/><circle cx="118.8" cy="75.6" r="0.6" fill="#f0c58a"/><circle cx="118.8" cy="80.2" r="0.6" fill="#f0c58a"/><circle cx="123.6" cy="48.0" r="0.6" fill="#f0c58a"/><circle cx="123.6" cy="52.6" r="0.6" fill="#f0c58a"/><circle cx="123.6" cy="57.2" r="0.6" fill="#f0c58a"/><circle cx="123.6" cy="61.8" r="0.6" fill="#f0c58a"/><circle cx="123.6" cy="66.4" r="0.6" fill="#f0c58a"/><circle cx="123.6" cy="71.0" r="0.6" fill="#f0c58a"/><circle cx="123.6" cy="75.6" r="0.6" fill="#f0c58a"/><circle cx="123.6" cy="80.2" r="0.6" fill="#f0c58a"/><circle cx="128.4" cy="48.0" r="0.6" fill="#f0c58a"/><circle cx="128.4" cy="52.6" r="0.6" fill="#f0c58a"/><circle cx="128.4" cy="57.2" r="0.6" fill="#f0c58a"/><circle cx="128.4" cy="61.8" r="0.6" fill="#f0c58a"/><circle cx="128.4" cy="66.4" r="0.6" fill="#f0c58a"/><circle cx="128.4" cy="71.0" r="0.6" fill="#f0c58a"/><circle cx="128.4" cy="75.6" r="0.6" fill="#f0c58a"/><circle cx="128.4" cy="80.2" r="0.6" fill="#f0c58a"/><circle cx="133.2" cy="48.0" r="0.6" fill="#f0c58a"/><circle cx="133.2" cy="52.6" r="0.6" fill="#f0c58a"/><circle cx="133.2" cy="57.2" r="0.6" fill="#f0c58a"/><circle cx="133.2" cy="61.8" r="0.6" fill="#f0c58a"/><circle cx="133.2" cy="66.4" r="0.6" fill="#f0c58a"/><circle cx="133.2" cy="71.0" r="0.6" fill="#f0c58a"/><circle cx="133.2" cy="75.6" r="0.6" fill="#f0c58a"/><circle cx="133.2" cy="80.2" r="0.6" fill="#f0c58a"/><polygon points="0,29 11,27.5 11.5,32.5 0,34.5" fill="#ef7b72"/><rect x="13" y="19" width="4" height="7" fill="#ef7b72" transform="rotate(-12 15 25)"/><rect x="13.5" y="25" width="4" height="11" rx="1" fill="#2b3150" transform="rotate(-12 15 30)"/><rect x="11" y="27" width="6" height="6" rx="2" fill="#fdc9a6"/><polygon points="0,47 21,45 21.5,50.5 0,53" fill="#db9624"/><rect x="22.5" y="33" width="4" height="7" fill="#db9624" transform="rotate(-12 24 40)"/><rect x="23" y="39" width="4" height="12" rx="1" fill="#2b3150" transform="rotate(-12 24 45)"/><rect x="21" y="44" width="6" height="6" rx="2" fill="#fdc9a6"/><polygon points="0,63 31,58 32,64 0,69" fill="#1a6aa3"/><rect x="33" y="49" width="4" height="7" fill="#1a6aa3" transform="rotate(-12 35 56)"/><rect x="33.5" y="55" width="4" height="12" rx="1" fill="#2b3150" transform="rotate(-12 35 61)"/><rect x="30.5" y="57.5" width="6" height="7" rx="2" fill="#e0704a"/><line x1="26" y1="14" x2="29" y2="28" stroke="#ef7b72" stroke-width="1"/><line x1="38" y1="30" x2="41" y2="43" stroke="#db9624" stroke-width="1.2"/><line x1="47" y1="43" x2="50" y2="57" stroke="#1a6aa3" stroke-width="1.4"/></svg><div class="r" style="left:30px;top:573px;width:141px;height:80px;border:1px solid #c8c6c4;"></div><svg class="r" style="left:31px;top:574px;overflow:hidden" width="141" height="80" viewBox="0 0 141 80"><rect width="141" height="80" fill="#f9f5f2"/><path d="M0 0H20C18 15 10 28 0 35Z" fill="#e6e4e2"/><polygon points="95,0 141,0 141,13 106,12" fill="#ef7b72"/><clipPath id="t5s"><rect x="121" y="0" width="20" height="26"/></clipPath><g clip-path="url(#t5s)" stroke="#1a6aa3" stroke-width="1.3"><line x1="112.0" y1="26" x2="122.4" y2="0"/><line x1="116.5" y1="26" x2="126.9" y2="0"/><line x1="121.0" y1="26" x2="131.4" y2="0"/><line x1="125.5" y1="26" x2="135.9" y2="0"/><line x1="130.0" y1="26" x2="140.4" y2="0"/><line x1="134.5" y1="26" x2="144.9" y2="0"/><line x1="139.0" y1="26" x2="149.4" y2="0"/><line x1="143.5" y1="26" x2="153.9" y2="0"/><line x1="148.0" y1="26" x2="158.4" y2="0"/><line x1="152.5" y1="26" x2="162.9" y2="0"/></g><text x="70.4" y="15" font-family="Liberation Serif" font-size="6" font-weight="400" stroke="#3a3a48" stroke-width="0.15" fill="#3a3a48" text-anchor="middle" textLength="62" lengthAdjust="spacingAndGlyphs">What Is This Topic About?</text><circle cx="2.0" cy="43.0" r="0.55" fill="#f0c58a"/><circle cx="2.0" cy="47.6" r="0.55" fill="#f0c58a"/><circle cx="2.0" cy="52.2" r="0.55" fill="#f0c58a"/><circle cx="2.0" cy="56.8" r="0.55" fill="#f0c58a"/><circle cx="2.0" cy="61.4" r="0.55" fill="#f0c58a"/><circle cx="2.0" cy="66.0" r="0.55" fill="#f0c58a"/><circle cx="2.0" cy="70.6" r="0.55" fill="#f0c58a"/><circle cx="2.0" cy="75.2" r="0.55" fill="#f0c58a"/><circle cx="6.6" cy="43.0" r="0.55" fill="#f0c58a"/><circle cx="6.6" cy="47.6" r="0.55" fill="#f0c58a"/><circle cx="6.6" cy="52.2" r="0.55" fill="#f0c58a"/><circle cx="6.6" cy="56.8" r="0.55" fill="#f0c58a"/><circle cx="6.6" cy="61.4" r="0.55" fill="#f0c58a"/><circle cx="6.6" cy="66.0" r="0.55" fill="#f0c58a"/><circle cx="6.6" cy="70.6" r="0.55" fill="#f0c58a"/><circle cx="6.6" cy="75.2" r="0.55" fill="#f0c58a"/><circle cx="11.2" cy="43.0" r="0.55" fill="#f0c58a"/><circle cx="11.2" cy="47.6" r="0.55" fill="#f0c58a"/><circle cx="11.2" cy="52.2" r="0.55" fill="#f0c58a"/><circle cx="11.2" cy="56.8" r="0.55" fill="#f0c58a"/><circle cx="11.2" cy="61.4" r="0.55" fill="#f0c58a"/><circle cx="11.2" cy="66.0" r="0.55" fill="#f0c58a"/><circle cx="11.2" cy="70.6" r="0.55" fill="#f0c58a"/><circle cx="11.2" cy="75.2" r="0.55" fill="#f0c58a"/><polygon points="62.8,80 74,70.6 95,75.3 97.5,80" fill="#db9624"/><polygon points="104,80 126,62.4 141,69 141,80" fill="#f6e3e3"/><rect x="13.0" y="23.7" width="6.0" height="1" fill="#4a4a52" opacity="0.62"/><rect x="19.9" y="23.7" width="3.4" height="1" fill="#4a4a52" opacity="0.62"/><rect x="24.2" y="23.7" width="3.1" height="1" fill="#4a4a52" opacity="0.62"/><rect x="28.0" y="23.7" width="2.4" height="1" fill="#4a4a52" opacity="0.62"/><rect x="31.5" y="23.7" width="3.1" height="1" fill="#4a4a52" opacity="0.62"/><rect x="35.8" y="23.7" width="3.0" height="1" fill="#4a4a52" opacity="0.62"/><rect x="39.5" y="23.7" width="4.0" height="1" fill="#4a4a52" opacity="0.62"/><rect x="44.3" y="23.7" width="3.5" height="1" fill="#4a4a52" opacity="0.62"/><rect x="49.0" y="23.7" width="5.5" height="1" fill="#4a4a52" opacity="0.62"/><rect x="55.6" y="23.7" width="4.5" height="1" fill="#4a4a52" opacity="0.62"/><rect x="61.3" y="23.7" width="5.8" height="1" fill="#4a4a52" opacity="0.62"/><rect x="68.0" y="23.7" width="4.9" height="1" fill="#4a4a52" opacity="0.62"/><rect x="73.5" y="23.7" width="3.5" height="1" fill="#4a4a52" opacity="0.62"/><rect x="13.0" y="27.8" width="5.0" height="1" fill="#4a4a52" opacity="0.62"/><rect x="19.0" y="27.8" width="3.1" height="1" fill="#4a4a52" opacity="0.62"/><rect x="22.8" y="27.8" width="5.7" height="1" fill="#4a4a52" opacity="0.62"/><rect x="29.2" y="27.8" width="3.9" height="1" fill="#4a4a52" opacity="0.62"/><rect x="33.9" y="27.8" width="3.2" height="1" fill="#4a4a52" opacity="0.62"/><rect x="38.1" y="27.8" width="5.9" height="1" fill="#4a4a52" opacity="0.62"/><rect x="44.7" y="27.8" width="4.6" height="1" fill="#4a4a52" opacity="0.62"/><rect x="50.2" y="27.8" width="4.2" height="1" fill="#4a4a52" opacity="0.62"/><rect x="55.2" y="27.8" width="2.7" height="1" fill="#4a4a52" opacity="0.62"/><rect x="58.6" y="27.8" width="2.8" height="1" fill="#4a4a52" opacity="0.62"/><rect x="62.6" y="27.8" width="4.0" height="1" fill="#4a4a52" opacity="0.62"/><rect x="67.3" y="27.8" width="5.6" height="1" fill="#4a4a52" opacity="0.62"/><rect x="13.0" y="31.9" width="3.8" height="1" fill="#4a4a52" opacity="0.62"/><rect x="17.5" y="31.9" width="2.8" height="1" fill="#4a4a52" opacity="0.62"/><rect x="20.9" y="31.9" width="3.4" height="1" fill="#4a4a52" opacity="0.62"/><rect x="24.9" y="31.9" width="3.0" height="1" fill="#4a4a52" opacity="0.62"/><rect x="28.6" y="31.9" width="4.3" height="1" fill="#4a4a52" opacity="0.62"/><rect x="34.1" y="31.9" width="5.0" height="1" fill="#4a4a52" opacity="0.62"/><rect x="39.9" y="31.9" width="3.7" height="1" fill="#4a4a52" opacity="0.62"/><rect x="44.5" y="31.9" width="3.5" height="1" fill="#4a4a52" opacity="0.62"/><rect x="48.8" y="31.9" width="2.2" height="1" fill="#4a4a52" opacity="0.62"/><rect x="51.8" y="31.9" width="5.9" height="1" fill="#4a4a52" opacity="0.62"/><rect x="58.3" y="31.9" width="4.0" height="1" fill="#4a4a52" opacity="0.62"/><rect x="63.3" y="31.9" width="5.5" height="1" fill="#4a4a52" opacity="0.62"/><rect x="69.5" y="31.9" width="1.5" height="1" fill="#4a4a52" opacity="0.62"/><rect x="13.0" y="36.0" width="3.6" height="1" fill="#4a4a52" opacity="0.62"/><rect x="17.5" y="36.0" width="5.8" height="1" fill="#4a4a52" opacity="0.62"/><rect x="24.4" y="36.0" width="5.5" height="1" fill="#4a4a52" opacity="0.62"/><rect x="30.5" y="36.0" width="2.1" height="1" fill="#4a4a52" opacity="0.62"/><rect x="33.7" y="36.0" width="5.6" height="1" fill="#4a4a52" opacity="0.62"/><rect x="40.1" y="36.0" width="4.3" height="1" fill="#4a4a52" opacity="0.62"/><rect x="45.1" y="36.0" width="3.6" height="1" fill="#4a4a52" opacity="0.62"/><rect x="49.8" y="36.0" width="5.3" height="1" fill="#4a4a52" opacity="0.62"/><rect x="56.2" y="36.0" width="5.9" height="1" fill="#4a4a52" opacity="0.62"/><rect x="62.8" y="36.0" width="2.4" height="1" fill="#4a4a52" opacity="0.62"/><rect x="66.0" y="36.0" width="4.1" height="1" fill="#4a4a52" opacity="0.62"/><rect x="71.1" y="36.0" width="1.9" height="1" fill="#4a4a52" opacity="0.62"/><rect x="13.0" y="40.1" width="4.6" height="1" fill="#4a4a52" opacity="0.62"/><rect x="18.6" y="40.1" width="3.4" height="1" fill="#4a4a52" opacity="0.62"/><g fill="none" stroke="#ef7b72" stroke-width="0.8"><path d="M84 58 L89 42 L94 58 M112 58 L117 42 L122 58"/></g><path d="M84 58 Q89 64 94 58Z M112 58 Q117 64 122 58Z" fill="#f0c56a"/><path d="M88 41 Q103 36 118 41" fill="none" stroke="#f0b073" stroke-width="1.5"/><rect x="101" y="40" width="3" height="28" fill="#f0b073"/><rect x="96" y="67" width="13" height="2.5" fill="#ef7b72"/><rect x="93" y="70" width="19" height="2" fill="#232a48"/><rect x="108" y="60" width="10" height="4" fill="#1a6aa3"/><rect x="115" y="67" width="11" height="6" rx="1" fill="#1a6aa3"/></svg><div class="r" style="left:30px;top:673px;width:141px;height:80px;border:1px solid #c8c6c4;"></div><svg class="r" style="left:31px;top:674px;overflow:hidden" width="141" height="80" viewBox="0 0 141 80"><rect width="141" height="80" fill="#f9f5f2"/><clipPath id="t6s"><rect x="1" y="2" width="44" height="6"/></clipPath><g clip-path="url(#t6s)" stroke="#f3908a" stroke-width="1.4"><line x1="-7.4" y1="8" x2="-5.0" y2="2"/><line x1="-3.2" y1="8" x2="-0.8" y2="2"/><line x1="1.0" y1="8" x2="3.4" y2="2"/><line x1="5.2" y1="8" x2="7.6" y2="2"/><line x1="9.4" y1="8" x2="11.8" y2="2"/><line x1="13.6" y1="8" x2="16.0" y2="2"/><line x1="17.8" y1="8" x2="20.2" y2="2"/><line x1="22.0" y1="8" x2="24.4" y2="2"/><line x1="26.2" y1="8" x2="28.6" y2="2"/><line x1="30.4" y1="8" x2="32.8" y2="2"/><line x1="34.6" y1="8" x2="37.0" y2="2"/><line x1="38.8" y1="8" x2="41.2" y2="2"/><line x1="43.0" y1="8" x2="45.4" y2="2"/><line x1="47.2" y1="8" x2="49.6" y2="2"/><line x1="51.4" y1="8" x2="53.8" y2="2"/></g><polygon points="96,0 141,0 141,5 106,5" fill="#e6e4e2"/><text x="74" y="14.5" font-family="Liberation Serif" font-size="5.6" font-weight="400" stroke="#3a3a48" stroke-width="0.15" fill="#3a3a48" text-anchor="middle" textLength="50" lengthAdjust="spacingAndGlyphs">Features of the Topic</text><circle cx="120.0" cy="9.0" r="0.6" fill="#f0c58a"/><circle cx="120.0" cy="13.5" r="0.6" fill="#f0c58a"/><circle cx="120.0" cy="18.0" r="0.6" fill="#f0c58a"/><circle cx="120.0" cy="22.5" r="0.6" fill="#f0c58a"/><circle cx="120.0" cy="27.0" r="0.6" fill="#f0c58a"/><circle cx="120.0" cy="31.5" r="0.6" fill="#f0c58a"/><circle cx="120.0" cy="36.0" r="0.6" fill="#f0c58a"/><circle cx="120.0" cy="40.5" r="0.6" fill="#f0c58a"/><circle cx="120.0" cy="45.0" r="0.6" fill="#f0c58a"/><circle cx="120.0" cy="49.5" r="0.6" fill="#f0c58a"/><circle cx="124.8" cy="9.0" r="0.6" fill="#f0c58a"/><circle cx="124.8" cy="13.5" r="0.6" fill="#f0c58a"/><circle cx="124.8" cy="18.0" r="0.6" fill="#f0c58a"/><circle cx="124.8" cy="22.5" r="0.6" fill="#f0c58a"/><circle cx="124.8" cy="27.0" r="0.6" fill="#f0c58a"/><circle cx="124.8" cy="31.5" r="0.6" fill="#f0c58a"/><circle cx="124.8" cy="36.0" r="0.6" fill="#f0c58a"/><circle cx="124.8" cy="40.5" r="0.6" fill="#f0c58a"/><circle cx="124.8" cy="45.0" r="0.6" fill="#f0c58a"/><circle cx="124.8" cy="49.5" r="0.6" fill="#f0c58a"/><circle cx="129.6" cy="9.0" r="0.6" fill="#f0c58a"/><circle cx="129.6" cy="13.5" r="0.6" fill="#f0c58a"/><circle cx="129.6" cy="18.0" r="0.6" fill="#f0c58a"/><circle cx="129.6" cy="22.5" r="0.6" fill="#f0c58a"/><circle cx="129.6" cy="27.0" r="0.6" fill="#f0c58a"/><circle cx="129.6" cy="31.5" r="0.6" fill="#f0c58a"/><circle cx="129.6" cy="36.0" r="0.6" fill="#f0c58a"/><circle cx="129.6" cy="40.5" r="0.6" fill="#f0c58a"/><circle cx="129.6" cy="45.0" r="0.6" fill="#f0c58a"/><circle cx="129.6" cy="49.5" r="0.6" fill="#f0c58a"/><circle cx="134.4" cy="9.0" r="0.6" fill="#f0c58a"/><circle cx="134.4" cy="13.5" r="0.6" fill="#f0c58a"/><circle cx="134.4" cy="18.0" r="0.6" fill="#f0c58a"/><circle cx="134.4" cy="22.5" r="0.6" fill="#f0c58a"/><circle cx="134.4" cy="27.0" r="0.6" fill="#f0c58a"/><circle cx="134.4" cy="31.5" r="0.6" fill="#f0c58a"/><circle cx="134.4" cy="36.0" r="0.6" fill="#f0c58a"/><circle cx="134.4" cy="40.5" r="0.6" fill="#f0c58a"/><circle cx="134.4" cy="45.0" r="0.6" fill="#f0c58a"/><circle cx="134.4" cy="49.5" r="0.6" fill="#f0c58a"/><circle cx="139.2" cy="9.0" r="0.6" fill="#f0c58a"/><circle cx="139.2" cy="13.5" r="0.6" fill="#f0c58a"/><circle cx="139.2" cy="18.0" r="0.6" fill="#f0c58a"/><circle cx="139.2" cy="22.5" r="0.6" fill="#f0c58a"/><circle cx="139.2" cy="27.0" r="0.6" fill="#f0c58a"/><circle cx="139.2" cy="31.5" r="0.6" fill="#f0c58a"/><circle cx="139.2" cy="36.0" r="0.6" fill="#f0c58a"/><circle cx="139.2" cy="40.5" r="0.6" fill="#f0c58a"/><circle cx="139.2" cy="45.0" r="0.6" fill="#f0c58a"/><circle cx="139.2" cy="49.5" r="0.6" fill="#f0c58a"/><rect x="72.0" y="21.5" width="9.0" height="1.2" fill="#ef7b72"/><rect x="72.0" y="25.2" width="2.2" height="0.9" fill="#4a4a52" opacity="0.5"/><rect x="75.2" y="25.2" width="2.9" height="0.9" fill="#4a4a52" opacity="0.5"/><rect x="79.3" y="25.2" width="4.6" height="0.9" fill="#4a4a52" opacity="0.5"/><rect x="84.7" y="25.2" width="2.5" height="0.9" fill="#4a4a52" opacity="0.5"/><rect x="87.9" y="25.2" width="4.5" height="0.9" fill="#4a4a52" opacity="0.5"/><rect x="93.5" y="25.2" width="2.4" height="0.9" fill="#4a4a52" opacity="0.5"/><rect x="96.6" y="25.2" width="4.1" height="0.9" fill="#4a4a52" opacity="0.5"/><rect x="101.6" y="25.2" width="3.6" height="0.9" fill="#4a4a52" opacity="0.5"/><rect x="105.9" y="25.2" width="4.1" height="0.9" fill="#4a4a52" opacity="0.5"/><rect x="72.0" y="27.3" width="3.2" height="0.9" fill="#4a4a52" opacity="0.5"/><rect x="76.1" y="27.3" width="5.8" height="0.9" fill="#4a4a52" opacity="0.5"/><rect x="82.9" y="27.3" width="5.5" height="0.9" fill="#4a4a52" opacity="0.5"/><rect x="89.3" y="27.3" width="2.9" height="0.9" fill="#4a4a52" opacity="0.5"/><rect x="93.0" y="27.3" width="5.8" height="0.9" fill="#4a4a52" opacity="0.5"/><rect x="99.9" y="27.3" width="3.2" height="0.9" fill="#4a4a52" opacity="0.5"/><rect x="103.7" y="27.3" width="4.0" height="0.9" fill="#4a4a52" opacity="0.5"/><rect x="108.7" y="27.3" width="3.3" height="0.9" fill="#4a4a52" opacity="0.5"/><rect x="79.0" y="40.5" width="9.0" height="1.2" fill="#ef7b72"/><rect x="79.0" y="44.2" width="4.7" height="0.9" fill="#4a4a52" opacity="0.5"/><rect x="84.8" y="44.2" width="2.9" height="0.9" fill="#4a4a52" opacity="0.5"/><rect x="88.4" y="44.2" width="3.4" height="0.9" fill="#4a4a52" opacity="0.5"/><rect x="92.6" y="44.2" width="4.7" height="0.9" fill="#4a4a52" opacity="0.5"/><rect x="98.0" y="44.2" width="5.2" height="0.9" fill="#4a4a52" opacity="0.5"/><rect x="104.2" y="44.2" width="4.0" height="0.9" fill="#4a4a52" opacity="0.5"/><rect x="109.0" y="44.2" width="5.9" height="0.9" fill="#4a4a52" opacity="0.5"/><rect x="115.6" y="44.2" width="2.4" height="0.9" fill="#4a4a52" opacity="0.5"/><rect x="79.0" y="46.3" width="2.9" height="0.9" fill="#4a4a52" opacity="0.5"/><rect x="82.9" y="46.3" width="3.2" height="0.9" fill="#4a4a52" opacity="0.5"/><rect x="87.3" y="46.3" width="4.0" height="0.9" fill="#4a4a52" opacity="0.5"/><rect x="92.0" y="46.3" width="2.9" height="0.9" fill="#4a4a52" opacity="0.5"/><rect x="95.7" y="46.3" width="4.7" height="0.9" fill="#4a4a52" opacity="0.5"/><rect x="101.6" y="46.3" width="2.6" height="0.9" fill="#4a4a52" opacity="0.5"/><circle cx="26" cy="24" r="3.8" fill="#fdb99a"/><path d="M18.5 56 L19.5 33 Q26 29 32.5 33 L33.5 56Z" fill="#fa4a1b"/><path d="M19.5 34 L17 42 L23 43.5" fill="none" stroke="#fdb99a" stroke-width="1.6"/><path d="M32.5 34 L35 42 L29 43.5" fill="none" stroke="#fdb99a" stroke-width="1.6"/><circle cx="44.5" cy="27" r="3.8" fill="#613830"/><path d="M40.8 24 Q44.5 20.5 48.2 24Z" fill="#aaa"/><path d="M36 56 L36.5 36 Q44.5 31.5 52.5 36 L53 48 H36Z" fill="#232a48"/><rect x="38.5" y="47" width="12" height="9" fill="#1a6aa3"/><path d="M36.5 37 L34 47" stroke="#232a48" stroke-width="2"/><path d="M52.5 37 L55 47" stroke="#232a48" stroke-width="2"/><path d="M35 38 L34 55" stroke="#db9624" stroke-width="0.8"/><circle cx="59" cy="38" r="2.8" fill="#fdb99a"/><path d="M55 56 L56 43 Q59 41 62 43 L63 56Z" fill="#db9624"/><path d="M56 43 Q54 45 55 48" stroke="#ef7b72" stroke-width="1.4" fill="none"/><path d="M62 43 L66 38" stroke="#fdb99a" stroke-width="1.1"/></svg><svg class="r" style="left:0;top:0;width:0;height:0"><defs><symbol id="s1" viewBox="304 168 962 542" preserveAspectRatio="none"><rect x="304" y="168" width="962" height="542" fill="#f9f5f2"/><clipPath id="stc"><rect x="871" y="208" width="355.6" height="104"/></clipPath><g clip-path="url(#stc)" fill="#1170aa"><polygon points="844.6,312 851.6,312 893.2,208 886.2,208"/><polygon points="871.7,312 878.7,312 920.3,208 913.3,208"/><polygon points="898.8,312 905.8,312 947.4,208 940.4,208"/><polygon points="925.9,312 932.9,312 974.5,208 967.5,208"/><polygon points="953.0,312 960.0,312 1001.6,208 994.6,208"/><polygon points="980.1,312 987.1,312 1028.7,208 1021.7,208"/><polygon points="1007.2,312 1014.2,312 1055.8,208 1048.8,208"/><polygon points="1034.3,312 1041.3,312 1082.9,208 1075.9,208"/><polygon points="1061.4,312 1068.4,312 1110.0,208 1103.0,208"/><polygon points="1088.5,312 1095.5,312 1137.1,208 1130.1,208"/><polygon points="1115.6,312 1122.6,312 1164.2,208 1157.2,208"/><polygon points="1142.7,312 1149.7,312 1191.3,208 1184.3,208"/><polygon points="1169.8,312 1176.8,312 1218.4,208 1211.4,208"/><polygon points="1196.9,312 1203.9,312 1245.5,208 1238.5,208"/><polygon points="1224.0,312 1231.0,312 1272.6,208 1265.6,208"/><polygon points="1251.1,312 1258.1,312 1299.7,208 1292.7,208"/></g><polygon points="679.8,207.5 928.2,207.5 912.6,271.9 757.7,295" fill="#f6e6e6"/><polygon points="345,413 360,418 421,670 345,670" fill="#e8e6e4"/><polygon points="512.3,670.7 520.5,647.3 615.7,636.7 721,656.6 842.6,612.7 852,608.5 889,665 891,670.7" fill="#f6e6e6"/><g fill="#e39b2a"><circle cx="356.0" cy="224.7" r="2"/><circle cx="390.9" cy="224.7" r="2"/><circle cx="425.8" cy="224.7" r="2"/><circle cx="460.7" cy="224.7" r="2"/><circle cx="356.0" cy="256.5" r="2"/><circle cx="390.9" cy="256.5" r="2"/><circle cx="425.8" cy="256.5" r="2"/><circle cx="460.7" cy="256.5" r="2"/><circle cx="356.0" cy="288.3" r="2"/><circle cx="390.9" cy="288.3" r="2"/><circle cx="425.8" cy="288.3" r="2"/><circle cx="460.7" cy="288.3" r="2"/><circle cx="356.0" cy="320.1" r="2"/><circle cx="390.9" cy="320.1" r="2"/><circle cx="425.8" cy="320.1" r="2"/><circle cx="460.7" cy="320.1" r="2"/><circle cx="356.0" cy="351.9" r="2"/><circle cx="390.9" cy="351.9" r="2"/><circle cx="425.8" cy="351.9" r="2"/><circle cx="460.7" cy="351.9" r="2"/><circle cx="356.0" cy="383.7" r="2"/><circle cx="390.9" cy="383.7" r="2"/><circle cx="425.8" cy="383.7" r="2"/><circle cx="460.7" cy="383.7" r="2"/><circle cx="356.0" cy="415.5" r="2"/><circle cx="390.9" cy="415.5" r="2"/><circle cx="425.8" cy="415.5" r="2"/><circle cx="460.7" cy="415.5" r="2"/><circle cx="356.0" cy="447.3" r="2"/><circle cx="390.9" cy="447.3" r="2"/><circle cx="425.8" cy="447.3" r="2"/><circle cx="460.7" cy="447.3" r="2"/><circle cx="356.0" cy="479.1" r="2"/><circle cx="390.9" cy="479.1" r="2"/><circle cx="425.8" cy="479.1" r="2"/><circle cx="460.7" cy="479.1" r="2"/></g><g fill="#232b4a"><rect x="399.3" y="255.0" width="7.6" height="60.0"/><rect x="441.5" y="255.0" width="7.8" height="60.0"/><rect x="403.0" y="280.3" width="42.0" height="7.0"/><rect x="394.7" y="255.0" width="19.6" height="7.5"/><rect x="394.7" y="307.5" width="19.6" height="7.5"/><rect x="436.2" y="255.0" width="19.8" height="7.5"/><rect x="436.2" y="307.5" width="19.8" height="7.5"/><rect x="463.4" y="273.4" width="13.8" height="7.5"/><rect x="495.2" y="273.4" width="8.1" height="41.6"/><rect x="488.8" y="273.4" width="14.5" height="7.5"/><rect x="495.2" y="307.5" width="12.0" height="7.5"/><rect x="523.3" y="273.4" width="8.1" height="41.6"/><rect x="518.3" y="273.4" width="13.1" height="7.5"/><rect x="518.3" y="307.5" width="18.9" height="7.5"/><rect x="549.9" y="290.0" width="8.0" height="25.0"/><rect x="544.1" y="307.5" width="19.6" height="7.5"/><rect x="576.4" y="290.0" width="8.1" height="25.0"/><rect x="571.3" y="307.5" width="18.9" height="7.5"/><rect x="618.0" y="307.5" width="15.6" height="7.5"/><rect x="647.9" y="273.4" width="8.0" height="41.6"/><rect x="642.0" y="273.4" width="13.9" height="7.5"/><rect x="642.0" y="307.5" width="19.7" height="7.5"/><rect x="670.9" y="291.0" width="8.1" height="24.0"/><rect x="667.5" y="307.5" width="20.0" height="7.5"/><rect x="399.5" y="351.3" width="7.8" height="59.5"/><rect x="394.7" y="351.3" width="25.3" height="7.5"/><rect x="394.7" y="403.3" width="19.4" height="7.5"/><rect x="429.6" y="403.3" width="12.6" height="7.5"/><rect x="456.8" y="370.0" width="7.3" height="40.8"/><rect x="450.0" y="370.0" width="14.1" height="7.5"/><rect x="450.0" y="403.3" width="19.4" height="7.5"/><circle cx="459.9" cy="354.6" r="5.4"/><rect x="505.3" y="370.0" width="7.7" height="7.5"/><rect x="505.3" y="370.0" width="7.7" height="42.0"/><rect x="527.6" y="350.0" width="7.8" height="60.8"/><rect x="523.1" y="350.0" width="12.3" height="7.5"/><rect x="523.1" y="403.3" width="18.6" height="7.5"/><rect x="555.7" y="386.0" width="7.6" height="24.8"/><rect x="549.9" y="403.3" width="18.4" height="7.5"/><rect x="574.1" y="370.0" width="22.3" height="6.8"/><polygon points="580.9,359.4 587.7,357 587.7,380 580.9,380"/></g><g fill="none" stroke="#232b4a" stroke-width="7.1"><path d="M473.2 273.4 V297 C473.2 307 478 311.3 485.5 311.3 C493.5 311.3 499 306 499 299"/><path d="M527.4 293 C527.8 281.5 533.5 276.9 541.2 276.9 C549.5 276.9 553.9 281.5 553.9 292"/><path d="M553.9 293 C554.3 281.5 560 276.9 567.7 276.9 C576 276.9 580.5 281.5 580.5 292"/><path d="M600.5 283.5 Q604 277.2 612 277.2 Q622 277.2 622 290 V315"/><path d="M622 295.5 H609.5 Q599.8 295.5 599.8 303.5 Q599.8 311.3 609 311.3 Q618 311.3 622 305"/><path d="M651.9 293 C652.3 281.5 658 276.9 664.5 276.9 C671.5 276.9 675 281.5 675 292"/><path d="M405 355.05 H419 Q433.9 355.05 433.9 368.3 Q433.9 381.5 419 381.5 H405"/><path d="M424 383 Q430 395 433.5 407"/><path d="M509 381 Q505 373.4 493 373.4 Q479 373.4 479 390 Q479 408.3 493 408.3 Q505 408.3 509 400"/><path d="M509.2 410 Q509.2 425.2 494 425.2 Q484 425.2 478.5 420"/><path d="M531.5 389 C531.9 378 538 373.5 546 373.5 C554.5 373.5 559.5 378 559.5 388"/><path d="M584.3 378 V397 Q584.3 407.2 592.5 407.2 Q596.5 407.2 599.5 405.5"/><path d="M633.3 385.5 V381 Q630 373.2 620.5 373.2 Q608.2 373.2 608.2 382.5 Q608.2 389.2 621 391.7 Q633.6 394.2 633.6 400.6 Q633.6 407.9 620.5 407.9 Q611 407.9 607.8 401.3 V395.5"/></g><text x="389.5" y="467.8" font-family="Liberation Sans" font-size="23" fill="#363b52" textLength="353" lengthAdjust="spacingAndGlyphs">Here is where your presentation begins</text><polygon points="796,552.8 821,552.8 825.2,680 792.1,680" fill="#db9624"/><polygon points="842,538.5 876.7,538.5 880.3,676.7 841.9,678.4" fill="#1a6aa3"/><polygon points="897,543 922,543 919.8,675 887.1,676.7" fill="#e6e4e2"/><polygon points="943,516 978.5,516 982.8,676.7 934.1,677.7" fill="#fa4a1b"/><polygon points="993,569.5 1014.7,569.5 1017,676 992,676" fill="#1a6aa3"/><polygon points="1039.6,528 1062.3,528 1065,676 1033.4,676" fill="#ee7a75"/><polygon points="1092.6,571 1121.4,571 1123,676 1086.8,676" fill="#e6e4e2"/><polygon points="1146.6,514 1180.5,514 1190.3,676.2 1145,676.2" fill="#232a48"/><clipPath id="slc"><polygon points="842,538.5 876.7,538.5 880.3,676.7 841.9,678.4"/><polygon points="993,569.5 1014.7,569.5 1017,676 992,676"/></clipPath><g clip-path="url(#slc)"><rect x="850.5" y="614.7" width="2.2" height="0.9" fill="#34465c" transform="rotate(94 850.5 614.7)"/><rect x="877.6" y="604.8" width="2.2" height="0.9" fill="#34465c" transform="rotate(148 877.6 604.8)"/><rect x="843.6" y="539.9" width="2.2" height="0.9" fill="#34465c" transform="rotate(120 843.6 539.9)"/><rect x="851.4" y="571.0" width="2.2" height="0.9" fill="#34465c" transform="rotate(120 851.4 571.0)"/><rect x="862.6" y="615.5" width="2.2" height="0.9" fill="#34465c" transform="rotate(101 862.6 615.5)"/><rect x="866.6" y="559.2" width="2.2" height="0.9" fill="#34465c" transform="rotate(162 866.6 559.2)"/><rect x="847.1" y="668.5" width="2.2" height="0.9" fill="#34465c" transform="rotate(99 847.1 668.5)"/><rect x="870.7" y="632.7" width="2.2" height="0.9" fill="#34465c" transform="rotate(16 870.7 632.7)"/><rect x="847.4" y="673.0" width="2.2" height="0.9" fill="#34465c" transform="rotate(10 847.4 673.0)"/><rect x="853.1" y="542.4" width="2.2" height="0.9" fill="#34465c" transform="rotate(68 853.1 542.4)"/><rect x="859.9" y="639.4" width="2.2" height="0.9" fill="#34465c" transform="rotate(99 859.9 639.4)"/><rect x="869.6" y="667.9" width="2.2" height="0.9" fill="#34465c" transform="rotate(101 869.6 667.9)"/><rect x="870.1" y="619.3" width="2.2" height="0.9" fill="#34465c" transform="rotate(34 870.1 619.3)"/><rect x="876.2" y="551.7" width="2.2" height="0.9" fill="#34465c" transform="rotate(34 876.2 551.7)"/><rect x="860.8" y="574.4" width="2.2" height="0.9" fill="#34465c" transform="rotate(172 860.8 574.4)"/><rect x="858.4" y="626.4" width="2.2" height="0.9" fill="#34465c" transform="rotate(77 858.4 626.4)"/><rect x="857.8" y="655.5" width="2.2" height="0.9" fill="#34465c" transform="rotate(146 857.8 655.5)"/><rect x="855.0" y="620.5" width="2.2" height="0.9" fill="#34465c" transform="rotate(149 855.0 620.5)"/><rect x="850.3" y="585.5" width="2.2" height="0.9" fill="#34465c" transform="rotate(7 850.3 585.5)"/><rect x="875.3" y="677.7" width="2.2" height="0.9" fill="#34465c" transform="rotate(171 875.3 677.7)"/><rect x="868.8" y="636.5" width="2.2" height="0.9" fill="#34465c" transform="rotate(83 868.8 636.5)"/><rect x="879.6" y="665.6" width="2.2" height="0.9" fill="#34465c" transform="rotate(145 879.6 665.6)"/><rect x="845.2" y="630.4" width="2.2" height="0.9" fill="#34465c" transform="rotate(162 845.2 630.4)"/><rect x="874.3" y="618.9" width="2.2" height="0.9" fill="#34465c" transform="rotate(72 874.3 618.9)"/><rect x="846.0" y="606.0" width="2.2" height="0.9" fill="#34465c" transform="rotate(163 846.0 606.0)"/><rect x="880.6" y="550.5" width="2.2" height="0.9" fill="#34465c" transform="rotate(17 880.6 550.5)"/><rect x="857.4" y="559.3" width="2.2" height="0.9" fill="#34465c" transform="rotate(75 857.4 559.3)"/><rect x="858.1" y="596.5" width="2.2" height="0.9" fill="#34465c" transform="rotate(30 858.1 596.5)"/><rect x="842.8" y="624.6" width="2.2" height="0.9" fill="#34465c" transform="rotate(11 842.8 624.6)"/><rect x="856.1" y="620.7" width="2.2" height="0.9" fill="#34465c" transform="rotate(141 856.1 620.7)"/><rect x="876.2" y="676.3" width="2.2" height="0.9" fill="#34465c" transform="rotate(129 876.2 676.3)"/><rect x="850.4" y="543.1" width="2.2" height="0.9" fill="#34465c" transform="rotate(1 850.4 543.1)"/><rect x="844.1" y="622.6" width="2.2" height="0.9" fill="#34465c" transform="rotate(8 844.1 622.6)"/><rect x="879.0" y="675.0" width="2.2" height="0.9" fill="#34465c" transform="rotate(74 879.0 675.0)"/><rect x="865.4" y="560.0" width="2.2" height="0.9" fill="#34465c" transform="rotate(10 865.4 560.0)"/><rect x="880.2" y="585.9" width="2.2" height="0.9" fill="#34465c" transform="rotate(92 880.2 585.9)"/><rect x="879.3" y="664.4" width="2.2" height="0.9" fill="#34465c" transform="rotate(96 879.3 664.4)"/><rect x="856.1" y="660.7" width="2.2" height="0.9" fill="#34465c" transform="rotate(98 856.1 660.7)"/><rect x="866.8" y="622.0" width="2.2" height="0.9" fill="#34465c" transform="rotate(143 866.8 622.0)"/><rect x="845.1" y="675.2" width="2.2" height="0.9" fill="#34465c" transform="rotate(129 845.1 675.2)"/><rect x="851.9" y="627.4" width="2.2" height="0.9" fill="#34465c" transform="rotate(60 851.9 627.4)"/><rect x="878.5" y="599.7" width="2.2" height="0.9" fill="#34465c" transform="rotate(66 878.5 599.7)"/><rect x="861.8" y="615.3" width="2.2" height="0.9" fill="#34465c" transform="rotate(2 861.8 615.3)"/><rect x="872.5" y="677.2" width="2.2" height="0.9" fill="#34465c" transform="rotate(80 872.5 677.2)"/><rect x="841.8" y="624.8" width="2.2" height="0.9" fill="#34465c" transform="rotate(161 841.8 624.8)"/><rect x="846.3" y="627.3" width="2.2" height="0.9" fill="#34465c" transform="rotate(85 846.3 627.3)"/><rect x="859.7" y="633.8" width="2.2" height="0.9" fill="#34465c" transform="rotate(90 859.7 633.8)"/><rect x="865.4" y="577.3" width="2.2" height="0.9" fill="#34465c" transform="rotate(125 865.4 577.3)"/><rect x="841.9" y="546.5" width="2.2" height="0.9" fill="#34465c" transform="rotate(173 841.9 546.5)"/><rect x="841.9" y="590.1" width="2.2" height="0.9" fill="#34465c" transform="rotate(160 841.9 590.1)"/><rect x="859.3" y="621.6" width="2.2" height="0.9" fill="#34465c" transform="rotate(81 859.3 621.6)"/><rect x="848.1" y="564.1" width="2.2" height="0.9" fill="#34465c" transform="rotate(94 848.1 564.1)"/><rect x="874.8" y="575.2" width="2.2" height="0.9" fill="#34465c" transform="rotate(96 874.8 575.2)"/><rect x="845.2" y="652.6" width="2.2" height="0.9" fill="#34465c" transform="rotate(145 845.2 652.6)"/><rect x="868.3" y="556.5" width="2.2" height="0.9" fill="#34465c" transform="rotate(128 868.3 556.5)"/><rect x="849.9" y="651.3" width="2.2" height="0.9" fill="#34465c" transform="rotate(61 849.9 651.3)"/><rect x="854.1" y="633.6" width="2.2" height="0.9" fill="#34465c" transform="rotate(166 854.1 633.6)"/><rect x="868.9" y="552.4" width="2.2" height="0.9" fill="#34465c" transform="rotate(82 868.9 552.4)"/><rect x="879.0" y="633.2" width="2.2" height="0.9" fill="#34465c" transform="rotate(57 879.0 633.2)"/><rect x="858.5" y="658.6" width="2.2" height="0.9" fill="#34465c" transform="rotate(43 858.5 658.6)"/><rect x="844.2" y="642.6" width="2.2" height="0.9" fill="#34465c" transform="rotate(55 844.2 642.6)"/><rect x="876.4" y="601.6" width="2.2" height="0.9" fill="#34465c" transform="rotate(57 876.4 601.6)"/><rect x="872.5" y="542.8" width="2.2" height="0.9" fill="#34465c" transform="rotate(48 872.5 542.8)"/><rect x="853.6" y="655.9" width="2.2" height="0.9" fill="#34465c" transform="rotate(147 853.6 655.9)"/><rect x="848.3" y="577.3" width="2.2" height="0.9" fill="#34465c" transform="rotate(164 848.3 577.3)"/><rect x="844.4" y="625.3" width="2.2" height="0.9" fill="#34465c" transform="rotate(150 844.4 625.3)"/><rect x="846.2" y="579.2" width="2.2" height="0.9" fill="#34465c" transform="rotate(69 846.2 579.2)"/><rect x="859.6" y="627.4" width="2.2" height="0.9" fill="#34465c" transform="rotate(74 859.6 627.4)"/><rect x="857.8" y="595.7" width="2.2" height="0.9" fill="#34465c" transform="rotate(105 857.8 595.7)"/><rect x="847.2" y="538.7" width="2.2" height="0.9" fill="#34465c" transform="rotate(159 847.2 538.7)"/><rect x="880.5" y="599.2" width="2.2" height="0.9" fill="#34465c" transform="rotate(56 880.5 599.2)"/><rect x="842.3" y="602.4" width="2.2" height="0.9" fill="#34465c" transform="rotate(169 842.3 602.4)"/><rect x="870.9" y="673.8" width="2.2" height="0.9" fill="#34465c" transform="rotate(139 870.9 673.8)"/><rect x="854.6" y="570.1" width="2.2" height="0.9" fill="#34465c" transform="rotate(17 854.6 570.1)"/><rect x="875.3" y="674.9" width="2.2" height="0.9" fill="#34465c" transform="rotate(30 875.3 674.9)"/><rect x="873.4" y="544.4" width="2.2" height="0.9" fill="#34465c" transform="rotate(177 873.4 544.4)"/><rect x="861.5" y="566.0" width="2.2" height="0.9" fill="#34465c" transform="rotate(110 861.5 566.0)"/><rect x="864.1" y="539.9" width="2.2" height="0.9" fill="#34465c" transform="rotate(30 864.1 539.9)"/><rect x="847.9" y="580.3" width="2.2" height="0.9" fill="#34465c" transform="rotate(169 847.9 580.3)"/><rect x="841.8" y="613.7" width="2.2" height="0.9" fill="#34465c" transform="rotate(13 841.8 613.7)"/><rect x="878.6" y="624.3" width="2.2" height="0.9" fill="#34465c" transform="rotate(87 878.6 624.3)"/><rect x="846.0" y="675.1" width="2.2" height="0.9" fill="#34465c" transform="rotate(138 846.0 675.1)"/><rect x="860.1" y="648.3" width="2.2" height="0.9" fill="#34465c" transform="rotate(90 860.1 648.3)"/><rect x="849.8" y="555.2" width="2.2" height="0.9" fill="#34465c" transform="rotate(30 849.8 555.2)"/><rect x="847.9" y="649.6" width="2.2" height="0.9" fill="#34465c" transform="rotate(32 847.9 649.6)"/><rect x="873.9" y="539.1" width="2.2" height="0.9" fill="#34465c" transform="rotate(160 873.9 539.1)"/><rect x="863.8" y="594.4" width="2.2" height="0.9" fill="#34465c" transform="rotate(69 863.8 594.4)"/><rect x="850.9" y="625.2" width="2.2" height="0.9" fill="#34465c" transform="rotate(133 850.9 625.2)"/><rect x="857.9" y="604.7" width="2.2" height="0.9" fill="#34465c" transform="rotate(0 857.9 604.7)"/><rect x="875.3" y="647.3" width="2.2" height="0.9" fill="#34465c" transform="rotate(11 875.3 647.3)"/><rect x="846.0" y="547.6" width="2.2" height="0.9" fill="#34465c" transform="rotate(8 846.0 547.6)"/><rect x="875.2" y="550.1" width="2.2" height="0.9" fill="#34465c" transform="rotate(128 875.2 550.1)"/><rect x="860.6" y="560.1" width="2.2" height="0.9" fill="#34465c" transform="rotate(18 860.6 560.1)"/><rect x="855.1" y="629.2" width="2.2" height="0.9" fill="#34465c" transform="rotate(150 855.1 629.2)"/><rect x="853.2" y="575.4" width="2.2" height="0.9" fill="#34465c" transform="rotate(84 853.2 575.4)"/><rect x="858.1" y="556.0" width="2.2" height="0.9" fill="#34465c" transform="rotate(0 858.1 556.0)"/><rect x="869.6" y="591.6" width="2.2" height="0.9" fill="#34465c" transform="rotate(20 869.6 591.6)"/><rect x="863.7" y="544.1" width="2.2" height="0.9" fill="#34465c" transform="rotate(117 863.7 544.1)"/><rect x="865.2" y="648.3" width="2.2" height="0.9" fill="#34465c" transform="rotate(97 865.2 648.3)"/><rect x="866.5" y="544.1" width="2.2" height="0.9" fill="#34465c" transform="rotate(110 866.5 544.1)"/><rect x="843.1" y="626.5" width="2.2" height="0.9" fill="#34465c" transform="rotate(179 843.1 626.5)"/><rect x="853.6" y="672.0" width="2.2" height="0.9" fill="#34465c" transform="rotate(107 853.6 672.0)"/><rect x="859.4" y="572.6" width="2.2" height="0.9" fill="#34465c" transform="rotate(137 859.4 572.6)"/><rect x="851.8" y="621.2" width="2.2" height="0.9" fill="#34465c" transform="rotate(108 851.8 621.2)"/><rect x="850.0" y="556.4" width="2.2" height="0.9" fill="#34465c" transform="rotate(7 850.0 556.4)"/><rect x="878.5" y="590.8" width="2.2" height="0.9" fill="#34465c" transform="rotate(143 878.5 590.8)"/><rect x="872.6" y="575.0" width="2.2" height="0.9" fill="#34465c" transform="rotate(118 872.6 575.0)"/><rect x="868.6" y="670.4" width="2.2" height="0.9" fill="#34465c" transform="rotate(169 868.6 670.4)"/><rect x="875.0" y="612.8" width="2.2" height="0.9" fill="#34465c" transform="rotate(96 875.0 612.8)"/><rect x="867.7" y="641.5" width="2.2" height="0.9" fill="#34465c" transform="rotate(144 867.7 641.5)"/><rect x="862.3" y="652.4" width="2.2" height="0.9" fill="#34465c" transform="rotate(1 862.3 652.4)"/><rect x="859.9" y="571.3" width="2.2" height="0.9" fill="#34465c" transform="rotate(99 859.9 571.3)"/><rect x="842.8" y="550.9" width="2.2" height="0.9" fill="#34465c" transform="rotate(25 842.8 550.9)"/><rect x="867.4" y="591.0" width="2.2" height="0.9" fill="#34465c" transform="rotate(6 867.4 591.0)"/><rect x="854.7" y="658.2" width="2.2" height="0.9" fill="#34465c" transform="rotate(6 854.7 658.2)"/><rect x="874.8" y="633.0" width="2.2" height="0.9" fill="#34465c" transform="rotate(178 874.8 633.0)"/><rect x="879.1" y="619.6" width="2.2" height="0.9" fill="#34465c" transform="rotate(22 879.1 619.6)"/><rect x="842.5" y="646.2" width="2.2" height="0.9" fill="#34465c" transform="rotate(130 842.5 646.2)"/><rect x="862.2" y="571.6" width="2.2" height="0.9" fill="#34465c" transform="rotate(141 862.2 571.6)"/><rect x="871.0" y="669.8" width="2.2" height="0.9" fill="#34465c" transform="rotate(15 871.0 669.8)"/><rect x="863.0" y="660.6" width="2.2" height="0.9" fill="#34465c" transform="rotate(46 863.0 660.6)"/><rect x="874.1" y="572.1" width="2.2" height="0.9" fill="#34465c" transform="rotate(46 874.1 572.1)"/><rect x="866.8" y="602.0" width="2.2" height="0.9" fill="#34465c" transform="rotate(179 866.8 602.0)"/><rect x="871.1" y="593.5" width="2.2" height="0.9" fill="#34465c" transform="rotate(94 871.1 593.5)"/><rect x="865.0" y="670.4" width="2.2" height="0.9" fill="#34465c" transform="rotate(142 865.0 670.4)"/><rect x="857.7" y="549.7" width="2.2" height="0.9" fill="#34465c" transform="rotate(128 857.7 549.7)"/><rect x="850.4" y="669.1" width="2.2" height="0.9" fill="#34465c" transform="rotate(41 850.4 669.1)"/><rect x="857.6" y="618.1" width="2.2" height="0.9" fill="#34465c" transform="rotate(148 857.6 618.1)"/><rect x="868.0" y="610.9" width="2.2" height="0.9" fill="#34465c" transform="rotate(123 868.0 610.9)"/><rect x="847.2" y="594.5" width="2.2" height="0.9" fill="#34465c" transform="rotate(38 847.2 594.5)"/><rect x="847.5" y="608.2" width="2.2" height="0.9" fill="#34465c" transform="rotate(123 847.5 608.2)"/><rect x="877.7" y="610.9" width="2.2" height="0.9" fill="#34465c" transform="rotate(113 877.7 610.9)"/><rect x="864.5" y="659.0" width="2.2" height="0.9" fill="#34465c" transform="rotate(34 864.5 659.0)"/><rect x="851.7" y="566.1" width="2.2" height="0.9" fill="#34465c" transform="rotate(149 851.7 566.1)"/><rect x="861.6" y="669.8" width="2.2" height="0.9" fill="#34465c" transform="rotate(176 861.6 669.8)"/><rect x="862.5" y="647.9" width="2.2" height="0.9" fill="#34465c" transform="rotate(171 862.5 647.9)"/><rect x="869.2" y="596.3" width="2.2" height="0.9" fill="#34465c" transform="rotate(149 869.2 596.3)"/><rect x="864.4" y="575.7" width="2.2" height="0.9" fill="#34465c" transform="rotate(55 864.4 575.7)"/><rect x="853.3" y="575.8" width="2.2" height="0.9" fill="#34465c" transform="rotate(97 853.3 575.8)"/><rect x="849.0" y="618.4" width="2.2" height="0.9" fill="#34465c" transform="rotate(61 849.0 618.4)"/><rect x="853.9" y="647.2" width="2.2" height="0.9" fill="#34465c" transform="rotate(36 853.9 647.2)"/><rect x="857.7" y="636.4" width="2.2" height="0.9" fill="#34465c" transform="rotate(179 857.7 636.4)"/><rect x="865.0" y="604.0" width="2.2" height="0.9" fill="#34465c" transform="rotate(167 865.0 604.0)"/><rect x="863.3" y="605.9" width="2.2" height="0.9" fill="#34465c" transform="rotate(18 863.3 605.9)"/><rect x="875.3" y="594.4" width="2.2" height="0.9" fill="#34465c" transform="rotate(11 875.3 594.4)"/><rect x="859.7" y="570.4" width="2.2" height="0.9" fill="#34465c" transform="rotate(60 859.7 570.4)"/><rect x="866.9" y="647.6" width="2.2" height="0.9" fill="#34465c" transform="rotate(17 866.9 647.6)"/><rect x="879.3" y="658.4" width="2.2" height="0.9" fill="#34465c" transform="rotate(61 879.3 658.4)"/><rect x="876.6" y="647.4" width="2.2" height="0.9" fill="#34465c" transform="rotate(35 876.6 647.4)"/><rect x="848.5" y="637.4" width="2.2" height="0.9" fill="#34465c" transform="rotate(9 848.5 637.4)"/><rect x="877.0" y="574.0" width="2.2" height="0.9" fill="#34465c" transform="rotate(11 877.0 574.0)"/><rect x="853.5" y="597.7" width="2.2" height="0.9" fill="#34465c" transform="rotate(21 853.5 597.7)"/><rect x="845.7" y="575.2" width="2.2" height="0.9" fill="#34465c" transform="rotate(74 845.7 575.2)"/><rect x="842.4" y="601.8" width="2.2" height="0.9" fill="#34465c" transform="rotate(172 842.4 601.8)"/><rect x="854.5" y="542.1" width="2.2" height="0.9" fill="#34465c" transform="rotate(84 854.5 542.1)"/><rect x="858.4" y="606.5" width="2.2" height="0.9" fill="#34465c" transform="rotate(53 858.4 606.5)"/><rect x="866.8" y="642.7" width="2.2" height="0.9" fill="#34465c" transform="rotate(125 866.8 642.7)"/><rect x="856.6" y="614.8" width="2.2" height="0.9" fill="#34465c" transform="rotate(30 856.6 614.8)"/><rect x="876.3" y="548.8" width="2.2" height="0.9" fill="#34465c" transform="rotate(110 876.3 548.8)"/><rect x="845.5" y="663.1" width="2.2" height="0.9" fill="#34465c" transform="rotate(64 845.5 663.1)"/><rect x="844.9" y="670.7" width="2.2" height="0.9" fill="#34465c" transform="rotate(95 844.9 670.7)"/><rect x="868.1" y="589.9" width="2.2" height="0.9" fill="#34465c" transform="rotate(115 868.1 589.9)"/><rect x="852.8" y="633.3" width="2.2" height="0.9" fill="#34465c" transform="rotate(167 852.8 633.3)"/><rect x="878.8" y="653.2" width="2.2" height="0.9" fill="#34465c" transform="rotate(27 878.8 653.2)"/><rect x="871.2" y="673.5" width="2.2" height="0.9" fill="#34465c" transform="rotate(172 871.2 673.5)"/><rect x="863.6" y="612.1" width="2.2" height="0.9" fill="#34465c" transform="rotate(170 863.6 612.1)"/><rect x="860.8" y="587.7" width="2.2" height="0.9" fill="#34465c" transform="rotate(75 860.8 587.7)"/><rect x="868.1" y="617.9" width="2.2" height="0.9" fill="#34465c" transform="rotate(46 868.1 617.9)"/><rect x="866.8" y="641.0" width="2.2" height="0.9" fill="#34465c" transform="rotate(38 866.8 641.0)"/><rect x="848.2" y="663.5" width="2.2" height="0.9" fill="#34465c" transform="rotate(167 848.2 663.5)"/><rect x="859.2" y="553.3" width="2.2" height="0.9" fill="#34465c" transform="rotate(143 859.2 553.3)"/><rect x="846.7" y="584.7" width="2.2" height="0.9" fill="#34465c" transform="rotate(166 846.7 584.7)"/><rect x="864.9" y="616.2" width="2.2" height="0.9" fill="#34465c" transform="rotate(165 864.9 616.2)"/><rect x="848.5" y="606.0" width="2.2" height="0.9" fill="#34465c" transform="rotate(45 848.5 606.0)"/><rect x="869.2" y="553.1" width="2.2" height="0.9" fill="#34465c" transform="rotate(46 869.2 553.1)"/><rect x="871.2" y="614.6" width="2.2" height="0.9" fill="#34465c" transform="rotate(100 871.2 614.6)"/><rect x="855.4" y="575.5" width="2.2" height="0.9" fill="#34465c" transform="rotate(98 855.4 575.5)"/><rect x="843.1" y="557.2" width="2.2" height="0.9" fill="#34465c" transform="rotate(122 843.1 557.2)"/><rect x="861.2" y="572.9" width="2.2" height="0.9" fill="#34465c" transform="rotate(131 861.2 572.9)"/><rect x="855.2" y="584.9" width="2.2" height="0.9" fill="#34465c" transform="rotate(103 855.2 584.9)"/><rect x="858.9" y="652.1" width="2.2" height="0.9" fill="#34465c" transform="rotate(17 858.9 652.1)"/><rect x="855.1" y="657.4" width="2.2" height="0.9" fill="#34465c" transform="rotate(28 855.1 657.4)"/><rect x="847.1" y="621.2" width="2.2" height="0.9" fill="#34465c" transform="rotate(174 847.1 621.2)"/><rect x="845.5" y="647.8" width="2.2" height="0.9" fill="#34465c" transform="rotate(28 845.5 647.8)"/><rect x="848.4" y="564.7" width="2.2" height="0.9" fill="#34465c" transform="rotate(106 848.4 564.7)"/><rect x="867.8" y="593.2" width="2.2" height="0.9" fill="#34465c" transform="rotate(32 867.8 593.2)"/><rect x="864.7" y="558.7" width="2.2" height="0.9" fill="#34465c" transform="rotate(101 864.7 558.7)"/><rect x="872.9" y="614.8" width="2.2" height="0.9" fill="#34465c" transform="rotate(43 872.9 614.8)"/><rect x="863.7" y="566.5" width="2.2" height="0.9" fill="#34465c" transform="rotate(64 863.7 566.5)"/><rect x="855.8" y="579.3" width="2.2" height="0.9" fill="#34465c" transform="rotate(113 855.8 579.3)"/><rect x="876.6" y="671.9" width="2.2" height="0.9" fill="#34465c" transform="rotate(98 876.6 671.9)"/><rect x="853.6" y="665.8" width="2.2" height="0.9" fill="#34465c" transform="rotate(79 853.6 665.8)"/><rect x="866.3" y="675.8" width="2.2" height="0.9" fill="#34465c" transform="rotate(175 866.3 675.8)"/><rect x="869.3" y="664.3" width="2.2" height="0.9" fill="#34465c" transform="rotate(170 869.3 664.3)"/><rect x="860.4" y="622.8" width="2.2" height="0.9" fill="#34465c" transform="rotate(162 860.4 622.8)"/><rect x="841.1" y="646.6" width="2.2" height="0.9" fill="#34465c" transform="rotate(169 841.1 646.6)"/><rect x="850.4" y="562.4" width="2.2" height="0.9" fill="#34465c" transform="rotate(160 850.4 562.4)"/><rect x="859.4" y="565.3" width="2.2" height="0.9" fill="#34465c" transform="rotate(135 859.4 565.3)"/><rect x="849.5" y="652.6" width="2.2" height="0.9" fill="#34465c" transform="rotate(165 849.5 652.6)"/><rect x="878.9" y="553.7" width="2.2" height="0.9" fill="#34465c" transform="rotate(72 878.9 553.7)"/><rect x="879.4" y="663.8" width="2.2" height="0.9" fill="#34465c" transform="rotate(34 879.4 663.8)"/><rect x="859.7" y="550.5" width="2.2" height="0.9" fill="#34465c" transform="rotate(12 859.7 550.5)"/><rect x="842.0" y="625.2" width="2.2" height="0.9" fill="#34465c" transform="rotate(129 842.0 625.2)"/><rect x="844.1" y="614.0" width="2.2" height="0.9" fill="#34465c" transform="rotate(86 844.1 614.0)"/><rect x="853.9" y="660.7" width="2.2" height="0.9" fill="#34465c" transform="rotate(177 853.9 660.7)"/><rect x="868.7" y="549.4" width="2.2" height="0.9" fill="#34465c" transform="rotate(153 868.7 549.4)"/><rect x="872.0" y="542.8" width="2.2" height="0.9" fill="#34465c" transform="rotate(20 872.0 542.8)"/><rect x="870.6" y="586.4" width="2.2" height="0.9" fill="#34465c" transform="rotate(52 870.6 586.4)"/><rect x="878.3" y="659.5" width="2.2" height="0.9" fill="#34465c" transform="rotate(111 878.3 659.5)"/><rect x="869.0" y="569.1" width="2.2" height="0.9" fill="#34465c" transform="rotate(80 869.0 569.1)"/><rect x="845.4" y="544.0" width="2.2" height="0.9" fill="#34465c" transform="rotate(19 845.4 544.0)"/><rect x="874.8" y="637.5" width="2.2" height="0.9" fill="#34465c" transform="rotate(100 874.8 637.5)"/><rect x="860.9" y="636.6" width="2.2" height="0.9" fill="#34465c" transform="rotate(137 860.9 636.6)"/><rect x="875.1" y="567.4" width="2.2" height="0.9" fill="#34465c" transform="rotate(125 875.1 567.4)"/><rect x="853.2" y="603.5" width="2.2" height="0.9" fill="#34465c" transform="rotate(176 853.2 603.5)"/><rect x="857.1" y="563.5" width="2.2" height="0.9" fill="#34465c" transform="rotate(9 857.1 563.5)"/><rect x="869.8" y="589.7" width="2.2" height="0.9" fill="#34465c" transform="rotate(94 869.8 589.7)"/><rect x="858.9" y="589.0" width="2.2" height="0.9" fill="#34465c" transform="rotate(102 858.9 589.0)"/><rect x="850.0" y="538.4" width="2.2" height="0.9" fill="#34465c" transform="rotate(53 850.0 538.4)"/><rect x="851.3" y="590.1" width="2.2" height="0.9" fill="#34465c" transform="rotate(117 851.3 590.1)"/><rect x="862.4" y="560.4" width="2.2" height="0.9" fill="#34465c" transform="rotate(5 862.4 560.4)"/><rect x="847.8" y="594.9" width="2.2" height="0.9" fill="#34465c" transform="rotate(43 847.8 594.9)"/><rect x="866.5" y="557.6" width="2.2" height="0.9" fill="#34465c" transform="rotate(155 866.5 557.6)"/><rect x="847.7" y="607.1" width="2.2" height="0.9" fill="#34465c" transform="rotate(15 847.7 607.1)"/><rect x="874.7" y="594.8" width="2.2" height="0.9" fill="#34465c" transform="rotate(81 874.7 594.8)"/><rect x="857.3" y="637.2" width="2.2" height="0.9" fill="#34465c" transform="rotate(13 857.3 637.2)"/><rect x="850.6" y="543.5" width="2.2" height="0.9" fill="#34465c" transform="rotate(126 850.6 543.5)"/><rect x="842.1" y="674.1" width="2.2" height="0.9" fill="#34465c" transform="rotate(56 842.1 674.1)"/><rect x="850.7" y="592.9" width="2.2" height="0.9" fill="#34465c" transform="rotate(48 850.7 592.9)"/><rect x="847.6" y="625.8" width="2.2" height="0.9" fill="#34465c" transform="rotate(88 847.6 625.8)"/><rect x="877.5" y="621.8" width="2.2" height="0.9" fill="#34465c" transform="rotate(74 877.5 621.8)"/><rect x="852.0" y="649.1" width="2.2" height="0.9" fill="#34465c" transform="rotate(119 852.0 649.1)"/><rect x="872.6" y="673.6" width="2.2" height="0.9" fill="#34465c" transform="rotate(125 872.6 673.6)"/><rect x="851.0" y="575.5" width="2.2" height="0.9" fill="#34465c" transform="rotate(86 851.0 575.5)"/><rect x="866.2" y="586.6" width="2.2" height="0.9" fill="#34465c" transform="rotate(23 866.2 586.6)"/><rect x="843.3" y="599.4" width="2.2" height="0.9" fill="#34465c" transform="rotate(22 843.3 599.4)"/><rect x="864.7" y="538.5" width="2.2" height="0.9" fill="#34465c" transform="rotate(7 864.7 538.5)"/><rect x="868.2" y="540.7" width="2.2" height="0.9" fill="#34465c" transform="rotate(128 868.2 540.7)"/><rect x="842.5" y="545.6" width="2.2" height="0.9" fill="#34465c" transform="rotate(167 842.5 545.6)"/><rect x="861.4" y="584.7" width="2.2" height="0.9" fill="#34465c" transform="rotate(122 861.4 584.7)"/><rect x="854.6" y="605.5" width="2.2" height="0.9" fill="#34465c" transform="rotate(89 854.6 605.5)"/><rect x="878.6" y="542.8" width="2.2" height="0.9" fill="#34465c" transform="rotate(78 878.6 542.8)"/><rect x="871.1" y="627.0" width="2.2" height="0.9" fill="#34465c" transform="rotate(100 871.1 627.0)"/><rect x="844.5" y="579.4" width="2.2" height="0.9" fill="#34465c" transform="rotate(105 844.5 579.4)"/><rect x="845.6" y="593.0" width="2.2" height="0.9" fill="#34465c" transform="rotate(85 845.6 593.0)"/><rect x="862.5" y="647.7" width="2.2" height="0.9" fill="#34465c" transform="rotate(103 862.5 647.7)"/><rect x="848.0" y="642.3" width="2.2" height="0.9" fill="#34465c" transform="rotate(98 848.0 642.3)"/><rect x="874.4" y="616.0" width="2.2" height="0.9" fill="#34465c" transform="rotate(47 874.4 616.0)"/><rect x="855.5" y="596.5" width="2.2" height="0.9" fill="#34465c" transform="rotate(58 855.5 596.5)"/><rect x="858.8" y="637.1" width="2.2" height="0.9" fill="#34465c" transform="rotate(88 858.8 637.1)"/><rect x="851.8" y="561.9" width="2.2" height="0.9" fill="#34465c" transform="rotate(155 851.8 561.9)"/><rect x="877.6" y="636.3" width="2.2" height="0.9" fill="#34465c" transform="rotate(124 877.6 636.3)"/><rect x="842.7" y="562.2" width="2.2" height="0.9" fill="#34465c" transform="rotate(5 842.7 562.2)"/><rect x="873.9" y="551.0" width="2.2" height="0.9" fill="#34465c" transform="rotate(177 873.9 551.0)"/><rect x="868.1" y="551.7" width="2.2" height="0.9" fill="#34465c" transform="rotate(60 868.1 551.7)"/><rect x="865.0" y="651.0" width="2.2" height="0.9" fill="#34465c" transform="rotate(14 865.0 651.0)"/><rect x="876.1" y="661.0" width="2.2" height="0.9" fill="#34465c" transform="rotate(115 876.1 661.0)"/><rect x="859.7" y="660.5" width="2.2" height="0.9" fill="#34465c" transform="rotate(165 859.7 660.5)"/><rect x="854.3" y="590.2" width="2.2" height="0.9" fill="#34465c" transform="rotate(18 854.3 590.2)"/><rect x="848.8" y="648.9" width="2.2" height="0.9" fill="#34465c" transform="rotate(26 848.8 648.9)"/><rect x="854.5" y="581.9" width="2.2" height="0.9" fill="#34465c" transform="rotate(115 854.5 581.9)"/><rect x="844.2" y="629.5" width="2.2" height="0.9" fill="#34465c" transform="rotate(61 844.2 629.5)"/><rect x="868.5" y="675.8" width="2.2" height="0.9" fill="#34465c" transform="rotate(165 868.5 675.8)"/><rect x="846.7" y="676.9" width="2.2" height="0.9" fill="#34465c" transform="rotate(28 846.7 676.9)"/><rect x="850.2" y="674.4" width="2.2" height="0.9" fill="#34465c" transform="rotate(56 850.2 674.4)"/><rect x="875.0" y="610.7" width="2.2" height="0.9" fill="#34465c" transform="rotate(129 875.0 610.7)"/><rect x="872.2" y="623.2" width="2.2" height="0.9" fill="#34465c" transform="rotate(137 872.2 623.2)"/><rect x="872.3" y="603.9" width="2.2" height="0.9" fill="#34465c" transform="rotate(159 872.3 603.9)"/><rect x="844.2" y="654.4" width="2.2" height="0.9" fill="#34465c" transform="rotate(28 844.2 654.4)"/><rect x="864.9" y="659.1" width="2.2" height="0.9" fill="#34465c" transform="rotate(25 864.9 659.1)"/><rect x="849.0" y="664.0" width="2.2" height="0.9" fill="#34465c" transform="rotate(21 849.0 664.0)"/><rect x="845.4" y="594.3" width="2.2" height="0.9" fill="#34465c" transform="rotate(174 845.4 594.3)"/><rect x="865.6" y="628.5" width="2.2" height="0.9" fill="#34465c" transform="rotate(171 865.6 628.5)"/><rect x="875.9" y="586.8" width="2.2" height="0.9" fill="#34465c" transform="rotate(154 875.9 586.8)"/><rect x="867.4" y="647.7" width="2.2" height="0.9" fill="#34465c" transform="rotate(74 867.4 647.7)"/><rect x="874.4" y="621.8" width="2.2" height="0.9" fill="#34465c" transform="rotate(97 874.4 621.8)"/><rect x="849.2" y="614.0" width="2.2" height="0.9" fill="#34465c" transform="rotate(118 849.2 614.0)"/><rect x="853.0" y="628.6" width="2.2" height="0.9" fill="#34465c" transform="rotate(87 853.0 628.6)"/><rect x="854.8" y="606.3" width="2.2" height="0.9" fill="#34465c" transform="rotate(18 854.8 606.3)"/><rect x="878.0" y="634.8" width="2.2" height="0.9" fill="#34465c" transform="rotate(93 878.0 634.8)"/><rect x="857.9" y="629.4" width="2.2" height="0.9" fill="#34465c" transform="rotate(155 857.9 629.4)"/><rect x="861.7" y="573.2" width="2.2" height="0.9" fill="#34465c" transform="rotate(15 861.7 573.2)"/><rect x="854.4" y="598.7" width="2.2" height="0.9" fill="#34465c" transform="rotate(21 854.4 598.7)"/><rect x="851.0" y="583.6" width="2.2" height="0.9" fill="#34465c" transform="rotate(52 851.0 583.6)"/><rect x="870.1" y="661.3" width="2.2" height="0.9" fill="#34465c" transform="rotate(156 870.1 661.3)"/><rect x="859.5" y="638.3" width="2.2" height="0.9" fill="#34465c" transform="rotate(107 859.5 638.3)"/><rect x="855.7" y="565.0" width="2.2" height="0.9" fill="#34465c" transform="rotate(159 855.7 565.0)"/><rect x="879.0" y="606.3" width="2.2" height="0.9" fill="#34465c" transform="rotate(104 879.0 606.3)"/><rect x="859.8" y="620.8" width="2.2" height="0.9" fill="#34465c" transform="rotate(8 859.8 620.8)"/><rect x="852.7" y="669.7" width="2.2" height="0.9" fill="#34465c" transform="rotate(47 852.7 669.7)"/><rect x="876.7" y="542.0" width="2.2" height="0.9" fill="#34465c" transform="rotate(38 876.7 542.0)"/><rect x="852.8" y="611.2" width="2.2" height="0.9" fill="#34465c" transform="rotate(163 852.8 611.2)"/><rect x="859.9" y="565.5" width="2.2" height="0.9" fill="#34465c" transform="rotate(53 859.9 565.5)"/><rect x="852.0" y="599.0" width="2.2" height="0.9" fill="#34465c" transform="rotate(88 852.0 599.0)"/><rect x="859.7" y="565.7" width="2.2" height="0.9" fill="#34465c" transform="rotate(73 859.7 565.7)"/><rect x="846.7" y="600.6" width="2.2" height="0.9" fill="#34465c" transform="rotate(105 846.7 600.6)"/><rect x="858.8" y="567.0" width="2.2" height="0.9" fill="#34465c" transform="rotate(124 858.8 567.0)"/><rect x="871.5" y="636.8" width="2.2" height="0.9" fill="#34465c" transform="rotate(96 871.5 636.8)"/><rect x="880.2" y="661.5" width="2.2" height="0.9" fill="#34465c" transform="rotate(95 880.2 661.5)"/><rect x="878.7" y="598.8" width="2.2" height="0.9" fill="#34465c" transform="rotate(118 878.7 598.8)"/><rect x="860.0" y="678.8" width="2.2" height="0.9" fill="#34465c" transform="rotate(56 860.0 678.8)"/><rect x="855.4" y="658.2" width="2.2" height="0.9" fill="#34465c" transform="rotate(73 855.4 658.2)"/><rect x="842.2" y="590.7" width="2.2" height="0.9" fill="#34465c" transform="rotate(91 842.2 590.7)"/><rect x="873.3" y="579.9" width="2.2" height="0.9" fill="#34465c" transform="rotate(62 873.3 579.9)"/><rect x="878.2" y="611.3" width="2.2" height="0.9" fill="#34465c" transform="rotate(3 878.2 611.3)"/><rect x="846.3" y="612.9" width="2.2" height="0.9" fill="#34465c" transform="rotate(137 846.3 612.9)"/><rect x="841.8" y="672.0" width="2.2" height="0.9" fill="#34465c" transform="rotate(0 841.8 672.0)"/><rect x="849.2" y="646.6" width="2.2" height="0.9" fill="#34465c" transform="rotate(119 849.2 646.6)"/><rect x="855.2" y="674.2" width="2.2" height="0.9" fill="#34465c" transform="rotate(92 855.2 674.2)"/><rect x="880.2" y="543.0" width="2.2" height="0.9" fill="#34465c" transform="rotate(47 880.2 543.0)"/><rect x="850.5" y="577.0" width="2.2" height="0.9" fill="#34465c" transform="rotate(86 850.5 577.0)"/><rect x="874.4" y="623.1" width="2.2" height="0.9" fill="#34465c" transform="rotate(24 874.4 623.1)"/><rect x="859.0" y="574.9" width="2.2" height="0.9" fill="#34465c" transform="rotate(172 859.0 574.9)"/><rect x="873.1" y="597.0" width="2.2" height="0.9" fill="#34465c" transform="rotate(66 873.1 597.0)"/><rect x="854.6" y="542.1" width="2.2" height="0.9" fill="#34465c" transform="rotate(9 854.6 542.1)"/><rect x="866.1" y="633.2" width="2.2" height="0.9" fill="#34465c" transform="rotate(144 866.1 633.2)"/><rect x="850.9" y="557.1" width="2.2" height="0.9" fill="#34465c" transform="rotate(105 850.9 557.1)"/><rect x="861.4" y="655.2" width="2.2" height="0.9" fill="#34465c" transform="rotate(141 861.4 655.2)"/><rect x="846.3" y="540.3" width="2.2" height="0.9" fill="#34465c" transform="rotate(11 846.3 540.3)"/><rect x="841.7" y="628.7" width="2.2" height="0.9" fill="#34465c" transform="rotate(117 841.7 628.7)"/><rect x="859.7" y="631.8" width="2.2" height="0.9" fill="#34465c" transform="rotate(154 859.7 631.8)"/><rect x="861.6" y="590.3" width="2.2" height="0.9" fill="#34465c" transform="rotate(161 861.6 590.3)"/><rect x="847.8" y="563.8" width="2.2" height="0.9" fill="#34465c" transform="rotate(175 847.8 563.8)"/><rect x="846.6" y="655.3" width="2.2" height="0.9" fill="#34465c" transform="rotate(26 846.6 655.3)"/><rect x="857.3" y="587.6" width="2.2" height="0.9" fill="#34465c" transform="rotate(116 857.3 587.6)"/><rect x="852.1" y="574.0" width="2.2" height="0.9" fill="#34465c" transform="rotate(72 852.1 574.0)"/><rect x="879.4" y="559.9" width="2.2" height="0.9" fill="#34465c" transform="rotate(80 879.4 559.9)"/><rect x="846.6" y="543.3" width="2.2" height="0.9" fill="#34465c" transform="rotate(124 846.6 543.3)"/><rect x="875.0" y="654.7" width="2.2" height="0.9" fill="#34465c" transform="rotate(149 875.0 654.7)"/><rect x="865.5" y="542.3" width="2.2" height="0.9" fill="#34465c" transform="rotate(147 865.5 542.3)"/><rect x="864.9" y="554.4" width="2.2" height="0.9" fill="#34465c" transform="rotate(32 864.9 554.4)"/><rect x="852.2" y="638.0" width="2.2" height="0.9" fill="#34465c" transform="rotate(68 852.2 638.0)"/><rect x="845.1" y="632.3" width="2.2" height="0.9" fill="#34465c" transform="rotate(95 845.1 632.3)"/><rect x="842.3" y="606.7" width="2.2" height="0.9" fill="#34465c" transform="rotate(164 842.3 606.7)"/><rect x="858.9" y="581.9" width="2.2" height="0.9" fill="#34465c" transform="rotate(88 858.9 581.9)"/><rect x="848.2" y="592.0" width="2.2" height="0.9" fill="#34465c" transform="rotate(101 848.2 592.0)"/><rect x="853.6" y="576.2" width="2.2" height="0.9" fill="#34465c" transform="rotate(9 853.6 576.2)"/><rect x="878.8" y="582.8" width="2.2" height="0.9" fill="#34465c" transform="rotate(100 878.8 582.8)"/><rect x="863.2" y="543.0" width="2.2" height="0.9" fill="#34465c" transform="rotate(106 863.2 543.0)"/><rect x="851.0" y="676.2" width="2.2" height="0.9" fill="#34465c" transform="rotate(20 851.0 676.2)"/><rect x="860.8" y="672.9" width="2.2" height="0.9" fill="#34465c" transform="rotate(20 860.8 672.9)"/><rect x="868.9" y="554.2" width="2.2" height="0.9" fill="#34465c" transform="rotate(161 868.9 554.2)"/><rect x="874.5" y="627.0" width="2.2" height="0.9" fill="#34465c" transform="rotate(1 874.5 627.0)"/><rect x="878.7" y="675.4" width="2.2" height="0.9" fill="#34465c" transform="rotate(177 878.7 675.4)"/><rect x="843.8" y="575.7" width="2.2" height="0.9" fill="#34465c" transform="rotate(123 843.8 575.7)"/><rect x="859.5" y="578.8" width="2.2" height="0.9" fill="#34465c" transform="rotate(143 859.5 578.8)"/><rect x="842.9" y="571.3" width="2.2" height="0.9" fill="#34465c" transform="rotate(43 842.9 571.3)"/><rect x="846.8" y="665.7" width="2.2" height="0.9" fill="#34465c" transform="rotate(45 846.8 665.7)"/><rect x="868.6" y="603.9" width="2.2" height="0.9" fill="#34465c" transform="rotate(101 868.6 603.9)"/><rect x="866.9" y="558.1" width="2.2" height="0.9" fill="#34465c" transform="rotate(13 866.9 558.1)"/><rect x="848.2" y="626.4" width="2.2" height="0.9" fill="#34465c" transform="rotate(79 848.2 626.4)"/><rect x="848.6" y="654.0" width="2.2" height="0.9" fill="#34465c" transform="rotate(37 848.6 654.0)"/><rect x="843.0" y="673.5" width="2.2" height="0.9" fill="#34465c" transform="rotate(136 843.0 673.5)"/><rect x="849.6" y="647.8" width="2.2" height="0.9" fill="#34465c" transform="rotate(110 849.6 647.8)"/><rect x="856.6" y="677.2" width="2.2" height="0.9" fill="#34465c" transform="rotate(71 856.6 677.2)"/><rect x="845.2" y="554.2" width="2.2" height="0.9" fill="#34465c" transform="rotate(75 845.2 554.2)"/><rect x="846.1" y="587.7" width="2.2" height="0.9" fill="#34465c" transform="rotate(154 846.1 587.7)"/><rect x="844.1" y="565.1" width="2.2" height="0.9" fill="#34465c" transform="rotate(94 844.1 565.1)"/><rect x="880.9" y="676.2" width="2.2" height="0.9" fill="#34465c" transform="rotate(62 880.9 676.2)"/><rect x="843.6" y="615.0" width="2.2" height="0.9" fill="#34465c" transform="rotate(124 843.6 615.0)"/><rect x="845.2" y="657.4" width="2.2" height="0.9" fill="#34465c" transform="rotate(121 845.2 657.4)"/><rect x="841.9" y="586.7" width="2.2" height="0.9" fill="#34465c" transform="rotate(113 841.9 586.7)"/><rect x="863.8" y="603.4" width="2.2" height="0.9" fill="#34465c" transform="rotate(137 863.8 603.4)"/><rect x="853.2" y="559.0" width="2.2" height="0.9" fill="#34465c" transform="rotate(116 853.2 559.0)"/><rect x="874.3" y="566.3" width="2.2" height="0.9" fill="#34465c" transform="rotate(152 874.3 566.3)"/><rect x="852.8" y="643.7" width="2.2" height="0.9" fill="#34465c" transform="rotate(45 852.8 643.7)"/><rect x="853.0" y="659.1" width="2.2" height="0.9" fill="#34465c" transform="rotate(42 853.0 659.1)"/><rect x="853.7" y="656.4" width="2.2" height="0.9" fill="#34465c" transform="rotate(33 853.7 656.4)"/><rect x="843.1" y="676.0" width="2.2" height="0.9" fill="#34465c" transform="rotate(104 843.1 676.0)"/><rect x="865.6" y="563.1" width="2.2" height="0.9" fill="#34465c" transform="rotate(146 865.6 563.1)"/><rect x="841.6" y="660.6" width="2.2" height="0.9" fill="#34465c" transform="rotate(103 841.6 660.6)"/><rect x="880.7" y="634.7" width="2.2" height="0.9" fill="#34465c" transform="rotate(134 880.7 634.7)"/><rect x="868.9" y="576.8" width="2.2" height="0.9" fill="#34465c" transform="rotate(118 868.9 576.8)"/><rect x="862.6" y="600.2" width="2.2" height="0.9" fill="#34465c" transform="rotate(37 862.6 600.2)"/><rect x="864.6" y="568.8" width="2.2" height="0.9" fill="#34465c" transform="rotate(116 864.6 568.8)"/><rect x="861.3" y="590.7" width="2.2" height="0.9" fill="#34465c" transform="rotate(81 861.3 590.7)"/><rect x="864.6" y="637.1" width="2.2" height="0.9" fill="#34465c" transform="rotate(88 864.6 637.1)"/><rect x="875.5" y="655.8" width="2.2" height="0.9" fill="#34465c" transform="rotate(73 875.5 655.8)"/><rect x="880.0" y="580.0" width="2.2" height="0.9" fill="#34465c" transform="rotate(46 880.0 580.0)"/><rect x="845.9" y="608.6" width="2.2" height="0.9" fill="#34465c" transform="rotate(87 845.9 608.6)"/><rect x="870.2" y="573.1" width="2.2" height="0.9" fill="#34465c" transform="rotate(111 870.2 573.1)"/><rect x="879.7" y="601.9" width="2.2" height="0.9" fill="#34465c" transform="rotate(122 879.7 601.9)"/><rect x="854.4" y="649.2" width="2.2" height="0.9" fill="#34465c" transform="rotate(45 854.4 649.2)"/><rect x="880.5" y="612.5" width="2.2" height="0.9" fill="#34465c" transform="rotate(113 880.5 612.5)"/><rect x="880.8" y="545.3" width="2.2" height="0.9" fill="#34465c" transform="rotate(106 880.8 545.3)"/><rect x="858.0" y="657.5" width="2.2" height="0.9" fill="#34465c" transform="rotate(74 858.0 657.5)"/><rect x="843.4" y="658.5" width="2.2" height="0.9" fill="#34465c" transform="rotate(98 843.4 658.5)"/><rect x="849.4" y="548.5" width="2.2" height="0.9" fill="#34465c" transform="rotate(131 849.4 548.5)"/><rect x="849.6" y="615.4" width="2.2" height="0.9" fill="#34465c" transform="rotate(30 849.6 615.4)"/><rect x="858.2" y="660.3" width="2.2" height="0.9" fill="#34465c" transform="rotate(143 858.2 660.3)"/><rect x="855.5" y="580.4" width="2.2" height="0.9" fill="#34465c" transform="rotate(129 855.5 580.4)"/><rect x="855.8" y="599.9" width="2.2" height="0.9" fill="#34465c" transform="rotate(166 855.8 599.9)"/><rect x="868.4" y="552.7" width="2.2" height="0.9" fill="#34465c" transform="rotate(126 868.4 552.7)"/><rect x="846.8" y="569.0" width="2.2" height="0.9" fill="#34465c" transform="rotate(94 846.8 569.0)"/><rect x="843.6" y="538.0" width="2.2" height="0.9" fill="#34465c" transform="rotate(20 843.6 538.0)"/><rect x="849.4" y="599.4" width="2.2" height="0.9" fill="#34465c" transform="rotate(50 849.4 599.4)"/><rect x="842.2" y="614.0" width="2.2" height="0.9" fill="#34465c" transform="rotate(80 842.2 614.0)"/><rect x="862.4" y="642.0" width="2.2" height="0.9" fill="#34465c" transform="rotate(54 862.4 642.0)"/><rect x="858.7" y="634.2" width="2.2" height="0.9" fill="#34465c" transform="rotate(30 858.7 634.2)"/><rect x="861.4" y="668.8" width="2.2" height="0.9" fill="#34465c" transform="rotate(57 861.4 668.8)"/><rect x="860.0" y="663.5" width="2.2" height="0.9" fill="#34465c" transform="rotate(73 860.0 663.5)"/><rect x="863.1" y="554.5" width="2.2" height="0.9" fill="#34465c" transform="rotate(44 863.1 554.5)"/><rect x="865.0" y="550.0" width="2.2" height="0.9" fill="#34465c" transform="rotate(7 865.0 550.0)"/><rect x="872.8" y="592.0" width="2.2" height="0.9" fill="#34465c" transform="rotate(125 872.8 592.0)"/><rect x="874.3" y="563.9" width="2.2" height="0.9" fill="#34465c" transform="rotate(70 874.3 563.9)"/><rect x="846.6" y="566.7" width="2.2" height="0.9" fill="#34465c" transform="rotate(162 846.6 566.7)"/><rect x="858.3" y="626.6" width="2.2" height="0.9" fill="#34465c" transform="rotate(168 858.3 626.6)"/><rect x="852.9" y="578.5" width="2.2" height="0.9" fill="#34465c" transform="rotate(163 852.9 578.5)"/><rect x="880.2" y="635.5" width="2.2" height="0.9" fill="#34465c" transform="rotate(21 880.2 635.5)"/><rect x="843.6" y="661.7" width="2.2" height="0.9" fill="#34465c" transform="rotate(82 843.6 661.7)"/><rect x="843.6" y="539.3" width="2.2" height="0.9" fill="#34465c" transform="rotate(122 843.6 539.3)"/><rect x="877.5" y="627.0" width="2.2" height="0.9" fill="#34465c" transform="rotate(24 877.5 627.0)"/><rect x="874.1" y="584.8" width="2.2" height="0.9" fill="#34465c" transform="rotate(107 874.1 584.8)"/><rect x="876.3" y="569.9" width="2.2" height="0.9" fill="#34465c" transform="rotate(82 876.3 569.9)"/><rect x="849.1" y="593.3" width="2.2" height="0.9" fill="#34465c" transform="rotate(22 849.1 593.3)"/><rect x="843.1" y="611.0" width="2.2" height="0.9" fill="#34465c" transform="rotate(130 843.1 611.0)"/><rect x="861.9" y="618.9" width="2.2" height="0.9" fill="#34465c" transform="rotate(21 861.9 618.9)"/><rect x="848.2" y="653.7" width="2.2" height="0.9" fill="#34465c" transform="rotate(137 848.2 653.7)"/><rect x="856.8" y="586.5" width="2.2" height="0.9" fill="#34465c" transform="rotate(116 856.8 586.5)"/><rect x="867.5" y="612.5" width="2.2" height="0.9" fill="#34465c" transform="rotate(51 867.5 612.5)"/><rect x="1006.5" y="606.0" width="2.2" height="0.9" fill="#34465c" transform="rotate(150 1006.5 606.0)"/><rect x="994.6" y="626.4" width="2.2" height="0.9" fill="#34465c" transform="rotate(158 994.6 626.4)"/><rect x="1005.0" y="603.0" width="2.2" height="0.9" fill="#34465c" transform="rotate(149 1005.0 603.0)"/><rect x="1014.2" y="648.7" width="2.2" height="0.9" fill="#34465c" transform="rotate(52 1014.2 648.7)"/><rect x="1003.1" y="646.9" width="2.2" height="0.9" fill="#34465c" transform="rotate(79 1003.1 646.9)"/><rect x="1008.0" y="622.3" width="2.2" height="0.9" fill="#34465c" transform="rotate(55 1008.0 622.3)"/><rect x="996.0" y="580.2" width="2.2" height="0.9" fill="#34465c" transform="rotate(116 996.0 580.2)"/><rect x="994.2" y="667.7" width="2.2" height="0.9" fill="#34465c" transform="rotate(101 994.2 667.7)"/><rect x="1013.7" y="603.1" width="2.2" height="0.9" fill="#34465c" transform="rotate(9 1013.7 603.1)"/><rect x="999.8" y="595.7" width="2.2" height="0.9" fill="#34465c" transform="rotate(174 999.8 595.7)"/><rect x="1013.5" y="575.2" width="2.2" height="0.9" fill="#34465c" transform="rotate(102 1013.5 575.2)"/><rect x="1000.9" y="593.1" width="2.2" height="0.9" fill="#34465c" transform="rotate(72 1000.9 593.1)"/><rect x="997.8" y="597.4" width="2.2" height="0.9" fill="#34465c" transform="rotate(177 997.8 597.4)"/><rect x="1017.1" y="648.1" width="2.2" height="0.9" fill="#34465c" transform="rotate(53 1017.1 648.1)"/><rect x="997.0" y="616.8" width="2.2" height="0.9" fill="#34465c" transform="rotate(144 997.0 616.8)"/><rect x="995.5" y="621.2" width="2.2" height="0.9" fill="#34465c" transform="rotate(53 995.5 621.2)"/><rect x="996.8" y="641.4" width="2.2" height="0.9" fill="#34465c" transform="rotate(155 996.8 641.4)"/><rect x="997.3" y="642.9" width="2.2" height="0.9" fill="#34465c" transform="rotate(135 997.3 642.9)"/><rect x="1001.6" y="627.3" width="2.2" height="0.9" fill="#34465c" transform="rotate(153 1001.6 627.3)"/><rect x="995.8" y="601.6" width="2.2" height="0.9" fill="#34465c" transform="rotate(95 995.8 601.6)"/><rect x="992.5" y="654.0" width="2.2" height="0.9" fill="#34465c" transform="rotate(117 992.5 654.0)"/><rect x="1004.2" y="631.5" width="2.2" height="0.9" fill="#34465c" transform="rotate(68 1004.2 631.5)"/><rect x="1005.0" y="614.3" width="2.2" height="0.9" fill="#34465c" transform="rotate(126 1005.0 614.3)"/><rect x="997.0" y="657.3" width="2.2" height="0.9" fill="#34465c" transform="rotate(124 997.0 657.3)"/><rect x="1000.3" y="676.5" width="2.2" height="0.9" fill="#34465c" transform="rotate(123 1000.3 676.5)"/><rect x="1011.5" y="581.4" width="2.2" height="0.9" fill="#34465c" transform="rotate(107 1011.5 581.4)"/><rect x="1000.1" y="648.1" width="2.2" height="0.9" fill="#34465c" transform="rotate(149 1000.1 648.1)"/><rect x="999.7" y="606.7" width="2.2" height="0.9" fill="#34465c" transform="rotate(37 999.7 606.7)"/><rect x="1014.0" y="620.6" width="2.2" height="0.9" fill="#34465c" transform="rotate(138 1014.0 620.6)"/><rect x="995.1" y="668.6" width="2.2" height="0.9" fill="#34465c" transform="rotate(95 995.1 668.6)"/><rect x="1004.3" y="631.9" width="2.2" height="0.9" fill="#34465c" transform="rotate(162 1004.3 631.9)"/><rect x="996.5" y="579.1" width="2.2" height="0.9" fill="#34465c" transform="rotate(141 996.5 579.1)"/><rect x="1007.0" y="632.1" width="2.2" height="0.9" fill="#34465c" transform="rotate(173 1007.0 632.1)"/><rect x="1014.9" y="627.5" width="2.2" height="0.9" fill="#34465c" transform="rotate(105 1014.9 627.5)"/><rect x="1013.6" y="649.8" width="2.2" height="0.9" fill="#34465c" transform="rotate(74 1013.6 649.8)"/><rect x="1015.9" y="614.7" width="2.2" height="0.9" fill="#34465c" transform="rotate(143 1015.9 614.7)"/><rect x="1010.8" y="606.9" width="2.2" height="0.9" fill="#34465c" transform="rotate(122 1010.8 606.9)"/><rect x="1001.0" y="588.6" width="2.2" height="0.9" fill="#34465c" transform="rotate(75 1001.0 588.6)"/><rect x="1009.8" y="629.8" width="2.2" height="0.9" fill="#34465c" transform="rotate(98 1009.8 629.8)"/><rect x="1010.3" y="604.0" width="2.2" height="0.9" fill="#34465c" transform="rotate(41 1010.3 604.0)"/><rect x="999.6" y="647.3" width="2.2" height="0.9" fill="#34465c" transform="rotate(44 999.6 647.3)"/><rect x="1005.6" y="619.3" width="2.2" height="0.9" fill="#34465c" transform="rotate(104 1005.6 619.3)"/><rect x="1005.9" y="608.5" width="2.2" height="0.9" fill="#34465c" transform="rotate(14 1005.9 608.5)"/><rect x="1007.4" y="644.8" width="2.2" height="0.9" fill="#34465c" transform="rotate(42 1007.4 644.8)"/><rect x="1004.6" y="587.1" width="2.2" height="0.9" fill="#34465c" transform="rotate(25 1004.6 587.1)"/><rect x="1005.9" y="581.7" width="2.2" height="0.9" fill="#34465c" transform="rotate(99 1005.9 581.7)"/><rect x="1014.5" y="624.7" width="2.2" height="0.9" fill="#34465c" transform="rotate(101 1014.5 624.7)"/><rect x="998.4" y="620.8" width="2.2" height="0.9" fill="#34465c" transform="rotate(175 998.4 620.8)"/><rect x="999.5" y="670.7" width="2.2" height="0.9" fill="#34465c" transform="rotate(30 999.5 670.7)"/><rect x="996.7" y="580.9" width="2.2" height="0.9" fill="#34465c" transform="rotate(95 996.7 580.9)"/><rect x="1002.7" y="597.3" width="2.2" height="0.9" fill="#34465c" transform="rotate(174 1002.7 597.3)"/><rect x="996.0" y="630.7" width="2.2" height="0.9" fill="#34465c" transform="rotate(130 996.0 630.7)"/><rect x="1016.6" y="641.0" width="2.2" height="0.9" fill="#34465c" transform="rotate(63 1016.6 641.0)"/><rect x="1017.6" y="654.4" width="2.2" height="0.9" fill="#34465c" transform="rotate(87 1017.6 654.4)"/><rect x="1015.4" y="579.6" width="2.2" height="0.9" fill="#34465c" transform="rotate(180 1015.4 579.6)"/><rect x="994.7" y="578.0" width="2.2" height="0.9" fill="#34465c" transform="rotate(117 994.7 578.0)"/><rect x="1000.0" y="581.4" width="2.2" height="0.9" fill="#34465c" transform="rotate(36 1000.0 581.4)"/><rect x="995.5" y="641.1" width="2.2" height="0.9" fill="#34465c" transform="rotate(68 995.5 641.1)"/><rect x="1017.9" y="583.4" width="2.2" height="0.9" fill="#34465c" transform="rotate(112 1017.9 583.4)"/><rect x="1011.1" y="623.4" width="2.2" height="0.9" fill="#34465c" transform="rotate(175 1011.1 623.4)"/><rect x="1006.5" y="674.6" width="2.2" height="0.9" fill="#34465c" transform="rotate(110 1006.5 674.6)"/><rect x="998.0" y="627.8" width="2.2" height="0.9" fill="#34465c" transform="rotate(149 998.0 627.8)"/><rect x="1015.3" y="585.6" width="2.2" height="0.9" fill="#34465c" transform="rotate(8 1015.3 585.6)"/><rect x="995.6" y="638.2" width="2.2" height="0.9" fill="#34465c" transform="rotate(54 995.6 638.2)"/><rect x="1012.4" y="583.2" width="2.2" height="0.9" fill="#34465c" transform="rotate(53 1012.4 583.2)"/><rect x="1013.9" y="647.6" width="2.2" height="0.9" fill="#34465c" transform="rotate(95 1013.9 647.6)"/><rect x="997.9" y="636.8" width="2.2" height="0.9" fill="#34465c" transform="rotate(144 997.9 636.8)"/><rect x="1011.1" y="668.5" width="2.2" height="0.9" fill="#34465c" transform="rotate(51 1011.1 668.5)"/><rect x="994.2" y="592.5" width="2.2" height="0.9" fill="#34465c" transform="rotate(18 994.2 592.5)"/><rect x="1004.1" y="648.8" width="2.2" height="0.9" fill="#34465c" transform="rotate(38 1004.1 648.8)"/><rect x="994.2" y="605.4" width="2.2" height="0.9" fill="#34465c" transform="rotate(154 994.2 605.4)"/><rect x="1010.7" y="597.0" width="2.2" height="0.9" fill="#34465c" transform="rotate(22 1010.7 597.0)"/><rect x="1007.9" y="664.5" width="2.2" height="0.9" fill="#34465c" transform="rotate(35 1007.9 664.5)"/><rect x="993.6" y="644.4" width="2.2" height="0.9" fill="#34465c" transform="rotate(161 993.6 644.4)"/><rect x="1012.2" y="611.2" width="2.2" height="0.9" fill="#34465c" transform="rotate(116 1012.2 611.2)"/><rect x="1005.9" y="640.6" width="2.2" height="0.9" fill="#34465c" transform="rotate(113 1005.9 640.6)"/><rect x="998.1" y="644.7" width="2.2" height="0.9" fill="#34465c" transform="rotate(0 998.1 644.7)"/><rect x="992.9" y="642.7" width="2.2" height="0.9" fill="#34465c" transform="rotate(106 992.9 642.7)"/><rect x="995.6" y="572.5" width="2.2" height="0.9" fill="#34465c" transform="rotate(132 995.6 572.5)"/><rect x="1010.6" y="659.1" width="2.2" height="0.9" fill="#34465c" transform="rotate(92 1010.6 659.1)"/><rect x="993.7" y="655.6" width="2.2" height="0.9" fill="#34465c" transform="rotate(99 993.7 655.6)"/><rect x="991.3" y="626.8" width="2.2" height="0.9" fill="#34465c" transform="rotate(170 991.3 626.8)"/><rect x="1010.5" y="636.7" width="2.2" height="0.9" fill="#34465c" transform="rotate(112 1010.5 636.7)"/><rect x="1003.2" y="655.4" width="2.2" height="0.9" fill="#34465c" transform="rotate(88 1003.2 655.4)"/><rect x="996.8" y="586.0" width="2.2" height="0.9" fill="#34465c" transform="rotate(100 996.8 586.0)"/><rect x="993.6" y="603.1" width="2.2" height="0.9" fill="#34465c" transform="rotate(146 993.6 603.1)"/><rect x="994.1" y="641.0" width="2.2" height="0.9" fill="#34465c" transform="rotate(62 994.1 641.0)"/><rect x="998.8" y="571.7" width="2.2" height="0.9" fill="#34465c" transform="rotate(6 998.8 571.7)"/><rect x="1006.9" y="593.1" width="2.2" height="0.9" fill="#34465c" transform="rotate(116 1006.9 593.1)"/><rect x="1006.4" y="597.7" width="2.2" height="0.9" fill="#34465c" transform="rotate(153 1006.4 597.7)"/><rect x="1001.3" y="666.0" width="2.2" height="0.9" fill="#34465c" transform="rotate(53 1001.3 666.0)"/><rect x="1005.1" y="615.1" width="2.2" height="0.9" fill="#34465c" transform="rotate(78 1005.1 615.1)"/><rect x="1012.6" y="588.2" width="2.2" height="0.9" fill="#34465c" transform="rotate(115 1012.6 588.2)"/><rect x="1004.5" y="579.8" width="2.2" height="0.9" fill="#34465c" transform="rotate(148 1004.5 579.8)"/><rect x="1016.3" y="585.0" width="2.2" height="0.9" fill="#34465c" transform="rotate(132 1016.3 585.0)"/><rect x="994.4" y="676.9" width="2.2" height="0.9" fill="#34465c" transform="rotate(43 994.4 676.9)"/><rect x="997.1" y="625.8" width="2.2" height="0.9" fill="#34465c" transform="rotate(75 997.1 625.8)"/><rect x="994.3" y="622.9" width="2.2" height="0.9" fill="#34465c" transform="rotate(122 994.3 622.9)"/><rect x="1012.7" y="649.0" width="2.2" height="0.9" fill="#34465c" transform="rotate(106 1012.7 649.0)"/><rect x="991.5" y="571.5" width="2.2" height="0.9" fill="#34465c" transform="rotate(159 991.5 571.5)"/><rect x="991.1" y="645.5" width="2.2" height="0.9" fill="#34465c" transform="rotate(122 991.1 645.5)"/><rect x="1015.5" y="574.2" width="2.2" height="0.9" fill="#34465c" transform="rotate(172 1015.5 574.2)"/><rect x="999.0" y="657.2" width="2.2" height="0.9" fill="#34465c" transform="rotate(125 999.0 657.2)"/><rect x="999.1" y="601.9" width="2.2" height="0.9" fill="#34465c" transform="rotate(33 999.1 601.9)"/><rect x="999.3" y="629.8" width="2.2" height="0.9" fill="#34465c" transform="rotate(103 999.3 629.8)"/><rect x="1017.0" y="573.7" width="2.2" height="0.9" fill="#34465c" transform="rotate(174 1017.0 573.7)"/><rect x="996.2" y="578.0" width="2.2" height="0.9" fill="#34465c" transform="rotate(100 996.2 578.0)"/><rect x="1005.3" y="652.0" width="2.2" height="0.9" fill="#34465c" transform="rotate(130 1005.3 652.0)"/><rect x="994.8" y="586.8" width="2.2" height="0.9" fill="#34465c" transform="rotate(172 994.8 586.8)"/><rect x="999.1" y="661.3" width="2.2" height="0.9" fill="#34465c" transform="rotate(130 999.1 661.3)"/><rect x="991.2" y="576.4" width="2.2" height="0.9" fill="#34465c" transform="rotate(173 991.2 576.4)"/><rect x="1004.5" y="578.3" width="2.2" height="0.9" fill="#34465c" transform="rotate(170 1004.5 578.3)"/><rect x="1010.2" y="629.5" width="2.2" height="0.9" fill="#34465c" transform="rotate(100 1010.2 629.5)"/><rect x="1002.7" y="606.1" width="2.2" height="0.9" fill="#34465c" transform="rotate(7 1002.7 606.1)"/><rect x="999.7" y="621.0" width="2.2" height="0.9" fill="#34465c" transform="rotate(162 999.7 621.0)"/><rect x="998.0" y="620.1" width="2.2" height="0.9" fill="#34465c" transform="rotate(65 998.0 620.1)"/><rect x="996.6" y="579.5" width="2.2" height="0.9" fill="#34465c" transform="rotate(67 996.6 579.5)"/><rect x="1011.1" y="672.3" width="2.2" height="0.9" fill="#34465c" transform="rotate(122 1011.1 672.3)"/><rect x="1011.3" y="646.7" width="2.2" height="0.9" fill="#34465c" transform="rotate(153 1011.3 646.7)"/><rect x="992.6" y="594.9" width="2.2" height="0.9" fill="#34465c" transform="rotate(149 992.6 594.9)"/><rect x="992.3" y="612.4" width="2.2" height="0.9" fill="#34465c" transform="rotate(98 992.3 612.4)"/><rect x="995.9" y="579.6" width="2.2" height="0.9" fill="#34465c" transform="rotate(45 995.9 579.6)"/><rect x="1015.7" y="617.8" width="2.2" height="0.9" fill="#34465c" transform="rotate(110 1015.7 617.8)"/><rect x="1014.9" y="630.0" width="2.2" height="0.9" fill="#34465c" transform="rotate(87 1014.9 630.0)"/><rect x="1001.2" y="657.5" width="2.2" height="0.9" fill="#34465c" transform="rotate(93 1001.2 657.5)"/><rect x="1010.8" y="650.1" width="2.2" height="0.9" fill="#34465c" transform="rotate(93 1010.8 650.1)"/><rect x="1015.4" y="611.3" width="2.2" height="0.9" fill="#34465c" transform="rotate(134 1015.4 611.3)"/><rect x="996.9" y="593.6" width="2.2" height="0.9" fill="#34465c" transform="rotate(50 996.9 593.6)"/><rect x="1011.7" y="572.3" width="2.2" height="0.9" fill="#34465c" transform="rotate(105 1011.7 572.3)"/><rect x="1010.6" y="580.2" width="2.2" height="0.9" fill="#34465c" transform="rotate(102 1010.6 580.2)"/></g><polygon points="796,544 821.7,544 821.7,553 796,553" fill="#f9f5f2"/><rect x="842" y="523" width="34.7" height="15.5" fill="#faf7f5"/><rect x="896.8" y="535" width="26" height="8.4" fill="#bdbdbd"/><rect x="943" y="511" width="35" height="5" fill="#db9624"/><rect x="994" y="562.7" width="19" height="6.8" fill="#f9dde0"/><rect x="1040" y="520.7" width="23" height="7.3" fill="#db9624"/><rect x="1094" y="567.7" width="26" height="3.6" rx="1.5" fill="#1e6fa8"/><polygon points="1146.2,506 1180.3,503.8 1181,514.8 1146.6,516.3" fill="#f8491a"/><rect x="795.5" y="489" width="12" height="30" rx="6" fill="#f88a6e"/><rect x="806" y="491" width="11" height="30" rx="5.5" fill="#f88a6e"/><rect x="816" y="495" width="11" height="30" rx="5.5" fill="#f88a6e"/><rect x="823" y="503" width="10" height="23" rx="5" fill="#f88a6e"/><path d="M788 512 C784 520 786 532 797 544 L820 544 C826 535 828 528 826 520 L808 516 C800 508 792 506 788 512Z" fill="#fdb99a"/><polygon points="836.4,469.8 838.0,455.0 847.8,451.0 860.8,451.6 872.2,456.8 880.3,461.7 873.0,496.7 873.0,520.3 843.7,522.7 843.7,499.0 842.1,495.9" fill="#5e3730" stroke="#5e3730" stroke-width="0.7" stroke-linejoin="round"/><path d="M838.5 460.0 L830.6 424.9 C829.2 420.0 836.5 417.9 837.9 422.8 L847.8 451.0 Z" fill="#5e3730" stroke="#5e3730" stroke-width="0.7" stroke-linejoin="round"/><path d="M847.8 451.0 L849.7 416.9 C849.6 411.7 857.4 411.5 857.5 416.7 L860.8 451.6 Z" fill="#5e3730" stroke="#5e3730" stroke-width="0.7" stroke-linejoin="round"/><path d="M860.8 451.6 L870.8 423.7 C872.2 418.8 879.5 420.8 878.2 425.7 L872.2 456.8 Z" fill="#5e3730" stroke="#5e3730" stroke-width="0.7" stroke-linejoin="round"/><path d="M872.2 456.8 L885.1 439.1 C887.7 435.1 893.8 439.1 891.1 443.1 L880.3 461.7 Z" fill="#5e3730" stroke="#5e3730" stroke-width="0.7" stroke-linejoin="round"/><path d="M836.4 469.8 L823.5 457.3 C819.9 453.1 813.7 458.4 817.2 462.6 L844.0 497.0 Z" fill="#5e3730" stroke="#5e3730" stroke-width="0.7" stroke-linejoin="round"/><polygon points="937.4,451.7 941.0,440.0 949.1,433.6 963.6,434.5 976.2,439.0 984.3,448.0 976.2,482.3 976.0,511.0 944.6,511.0 944.6,486.0 943.7,484.0" fill="#fdc4a6" stroke="#fdc4a6" stroke-width="0.7" stroke-linejoin="round"/><path d="M940.0 444.0 L931.1 405.1 C929.7 400.1 937.2 398.0 938.6 403.0 L949.1 433.6 Z" fill="#fdc4a6" stroke="#fdc4a6" stroke-width="0.7" stroke-linejoin="round"/><path d="M949.1 433.6 L953.2 397.0 C953.3 391.7 961.3 391.9 961.2 397.2 L963.6 434.5 Z" fill="#fdc4a6" stroke="#fdc4a6" stroke-width="0.7" stroke-linejoin="round"/><path d="M963.6 434.5 L975.8 404.7 C977.4 399.7 984.8 402.0 983.3 407.0 L976.2 439.0 Z" fill="#fdc4a6" stroke="#fdc4a6" stroke-width="0.7" stroke-linejoin="round"/><path d="M976.2 439.0 L991.7 421.8 C994.7 417.8 1000.6 422.2 997.7 426.2 L984.3 448.0 Z" fill="#fdc4a6" stroke="#fdc4a6" stroke-width="0.7" stroke-linejoin="round"/><path d="M937.4 451.7 L922.4 438.1 C919.1 433.7 912.6 438.7 915.9 443.0 L944.5 486.0 Z" fill="#fdc4a6" stroke="#fdc4a6" stroke-width="0.7" stroke-linejoin="round"/><polygon points="992.0,532.0 994.3,524.0 1001.7,522.3 1010.2,520.6 1014.0,528.0 1016.4,535.4 1017.0,546.7 1010.2,562.6 995.4,562.6" fill="#a8504a" stroke="#a8504a" stroke-width="0.7" stroke-linejoin="round"/><path d="M992.0 532.0 L981.4 517.2 C979.4 514.7 983.2 511.7 985.2 514.2 L994.3 524.0 Z" fill="#a8504a" stroke="#a8504a" stroke-width="0.7" stroke-linejoin="round"/><path d="M994.3 524.0 L990.4 505.5 C989.5 502.4 994.1 501.1 995.0 504.1 L1001.7 522.3 Z" fill="#a8504a" stroke="#a8504a" stroke-width="0.7" stroke-linejoin="round"/><path d="M1001.7 522.3 L1003.1 500.4 C1003.1 497.1 1008.1 497.0 1008.1 500.4 L1010.2 520.6 Z" fill="#a8504a" stroke="#a8504a" stroke-width="0.7" stroke-linejoin="round"/><path d="M1010.2 520.6 L1016.2 504.6 C1017.2 501.5 1021.7 503.0 1020.8 506.0 L1014.0 530.0 Z" fill="#a8504a" stroke="#a8504a" stroke-width="0.7" stroke-linejoin="round"/><path d="M1016.4 535.4 L1025.3 525.1 C1027.3 522.4 1031.5 525.5 1029.4 528.2 L1016.0 548.0 Z" fill="#a8504a" stroke="#a8504a" stroke-width="0.7" stroke-linejoin="round"/><clipPath id="h5c"><polygon points="992.0,532.0 994.3,524.0 1001.7,522.3 1010.2,520.6 1014.0,528.0 1016.4,535.4 1017.0,546.7 1010.2,562.6 995.4,562.6" fill="#a8504a" stroke="#a8504a" stroke-width="0.7" stroke-linejoin="round"/><path d="M992.0 532.0 L981.4 517.2 C979.4 514.7 983.2 511.7 985.2 514.2 L994.3 524.0 Z" fill="#a8504a" stroke="#a8504a" stroke-width="0.7" stroke-linejoin="round"/><path d="M994.3 524.0 L990.4 505.5 C989.5 502.4 994.1 501.1 995.0 504.1 L1001.7 522.3 Z" fill="#a8504a" stroke="#a8504a" stroke-width="0.7" stroke-linejoin="round"/><path d="M1001.7 522.3 L1003.1 500.4 C1003.1 497.1 1008.1 497.0 1008.1 500.4 L1010.2 520.6 Z" fill="#a8504a" stroke="#a8504a" stroke-width="0.7" stroke-linejoin="round"/><path d="M1010.2 520.6 L1016.2 504.6 C1017.2 501.5 1021.7 503.0 1020.8 506.0 L1014.0 530.0 Z" fill="#a8504a" stroke="#a8504a" stroke-width="0.7" stroke-linejoin="round"/><path d="M1016.4 535.4 L1025.3 525.1 C1027.3 522.4 1031.5 525.5 1029.4 528.2 L1016.0 548.0 Z" fill="#a8504a" stroke="#a8504a" stroke-width="0.7" stroke-linejoin="round"/></clipPath><g clip-path="url(#h5c)"><rect x="1002.6" y="533.9" width="1.5" height="1.5" fill="#8a877c"/><rect x="1005.4" y="535.8" width="1" height="2" fill="#8a877c"/><rect x="1003.8" y="537.5" width="1" height="1" fill="#8a877c"/><rect x="1002.3" y="506.4" width="2" height="2" fill="#8a877c"/><rect x="1011.7" y="536.3" width="1.5" height="1.5" fill="#8a877c"/><rect x="1012.7" y="537.6" width="1" height="2" fill="#8a877c"/><rect x="980.8" y="531.9" width="1" height="1" fill="#8a877c"/><rect x="989.5" y="513.0" width="1" height="1.5" fill="#8a877c"/><rect x="996.3" y="536.0" width="1" height="2" fill="#8a877c"/><rect x="991.7" y="516.4" width="1" height="2" fill="#8a877c"/><rect x="984.2" y="540.2" width="1.5" height="2" fill="#8a877c"/><rect x="1029.8" y="552.5" width="2" height="1.5" fill="#8a877c"/><rect x="995.8" y="512.2" width="1.5" height="1" fill="#8a877c"/><rect x="983.5" y="547.6" width="1.5" height="1" fill="#8a877c"/><rect x="1022.3" y="522.5" width="1" height="2" fill="#8a877c"/><rect x="980.0" y="510.8" width="1" height="1.5" fill="#8a877c"/><rect x="998.8" y="543.8" width="1.5" height="1" fill="#8a877c"/><rect x="1008.3" y="510.1" width="2" height="1.5" fill="#8a877c"/><rect x="996.8" y="517.5" width="1" height="1.5" fill="#8a877c"/><rect x="1017.9" y="504.8" width="1" height="2" fill="#8a877c"/><rect x="985.1" y="501.0" width="1.5" height="1" fill="#8a877c"/><rect x="1014.1" y="509.4" width="2" height="1" fill="#8a877c"/><rect x="1029.3" y="547.8" width="1.5" height="2" fill="#8a877c"/><rect x="999.2" y="523.1" width="1" height="1" fill="#8a877c"/><rect x="993.5" y="561.1" width="2" height="1.5" fill="#8a877c"/><rect x="1029.9" y="498.3" width="1" height="1.5" fill="#8a877c"/><rect x="1029.8" y="536.7" width="2" height="1" fill="#8a877c"/><rect x="982.1" y="506.7" width="1.5" height="1.5" fill="#8a877c"/><rect x="980.5" y="537.3" width="1.5" height="1.5" fill="#8a877c"/><rect x="983.7" y="502.9" width="2" height="2" fill="#8a877c"/><rect x="992.2" y="536.7" width="1.5" height="2" fill="#8a877c"/><rect x="1002.7" y="560.3" width="1.5" height="2" fill="#8a877c"/><rect x="986.8" y="522.5" width="2" height="1" fill="#8a877c"/><rect x="995.5" y="512.1" width="2" height="1" fill="#8a877c"/><rect x="1016.3" y="507.5" width="2" height="2" fill="#8a877c"/><rect x="989.8" y="559.7" width="1.5" height="2" fill="#8a877c"/><rect x="983.9" y="500.1" width="1" height="1" fill="#8a877c"/><rect x="1005.6" y="513.8" width="2" height="2" fill="#8a877c"/><rect x="999.6" y="524.8" width="2" height="1.5" fill="#8a877c"/><rect x="994.7" y="508.6" width="2" height="1" fill="#8a877c"/><rect x="986.3" y="528.6" width="2" height="2" fill="#8a877c"/><rect x="1010.7" y="515.5" width="1" height="2" fill="#8a877c"/><rect x="980.8" y="514.8" width="1.5" height="1" fill="#8a877c"/><rect x="983.0" y="508.6" width="1.5" height="2" fill="#8a877c"/><rect x="1008.6" y="505.7" width="1.5" height="1" fill="#8a877c"/><rect x="1024.5" y="561.7" width="2" height="2" fill="#8a877c"/><rect x="1014.6" y="535.6" width="1" height="2" fill="#8a877c"/><rect x="981.8" y="498.2" width="1.5" height="2" fill="#8a877c"/><rect x="995.6" y="499.2" width="2" height="2" fill="#8a877c"/><rect x="983.7" y="501.4" width="1.5" height="1.5" fill="#8a877c"/><rect x="986.8" y="501.8" width="1.5" height="2" fill="#8a877c"/><rect x="998.4" y="499.9" width="2" height="2" fill="#8a877c"/><rect x="1015.2" y="549.4" width="1.5" height="1.5" fill="#8a877c"/><rect x="984.2" y="528.2" width="1" height="1.5" fill="#8a877c"/><rect x="1027.2" y="499.0" width="1.5" height="2" fill="#8a877c"/><rect x="980.7" y="540.7" width="1.5" height="2" fill="#8a877c"/><rect x="980.6" y="501.8" width="1" height="2" fill="#8a877c"/><rect x="985.8" y="514.0" width="1.5" height="2" fill="#8a877c"/><rect x="996.5" y="558.7" width="2" height="2" fill="#8a877c"/><rect x="1002.9" y="527.5" width="2" height="1" fill="#8a877c"/><rect x="1005.9" y="531.0" width="1.5" height="2" fill="#8a877c"/><rect x="984.4" y="498.5" width="2" height="1" fill="#8a877c"/><rect x="1004.9" y="537.6" width="1.5" height="1.5" fill="#8a877c"/><rect x="1024.8" y="521.3" width="1" height="2" fill="#8a877c"/><rect x="1010.6" y="531.2" width="1.5" height="2" fill="#8a877c"/><rect x="1026.5" y="529.9" width="1" height="1.5" fill="#8a877c"/><rect x="1000.2" y="513.5" width="2" height="1.5" fill="#8a877c"/><rect x="1020.2" y="546.8" width="1" height="1" fill="#8a877c"/><rect x="999.2" y="535.5" width="1.5" height="1" fill="#8a877c"/><rect x="986.8" y="529.8" width="1" height="2" fill="#8a877c"/><rect x="983.2" y="561.7" width="1" height="1" fill="#8a877c"/><rect x="1002.5" y="515.2" width="1" height="1.5" fill="#8a877c"/><rect x="999.1" y="531.3" width="2" height="1.5" fill="#8a877c"/><rect x="1015.8" y="552.6" width="2" height="1.5" fill="#8a877c"/><rect x="996.0" y="551.7" width="1.5" height="2" fill="#8a877c"/><rect x="982.1" y="543.8" width="2" height="1.5" fill="#8a877c"/><rect x="995.5" y="549.2" width="1" height="2" fill="#8a877c"/><rect x="986.8" y="527.0" width="1" height="1.5" fill="#8a877c"/><rect x="991.9" y="506.3" width="1" height="2" fill="#8a877c"/><rect x="985.8" y="504.2" width="2" height="2" fill="#8a877c"/><rect x="1012.0" y="521.3" width="1" height="2" fill="#8a877c"/><rect x="989.9" y="551.4" width="1.5" height="1" fill="#8a877c"/><rect x="1015.7" y="546.8" width="2" height="2" fill="#8a877c"/><rect x="981.8" y="511.9" width="1.5" height="2" fill="#8a877c"/><rect x="1014.9" y="531.3" width="2" height="1" fill="#8a877c"/><rect x="999.7" y="549.3" width="1" height="1" fill="#8a877c"/><rect x="1000.5" y="555.9" width="1.5" height="1" fill="#8a877c"/><rect x="1002.5" y="510.0" width="1" height="1.5" fill="#8a877c"/><rect x="1007.5" y="540.1" width="2" height="1.5" fill="#8a877c"/><rect x="1003.2" y="540.0" width="1" height="1" fill="#8a877c"/><rect x="1016.1" y="551.0" width="2" height="2" fill="#8a877c"/><rect x="986.2" y="513.0" width="1.5" height="1" fill="#8a877c"/><rect x="1028.9" y="532.4" width="1.5" height="1.5" fill="#8a877c"/><rect x="1025.5" y="553.5" width="1.5" height="2" fill="#8a877c"/><rect x="984.1" y="526.1" width="2" height="1.5" fill="#8a877c"/><rect x="1018.4" y="529.2" width="1" height="1" fill="#8a877c"/><rect x="1020.5" y="501.2" width="1" height="1" fill="#8a877c"/><rect x="1006.7" y="542.3" width="1" height="1.5" fill="#8a877c"/><rect x="987.4" y="531.1" width="2" height="2" fill="#8a877c"/><rect x="1022.0" y="542.5" width="1.5" height="2" fill="#8a877c"/><rect x="1027.5" y="502.7" width="1" height="1.5" fill="#8a877c"/><rect x="1006.3" y="516.2" width="2" height="2" fill="#8a877c"/><rect x="1011.9" y="531.5" width="2" height="1.5" fill="#8a877c"/><rect x="995.6" y="522.2" width="2" height="1" fill="#8a877c"/><rect x="995.2" y="506.3" width="2" height="2" fill="#8a877c"/><rect x="993.6" y="529.8" width="1.5" height="2" fill="#8a877c"/><rect x="985.7" y="497.3" width="1.5" height="1" fill="#8a877c"/><rect x="1006.9" y="499.9" width="1.5" height="2" fill="#8a877c"/><rect x="1020.1" y="534.1" width="1.5" height="1" fill="#8a877c"/><rect x="1014.5" y="501.3" width="2" height="1.5" fill="#8a877c"/></g><polygon points="1039.9,489.2 1041.0,482.0 1046.1,475.6 1054.6,476.2 1063.1,479.0 1067.1,485.8 1063.1,502.9 1061.4,520.4 1042.1,520.4 1041.6,506.3" fill="#d9623a" stroke="#d9623a" stroke-width="0.7" stroke-linejoin="round"/><path d="M1041.0 484.0 L1034.4 457.7 C1033.3 453.9 1038.9 452.4 1040.0 456.1 L1046.1 475.6 Z" fill="#d9623a" stroke="#d9623a" stroke-width="0.7" stroke-linejoin="round"/><path d="M1046.1 475.6 L1047.6 452.5 C1047.6 448.5 1053.6 448.5 1053.6 452.5 L1054.6 476.2 Z" fill="#d9623a" stroke="#d9623a" stroke-width="0.7" stroke-linejoin="round"/><path d="M1054.6 476.2 L1061.8 456.6 C1062.9 452.9 1068.5 454.5 1067.4 458.2 L1063.1 479.0 Z" fill="#d9623a" stroke="#d9623a" stroke-width="0.7" stroke-linejoin="round"/><path d="M1063.1 479.0 L1072.4 467.7 C1074.5 464.7 1079.0 468.0 1076.8 470.9 L1067.1 485.8 Z" fill="#d9623a" stroke="#d9623a" stroke-width="0.7" stroke-linejoin="round"/><path d="M1039.9 489.2 L1029.3 479.4 C1026.8 476.3 1022.2 480.2 1024.7 483.2 L1041.6 506.3 Z" fill="#d9623a" stroke="#d9623a" stroke-width="0.7" stroke-linejoin="round"/><polygon points="1088.3,523.3 1090.0,512.0 1098.2,507.2 1109.4,507.9 1119.9,512.1 1124.8,517.7 1119.2,542.9 1117.8,566.8 1094.6,566.8 1093.9,548.5" fill="#fdc4a6" stroke="#fdc4a6" stroke-width="0.7" stroke-linejoin="round"/><path d="M1090.5 516.0 L1083.7 485.5 C1082.5 481.0 1089.3 479.2 1090.5 483.7 L1098.2 507.2 Z" fill="#fdc4a6" stroke="#fdc4a6" stroke-width="0.7" stroke-linejoin="round"/><path d="M1098.2 507.2 L1100.8 478.4 C1100.9 473.6 1108.1 473.8 1108.0 478.6 L1109.4 507.9 Z" fill="#fdc4a6" stroke="#fdc4a6" stroke-width="0.7" stroke-linejoin="round"/><path d="M1109.4 507.9 L1119.0 484.2 C1120.4 479.7 1127.1 481.8 1125.7 486.3 L1119.9 512.1 Z" fill="#fdc4a6" stroke="#fdc4a6" stroke-width="0.7" stroke-linejoin="round"/><path d="M1119.9 512.1 L1132.1 497.2 C1134.8 493.7 1140.0 497.8 1137.3 501.2 L1124.8 517.7 Z" fill="#fdc4a6" stroke="#fdc4a6" stroke-width="0.7" stroke-linejoin="round"/><path d="M1088.3 523.3 L1077.4 512.1 C1074.4 508.2 1068.5 512.7 1071.5 516.6 L1093.9 548.5 Z" fill="#fdc4a6" stroke="#fdc4a6" stroke-width="0.7" stroke-linejoin="round"/><rect x="900" y="478.5" width="11.5" height="34" rx="5.7" fill="#f26b4e"/><rect x="910" y="481" width="10.5" height="35" rx="5.2" fill="#f26b4e"/><rect x="919" y="485" width="10.5" height="33" rx="5.2" fill="#f26b4e"/><rect x="926" y="494" width="10" height="24" rx="5" fill="#f26b4e"/><path d="M891 497 C887 507 890 521 899 534 L922 534 C926 527 929 520 930.5 514 L916 514 C912 507 900 493 891 497Z" fill="#f88b6f"/><rect x="1145.5" y="436.8" width="12.5" height="38" rx="6" fill="#4a2824"/><rect x="1156.5" y="439" width="12" height="40" rx="6" fill="#4a2824"/><rect x="1167" y="443.5" width="12" height="40" rx="6" fill="#4a2824"/><rect x="1177" y="453" width="13.5" height="30" rx="6.5" fill="#4a2824"/><polygon points="1146,462 1190,466 1184,483.5 1165,483.5 1146,472" fill="#4a2824"/><path d="M1134 466 C1131 480 1137 491 1149 500 L1148 507 L1179 507 L1178.5 498 C1181 493 1183 489 1185 482 L1168 483.5 C1162 476 1152 466 1141 461 C1137.5 461.5 1135 463.5 1134 466Z" fill="#613830"/><path d="M1148 474 L1153 475 M1156 477 L1162 478" stroke="#3d211d" stroke-width="1.2"/></symbol></defs></svg><svg class="r" style="left:304px;top:168px" width="962" height="542"><use href="#s1" width="962" height="542"/></svg><div class="r" style="left:304px;top:168px;width:962px;height:542px;border:1px solid #d6d4d2;box-sizing:border-box"></div><svg class="r" style="left:0;top:0" width="1366" height="749"><rect x="776.7" y="480.4" width="64.7" height="207.6" fill="none" stroke="#8f8f8f" stroke-width="1"/><line x1="809.05" y1="480.4" x2="809.05" y2="454.9" stroke="#8f8f8f" stroke-width="1"/><rect x="807.7" y="403.5" width="95.0" height="283.4" fill="none" stroke="#8f8f8f" stroke-width="1"/><line x1="855.2" y1="403.5" x2="855.2" y2="378.0" stroke="#8f8f8f" stroke-width="1"/><rect x="878.6" y="469" width="65.8" height="216.6" fill="none" stroke="#8f8f8f" stroke-width="1"/><line x1="911.5" y1="469" x2="911.5" y2="443.5" stroke="#8f8f8f" stroke-width="1"/><rect x="903.7" y="381.5" width="107.0" height="305.0" fill="none" stroke="#8f8f8f" stroke-width="1"/><line x1="957.2" y1="381.5" x2="957.2" y2="356.0" stroke="#8f8f8f" stroke-width="1"/><rect x="971.4" y="487.9" width="67.2" height="197.7" fill="none" stroke="#8f8f8f" stroke-width="1"/><line x1="1005.0" y1="487.9" x2="1005.0" y2="462.4" stroke="#8f8f8f" stroke-width="1"/><rect x="1015.8" y="440.2" width="71.0" height="245.8" fill="none" stroke="#8f8f8f" stroke-width="1"/><line x1="1051.3" y1="440.2" x2="1051.3" y2="414.7" stroke="#8f8f8f" stroke-width="1"/><rect x="1062.7" y="465.6" width="84.9" height="220.4" fill="none" stroke="#8f8f8f" stroke-width="1"/><line x1="1105.15" y1="465.6" x2="1105.15" y2="440.1" stroke="#8f8f8f" stroke-width="1"/><rect x="1123.5" y="428.3" width="76.1" height="257.7" fill="none" stroke="#8f8f8f" stroke-width="1"/><line x1="1161.55" y1="428.3" x2="1161.55" y2="402.8" stroke="#8f8f8f" stroke-width="1"/><g transform="translate(809.05,445.4)"><path d="M4.89 5.82 A7.6 7.6 0 1 1 7.05 -2.85" fill="none" stroke="#8f8f8f" stroke-width="5.4"/><path d="M4.89 5.82 A7.6 7.6 0 1 1 7.05 -2.85" fill="none" stroke="#f9f5f2" stroke-width="2.2"/><path d="M1.5 -1.6 L15.5 -1.6 L8 5.6Z" fill="#f9f5f2" stroke="#8f8f8f" stroke-width="1.4" stroke-linejoin="miter"/></g><circle cx="776.7" cy="480.4" r="4.9" fill="#fdfdfd" stroke="#8f8f8f" stroke-width="1.6"/><circle cx="809.0" cy="480.4" r="4.9" fill="#fdfdfd" stroke="#8f8f8f" stroke-width="1.6"/><circle cx="841.4" cy="480.4" r="4.9" fill="#fdfdfd" stroke="#8f8f8f" stroke-width="1.6"/><circle cx="776.7" cy="584.2" r="4.9" fill="#fdfdfd" stroke="#8f8f8f" stroke-width="1.6"/><circle cx="841.4" cy="584.2" r="4.9" fill="#fdfdfd" stroke="#8f8f8f" stroke-width="1.6"/><circle cx="776.7" cy="688.0" r="4.9" fill="#fdfdfd" stroke="#8f8f8f" stroke-width="1.6"/><circle cx="809.0" cy="688.0" r="4.9" fill="#fdfdfd" stroke="#8f8f8f" stroke-width="1.6"/><circle cx="841.4" cy="688.0" r="4.9" fill="#fdfdfd" stroke="#8f8f8f" stroke-width="1.6"/><g transform="translate(855.2,368.5)"><path d="M4.89 5.82 A7.6 7.6 0 1 1 7.05 -2.85" fill="none" stroke="#8f8f8f" stroke-width="5.4"/><path d="M4.89 5.82 A7.6 7.6 0 1 1 7.05 -2.85" fill="none" stroke="#f9f5f2" stroke-width="2.2"/><path d="M1.5 -1.6 L15.5 -1.6 L8 5.6Z" fill="#f9f5f2" stroke="#8f8f8f" stroke-width="1.4" stroke-linejoin="miter"/></g><circle cx="807.7" cy="403.5" r="4.9" fill="#fdfdfd" stroke="#8f8f8f" stroke-width="1.6"/><circle cx="855.2" cy="403.5" r="4.9" fill="#fdfdfd" stroke="#8f8f8f" stroke-width="1.6"/><circle cx="902.7" cy="403.5" r="4.9" fill="#fdfdfd" stroke="#8f8f8f" stroke-width="1.6"/><circle cx="807.7" cy="545.2" r="4.9" fill="#fdfdfd" stroke="#8f8f8f" stroke-width="1.6"/><circle cx="902.7" cy="545.2" r="4.9" fill="#fdfdfd" stroke="#8f8f8f" stroke-width="1.6"/><circle cx="807.7" cy="686.9" r="4.9" fill="#fdfdfd" stroke="#8f8f8f" stroke-width="1.6"/><circle cx="855.2" cy="686.9" r="4.9" fill="#fdfdfd" stroke="#8f8f8f" stroke-width="1.6"/><circle cx="902.7" cy="686.9" r="4.9" fill="#fdfdfd" stroke="#8f8f8f" stroke-width="1.6"/><g transform="translate(911.5,434)"><path d="M4.89 5.82 A7.6 7.6 0 1 1 7.05 -2.85" fill="none" stroke="#8f8f8f" stroke-width="5.4"/><path d="M4.89 5.82 A7.6 7.6 0 1 1 7.05 -2.85" fill="none" stroke="#f9f5f2" stroke-width="2.2"/><path d="M1.5 -1.6 L15.5 -1.6 L8 5.6Z" fill="#f9f5f2" stroke="#8f8f8f" stroke-width="1.4" stroke-linejoin="miter"/></g><circle cx="878.6" cy="469.0" r="4.9" fill="#fdfdfd" stroke="#8f8f8f" stroke-width="1.6"/><circle cx="911.5" cy="469.0" r="4.9" fill="#fdfdfd" stroke="#8f8f8f" stroke-width="1.6"/><circle cx="944.4" cy="469.0" r="4.9" fill="#fdfdfd" stroke="#8f8f8f" stroke-width="1.6"/><circle cx="878.6" cy="577.3" r="4.9" fill="#fdfdfd" stroke="#8f8f8f" stroke-width="1.6"/><circle cx="944.4" cy="577.3" r="4.9" fill="#fdfdfd" stroke="#8f8f8f" stroke-width="1.6"/><circle cx="878.6" cy="685.6" r="4.9" fill="#fdfdfd" stroke="#8f8f8f" stroke-width="1.6"/><circle cx="911.5" cy="685.6" r="4.9" fill="#fdfdfd" stroke="#8f8f8f" stroke-width="1.6"/><circle cx="944.4" cy="685.6" r="4.9" fill="#fdfdfd" stroke="#8f8f8f" stroke-width="1.6"/><g transform="translate(957.2,346.5)"><path d="M4.89 5.82 A7.6 7.6 0 1 1 7.05 -2.85" fill="none" stroke="#8f8f8f" stroke-width="5.4"/><path d="M4.89 5.82 A7.6 7.6 0 1 1 7.05 -2.85" fill="none" stroke="#f9f5f2" stroke-width="2.2"/><path d="M1.5 -1.6 L15.5 -1.6 L8 5.6Z" fill="#f9f5f2" stroke="#8f8f8f" stroke-width="1.4" stroke-linejoin="miter"/></g><circle cx="903.7" cy="381.5" r="4.9" fill="#fdfdfd" stroke="#8f8f8f" stroke-width="1.6"/><circle cx="957.2" cy="381.5" r="4.9" fill="#fdfdfd" stroke="#8f8f8f" stroke-width="1.6"/><circle cx="1010.7" cy="381.5" r="4.9" fill="#fdfdfd" stroke="#8f8f8f" stroke-width="1.6"/><circle cx="903.7" cy="534.0" r="4.9" fill="#fdfdfd" stroke="#8f8f8f" stroke-width="1.6"/><circle cx="1010.7" cy="534.0" r="4.9" fill="#fdfdfd" stroke="#8f8f8f" stroke-width="1.6"/><circle cx="903.7" cy="686.5" r="4.9" fill="#fdfdfd" stroke="#8f8f8f" stroke-width="1.6"/><circle cx="957.2" cy="686.5" r="4.9" fill="#fdfdfd" stroke="#8f8f8f" stroke-width="1.6"/><circle cx="1010.7" cy="686.5" r="4.9" fill="#fdfdfd" stroke="#8f8f8f" stroke-width="1.6"/><g transform="translate(1005.0,452.9)"><path d="M4.89 5.82 A7.6 7.6 0 1 1 7.05 -2.85" fill="none" stroke="#8f8f8f" stroke-width="5.4"/><path d="M4.89 5.82 A7.6 7.6 0 1 1 7.05 -2.85" fill="none" stroke="#f9f5f2" stroke-width="2.2"/><path d="M1.5 -1.6 L15.5 -1.6 L8 5.6Z" fill="#f9f5f2" stroke="#8f8f8f" stroke-width="1.4" stroke-linejoin="miter"/></g><circle cx="971.4" cy="487.9" r="4.9" fill="#fdfdfd" stroke="#8f8f8f" stroke-width="1.6"/><circle cx="1005.0" cy="487.9" r="4.9" fill="#fdfdfd" stroke="#8f8f8f" stroke-width="1.6"/><circle cx="1038.6" cy="487.9" r="4.9" fill="#fdfdfd" stroke="#8f8f8f" stroke-width="1.6"/><circle cx="971.4" cy="586.8" r="4.9" fill="#fdfdfd" stroke="#8f8f8f" stroke-width="1.6"/><circle cx="1038.6" cy="586.8" r="4.9" fill="#fdfdfd" stroke="#8f8f8f" stroke-width="1.6"/><circle cx="971.4" cy="685.6" r="4.9" fill="#fdfdfd" stroke="#8f8f8f" stroke-width="1.6"/><circle cx="1005.0" cy="685.6" r="4.9" fill="#fdfdfd" stroke="#8f8f8f" stroke-width="1.6"/><circle cx="1038.6" cy="685.6" r="4.9" fill="#fdfdfd" stroke="#8f8f8f" stroke-width="1.6"/><g transform="translate(1051.3,405.2)"><path d="M4.89 5.82 A7.6 7.6 0 1 1 7.05 -2.85" fill="none" stroke="#8f8f8f" stroke-width="5.4"/><path d="M4.89 5.82 A7.6 7.6 0 1 1 7.05 -2.85" fill="none" stroke="#f9f5f2" stroke-width="2.2"/><path d="M1.5 -1.6 L15.5 -1.6 L8 5.6Z" fill="#f9f5f2" stroke="#8f8f8f" stroke-width="1.4" stroke-linejoin="miter"/></g><circle cx="1015.8" cy="440.2" r="4.9" fill="#fdfdfd" stroke="#8f8f8f" stroke-width="1.6"/><circle cx="1051.3" cy="440.2" r="4.9" fill="#fdfdfd" stroke="#8f8f8f" stroke-width="1.6"/><circle cx="1086.8" cy="440.2" r="4.9" fill="#fdfdfd" stroke="#8f8f8f" stroke-width="1.6"/><circle cx="1015.8" cy="563.1" r="4.9" fill="#fdfdfd" stroke="#8f8f8f" stroke-width="1.6"/><circle cx="1086.8" cy="563.1" r="4.9" fill="#fdfdfd" stroke="#8f8f8f" stroke-width="1.6"/><circle cx="1015.8" cy="686.0" r="4.9" fill="#fdfdfd" stroke="#8f8f8f" stroke-width="1.6"/><circle cx="1051.3" cy="686.0" r="4.9" fill="#fdfdfd" stroke="#8f8f8f" stroke-width="1.6"/><circle cx="1086.8" cy="686.0" r="4.9" fill="#fdfdfd" stroke="#8f8f8f" stroke-width="1.6"/><g transform="translate(1105.15,430.6)"><path d="M4.89 5.82 A7.6 7.6 0 1 1 7.05 -2.85" fill="none" stroke="#8f8f8f" stroke-width="5.4"/><path d="M4.89 5.82 A7.6 7.6 0 1 1 7.05 -2.85" fill="none" stroke="#f9f5f2" stroke-width="2.2"/><path d="M1.5 -1.6 L15.5 -1.6 L8 5.6Z" fill="#f9f5f2" stroke="#8f8f8f" stroke-width="1.4" stroke-linejoin="miter"/></g><circle cx="1062.7" cy="465.6" r="4.9" fill="#fdfdfd" stroke="#8f8f8f" stroke-width="1.6"/><circle cx="1105.2" cy="465.6" r="4.9" fill="#fdfdfd" stroke="#8f8f8f" stroke-width="1.6"/><circle cx="1147.6" cy="465.6" r="4.9" fill="#fdfdfd" stroke="#8f8f8f" stroke-width="1.6"/><circle cx="1062.7" cy="575.8" r="4.9" fill="#fdfdfd" stroke="#8f8f8f" stroke-width="1.6"/><circle cx="1147.6" cy="575.8" r="4.9" fill="#fdfdfd" stroke="#8f8f8f" stroke-width="1.6"/><circle cx="1062.7" cy="686.0" r="4.9" fill="#fdfdfd" stroke="#8f8f8f" stroke-width="1.6"/><circle cx="1105.2" cy="686.0" r="4.9" fill="#fdfdfd" stroke="#8f8f8f" stroke-width="1.6"/><circle cx="1147.6" cy="686.0" r="4.9" fill="#fdfdfd" stroke="#8f8f8f" stroke-width="1.6"/><g transform="translate(1161.55,393.3)"><path d="M4.89 5.82 A7.6 7.6 0 1 1 7.05 -2.85" fill="none" stroke="#8f8f8f" stroke-width="5.4"/><path d="M4.89 5.82 A7.6 7.6 0 1 1 7.05 -2.85" fill="none" stroke="#f9f5f2" stroke-width="2.2"/><path d="M1.5 -1.6 L15.5 -1.6 L8 5.6Z" fill="#f9f5f2" stroke="#8f8f8f" stroke-width="1.4" stroke-linejoin="miter"/></g><circle cx="1123.5" cy="428.3" r="4.9" fill="#fdfdfd" stroke="#8f8f8f" stroke-width="1.6"/><circle cx="1161.5" cy="428.3" r="4.9" fill="#fdfdfd" stroke="#8f8f8f" stroke-width="1.6"/><circle cx="1199.6" cy="428.3" r="4.9" fill="#fdfdfd" stroke="#8f8f8f" stroke-width="1.6"/><circle cx="1123.5" cy="557.1" r="4.9" fill="#fdfdfd" stroke="#8f8f8f" stroke-width="1.6"/><circle cx="1199.6" cy="557.1" r="4.9" fill="#fdfdfd" stroke="#8f8f8f" stroke-width="1.6"/><circle cx="1123.5" cy="686.0" r="4.9" fill="#fdfdfd" stroke="#8f8f8f" stroke-width="1.6"/><circle cx="1161.5" cy="686.0" r="4.9" fill="#fdfdfd" stroke="#8f8f8f" stroke-width="1.6"/><circle cx="1199.6" cy="686.0" r="4.9" fill="#fdfdfd" stroke="#8f8f8f" stroke-width="1.6"/></svg><svg class="r" style="left:1276px;top:656px;" width="13" height="20" viewBox="0 0 13 20"><path d="M0.5 0.5V16L4.2 12.6L7 19L9.6 17.9L7 11.6H12Z" fill="#fff" stroke="#1b2a4a" stroke-width="1"/></svg><div class="r" style="left:1355px;top:189px;width:11px;height:467px;background:#d2d0ce;"></div><div class="r" style="left:1355px;top:157px;width:12px;height:13px;border:1px solid #a8a6a4;background:#f9f7f5"></div><svg class="r" style="left:1359px;top:162px;" width="8" height="5" viewBox="0 0 8 5"><path d="M0 5L4.5 0L9 5Z" fill="#605e5c"/></svg><div class="r" style="left:1355px;top:172px;width:12px;height:16px;border:1px solid #a8a6a4;background:#f9f7f5"></div><div class="r" style="left:1355px;top:656px;width:12px;height:13px;border-left:1px solid #c8c6c4;background:#f9f7f5"></div><svg class="r" style="left:1359px;top:661px;" width="8" height="5" viewBox="0 0 8 5"><path d="M0 0L4.5 5L9 0Z" fill="#605e5c"/></svg><svg class="r" style="left:1359px;top:675px;" width="8" height="8" viewBox="0 0 8 8"><path d="M0 4L4.5 0L9 4Z M0 8L4.5 4L9 8Z" fill="#605e5c"/></svg><svg class="r" style="left:1359px;top:693px;" width="8" height="8" viewBox="0 0 8 8"><path d="M0 0L4.5 4L9 0Z M0 4L4.5 8L9 4Z" fill="#605e5c"/></svg><div class="r" style="left:216px;top:726px;width:1150px;height:1px;background:#a8a6a4;"></div><div class="r" style="left:0px;top:729px;width:1366px;height:20px;background:#f8f5f2;"></div><div class="t " style="left:3px;top:733.84px;font-size:12px;color:#3b3a39;letter-spacing:-0.3px;">Slide 1 of 39</div><div class="t " style="left:86px;top:733.84px;font-size:12px;color:#3b3a39;letter-spacing:-0.35px;">English (United States)</div><svg class="r" style="left:926px;top:734px;" width="15" height="13" viewBox="0 0 15 13"><path d="M0 7.5H14 M0 10H14 M0 12.5H9 M3 5H11" stroke="#444" stroke-width="1"/><path d="M5 2.5L7 0.8L9 2.5" fill="none" stroke="#444" stroke-width="1"/></svg><div class="t " style="left:944px;top:733.84px;font-size:12px;color:#3b3a39;letter-spacing:-0.1px;">Notes</div><div class="r" style="left:993px;top:729px;width:40px;height:20px;background:#d2d0ce;"></div><svg class="r" style="left:1006px;top:734px;" width="15" height="12" viewBox="0 0 15 12"><path d="M0.5 0.5H14.5V11.5H0.5Z M3.5 0.5V11.5 M3.5 9H14.5" fill="none" stroke="#444" stroke-width="1"/><path d="M7 3H11.5V6.5H7Z" fill="none" stroke="#444" stroke-width="1"/></svg><svg class="r" style="left:1046px;top:734px;" width="14" height="12" viewBox="0 0 14 12"><path d="M0.5 0.5H5.5V4.5H0.5Z M8.5 0.5H13.5V4.5H8.5Z M0.5 7.5H5.5V11.5H0.5Z M8.5 7.5H13.5V11.5H8.5Z" fill="none" stroke="#444" stroke-width="1"/></svg><svg class="r" style="left:1086px;top:733px;" width="14" height="13" viewBox="0 0 14 13"><path d="M0.5 0.5H6L7 1.5L8 0.5H13.5V12.5H8L7 11.5L6 12.5H0.5Z M7 1.5V11.5 M2.5 3.5H5 M2.5 6H5 M2.5 8.5H5 M9 3.5H11.5 M9 6H11.5 M9 8.5H11.5" fill="none" stroke="#444" stroke-width="1"/></svg><svg class="r" style="left:1127px;top:733px;" width="14" height="14" viewBox="0 0 14 14"><path d="M0 0.5H14 M1.5 0.5V7.5H12.5V0.5 M7 7.5V12.5 M3.5 12.5H10.5" fill="none" stroke="#444" stroke-width="1"/></svg><div class="r" style="left:1159px;top:740px;width:7px;height:1px;background:#444;"></div><div class="r" style="left:1173px;top:740px;width:99px;height:1px;background:#8a8886;"></div><div class="r" style="left:1220px;top:734px;width:5px;height:11px;background:#6b6967;"></div><div class="r" style="left:1277px;top:740px;width:8px;height:1px;background:#444;"></div><div class="r" style="left:1280.5px;top:736.5px;width:1px;height:8px;background:#444;"></div><div class="t " style="left:1297.5px;top:733.34px;font-size:12px;color:#3b3a39;letter-spacing:-0.6px;">100 %</div><svg class="r" style="left:1340px;top:732px;" width="16" height="15" viewBox="0 0 16 15"><path d="M4.5 4.5H11.5V10.5H4.5Z" fill="none" stroke="#444" stroke-width="1.1"/><path d="M2.5 5L0.5 7.5L2.5 10 M13.5 5L15.5 7.5L13.5 10 M5.5 2L8 0.3L10.5 2 M5.5 13L8 14.7L10.5 13" fill="none" stroke="#444" stroke-width="1"/></svg></div>
</body></html>
